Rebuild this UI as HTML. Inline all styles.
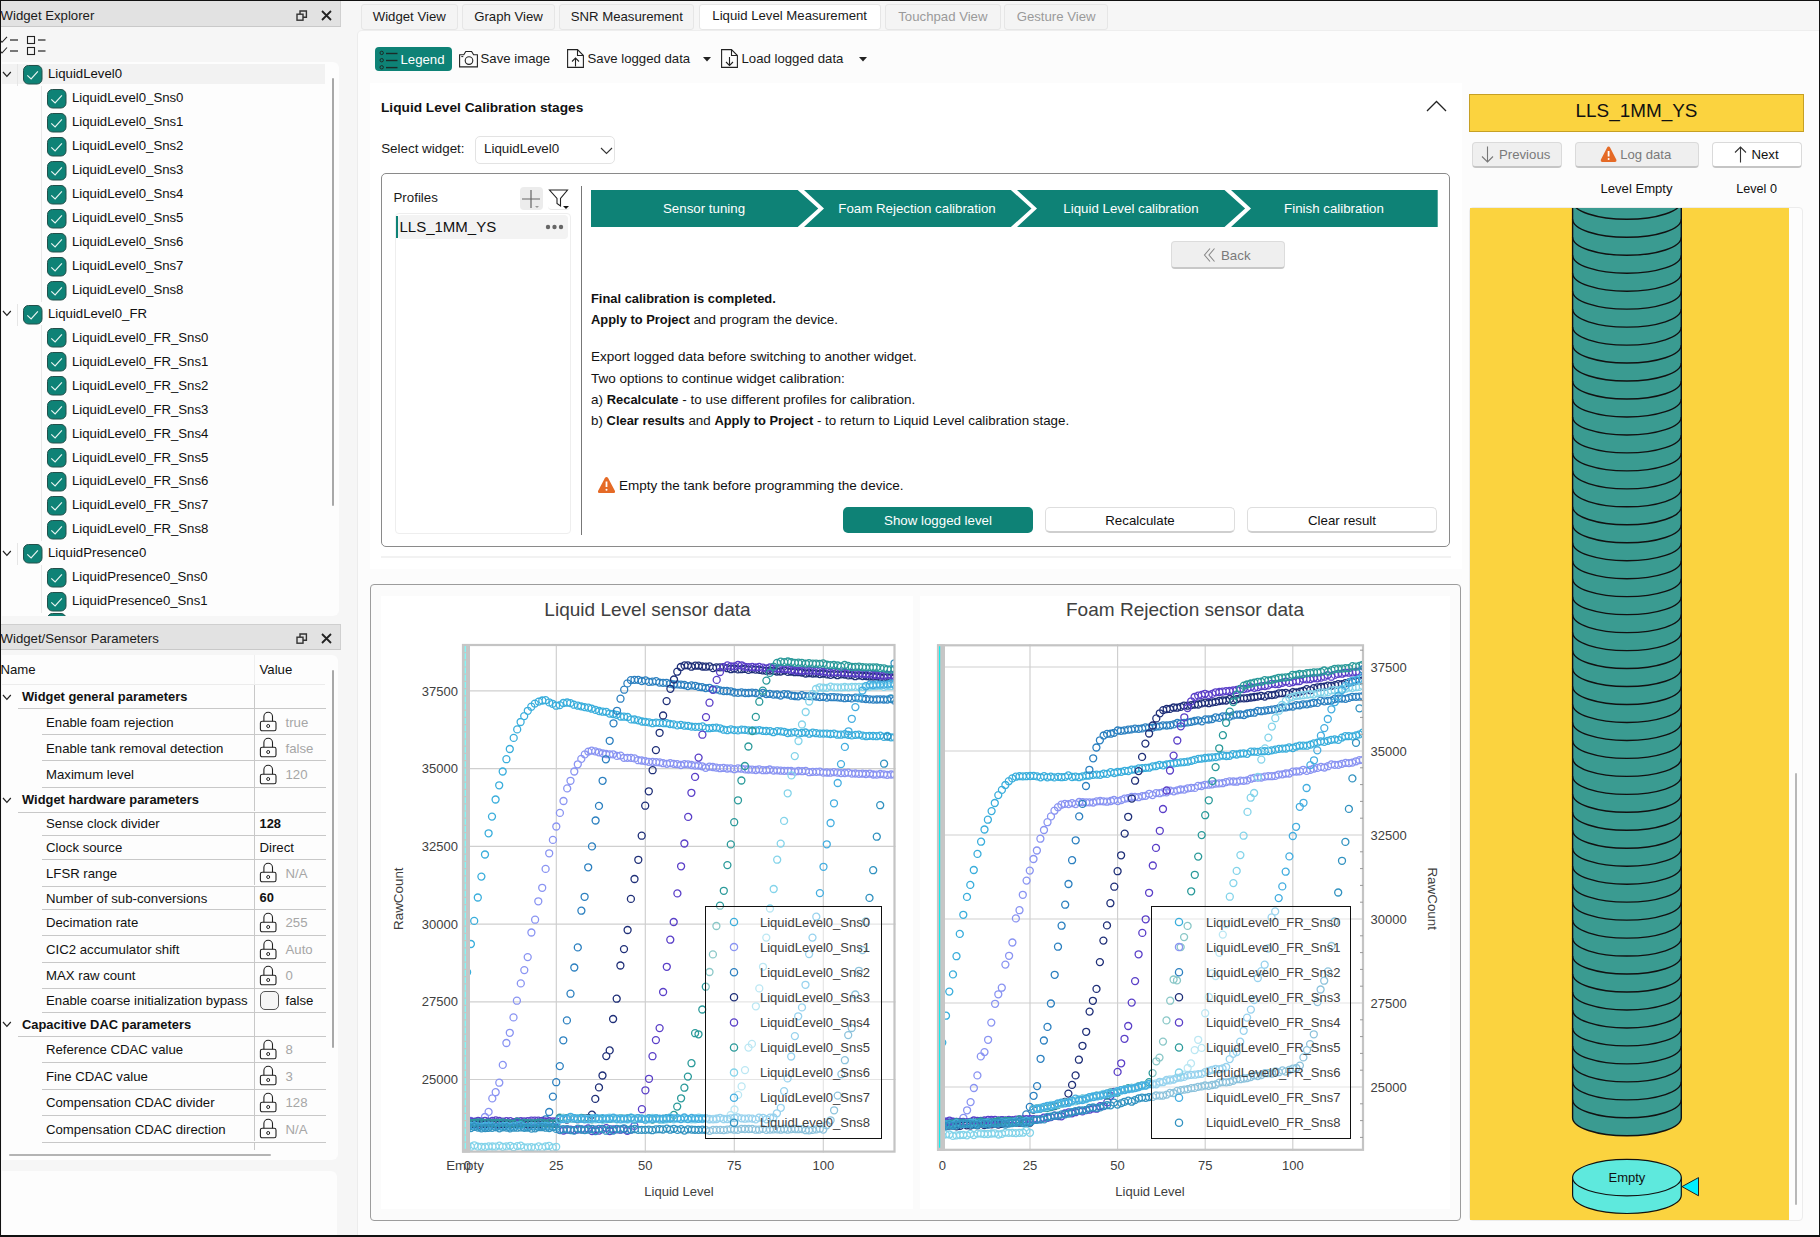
<!DOCTYPE html><html><head><meta charset="utf-8"><style>
html,body{margin:0;padding:0;}
body{width:1820px;height:1237px;position:relative;overflow:hidden;background:#f6f6f6;font-family:"Liberation Sans", sans-serif;}
.t{position:absolute;white-space:nowrap;line-height:1;}
.b{position:absolute;box-sizing:border-box;}
svg.b{overflow:visible;}

</style></head><body>
<div class="b" style="left:0px;top:0px;width:341px;height:27px;background:#e2e2e2;border-bottom:1px solid #c9c9c9;border-right:1px solid #d0d0d0;"></div>
<div class="t" style="left:0.50px;top:8.83px;font-size:13.2px;color:#1a1a1a;font-weight:normal;">Widget Explorer</div>
<svg class="b" style="left:296px;top:10px" width="12" height="12"><rect x="1" y="4.2" width="6" height="6" fill="none" stroke="#333" stroke-width="1.4"/><path d="M4 4 V1 H10.4 V7.2 H7" fill="none" stroke="#333" stroke-width="1.4"/></svg>
<svg class="b" style="left:321px;top:10px" width="11" height="11"><path d="M1 1 L10 10 M10 1 L1 10" stroke="#222" stroke-width="1.8"/></svg>
<svg class="b" style="left:0px;top:35px" width="50" height="22"><path d="M0.5 5.6 L2 7.3 L7 1.8" fill="none" stroke="#222" stroke-width="1.1"/><path d="M10 5 H18" stroke="#222" stroke-width="1.2"/><path d="M0.5 16.3 L2 18 L7 12.5" fill="none" stroke="#222" stroke-width="1.1"/><path d="M10 16 H18" stroke="#222" stroke-width="1.2"/><rect x="27.5" y="1.5" width="7" height="7" fill="none" stroke="#222" stroke-width="1.1"/><path d="M38 5 H45.5" stroke="#222" stroke-width="1.2"/><rect x="27.5" y="12.5" width="7" height="7" fill="none" stroke="#222" stroke-width="1.1"/><path d="M38 16 H45.5" stroke="#222" stroke-width="1.2"/></svg>
<div class="b" style="left:2px;top:62px;width:337px;height:554px;background:#fdfdfd;border-radius:0 6px 6px 0;"></div>
<div class="b" style="left:2px;top:64px;width:323px;height:20px;background:#f2f2f2;"></div>
<div class="b" style="left:332px;top:78px;width:2px;height:428px;background:#a8a8a8;border-radius:1px;"></div>
<svg class="b" style="left:1.8px;top:70.8px" width="9.8" height="6.4"><path d="M1 1 L4.9 5.4 L8.8 1" fill="none" stroke="#222" stroke-width="1.2"/></svg>
<svg class="b" style="left:23px;top:65.0px" width="20" height="20"><rect x="0.5" y="0.5" width="18.5" height="18.5" rx="5" fill="#0e8276" stroke="#23504b" stroke-width="1"/><path d="M4.3 10.4 L8.1 13.9 L14.9 6.4" fill="none" stroke="#e8f5f2" stroke-width="1.2"/></svg>
<div class="t" style="left:48.00px;top:67.33px;font-size:13.2px;color:#111;font-weight:normal;">LiquidLevel0</div>
<div class="b" style="left:17px;top:64.0px;width:1px;height:22px;background:#e6e6e6;"></div>
<svg class="b" style="left:47px;top:88.95px" width="20" height="20"><rect x="0.5" y="0.5" width="18.5" height="18.5" rx="5" fill="#0e8276" stroke="#23504b" stroke-width="1"/><path d="M4.3 10.4 L8.1 13.9 L14.9 6.4" fill="none" stroke="#e8f5f2" stroke-width="1.2"/></svg>
<div class="t" style="left:72.00px;top:91.28px;font-size:13.2px;color:#111;font-weight:normal;">LiquidLevel0_Sns0</div>
<div class="b" style="left:41px;top:85.95px;width:1px;height:24px;background:#e8e8e8;"></div>
<svg class="b" style="left:47px;top:112.9px" width="20" height="20"><rect x="0.5" y="0.5" width="18.5" height="18.5" rx="5" fill="#0e8276" stroke="#23504b" stroke-width="1"/><path d="M4.3 10.4 L8.1 13.9 L14.9 6.4" fill="none" stroke="#e8f5f2" stroke-width="1.2"/></svg>
<div class="t" style="left:72.00px;top:115.23px;font-size:13.2px;color:#111;font-weight:normal;">LiquidLevel0_Sns1</div>
<div class="b" style="left:41px;top:109.9px;width:1px;height:24px;background:#e8e8e8;"></div>
<svg class="b" style="left:47px;top:136.85px" width="20" height="20"><rect x="0.5" y="0.5" width="18.5" height="18.5" rx="5" fill="#0e8276" stroke="#23504b" stroke-width="1"/><path d="M4.3 10.4 L8.1 13.9 L14.9 6.4" fill="none" stroke="#e8f5f2" stroke-width="1.2"/></svg>
<div class="t" style="left:72.00px;top:139.18px;font-size:13.2px;color:#111;font-weight:normal;">LiquidLevel0_Sns2</div>
<div class="b" style="left:41px;top:133.85px;width:1px;height:24px;background:#e8e8e8;"></div>
<svg class="b" style="left:47px;top:160.8px" width="20" height="20"><rect x="0.5" y="0.5" width="18.5" height="18.5" rx="5" fill="#0e8276" stroke="#23504b" stroke-width="1"/><path d="M4.3 10.4 L8.1 13.9 L14.9 6.4" fill="none" stroke="#e8f5f2" stroke-width="1.2"/></svg>
<div class="t" style="left:72.00px;top:163.13px;font-size:13.2px;color:#111;font-weight:normal;">LiquidLevel0_Sns3</div>
<div class="b" style="left:41px;top:157.8px;width:1px;height:24px;background:#e8e8e8;"></div>
<svg class="b" style="left:47px;top:184.75px" width="20" height="20"><rect x="0.5" y="0.5" width="18.5" height="18.5" rx="5" fill="#0e8276" stroke="#23504b" stroke-width="1"/><path d="M4.3 10.4 L8.1 13.9 L14.9 6.4" fill="none" stroke="#e8f5f2" stroke-width="1.2"/></svg>
<div class="t" style="left:72.00px;top:187.08px;font-size:13.2px;color:#111;font-weight:normal;">LiquidLevel0_Sns4</div>
<div class="b" style="left:41px;top:181.75px;width:1px;height:24px;background:#e8e8e8;"></div>
<svg class="b" style="left:47px;top:208.7px" width="20" height="20"><rect x="0.5" y="0.5" width="18.5" height="18.5" rx="5" fill="#0e8276" stroke="#23504b" stroke-width="1"/><path d="M4.3 10.4 L8.1 13.9 L14.9 6.4" fill="none" stroke="#e8f5f2" stroke-width="1.2"/></svg>
<div class="t" style="left:72.00px;top:211.03px;font-size:13.2px;color:#111;font-weight:normal;">LiquidLevel0_Sns5</div>
<div class="b" style="left:41px;top:205.7px;width:1px;height:24px;background:#e8e8e8;"></div>
<svg class="b" style="left:47px;top:232.65px" width="20" height="20"><rect x="0.5" y="0.5" width="18.5" height="18.5" rx="5" fill="#0e8276" stroke="#23504b" stroke-width="1"/><path d="M4.3 10.4 L8.1 13.9 L14.9 6.4" fill="none" stroke="#e8f5f2" stroke-width="1.2"/></svg>
<div class="t" style="left:72.00px;top:234.98px;font-size:13.2px;color:#111;font-weight:normal;">LiquidLevel0_Sns6</div>
<div class="b" style="left:41px;top:229.65px;width:1px;height:24px;background:#e8e8e8;"></div>
<svg class="b" style="left:47px;top:256.6px" width="20" height="20"><rect x="0.5" y="0.5" width="18.5" height="18.5" rx="5" fill="#0e8276" stroke="#23504b" stroke-width="1"/><path d="M4.3 10.4 L8.1 13.9 L14.9 6.4" fill="none" stroke="#e8f5f2" stroke-width="1.2"/></svg>
<div class="t" style="left:72.00px;top:258.93px;font-size:13.2px;color:#111;font-weight:normal;">LiquidLevel0_Sns7</div>
<div class="b" style="left:41px;top:253.60000000000002px;width:1px;height:24px;background:#e8e8e8;"></div>
<svg class="b" style="left:47px;top:280.55px" width="20" height="20"><rect x="0.5" y="0.5" width="18.5" height="18.5" rx="5" fill="#0e8276" stroke="#23504b" stroke-width="1"/><path d="M4.3 10.4 L8.1 13.9 L14.9 6.4" fill="none" stroke="#e8f5f2" stroke-width="1.2"/></svg>
<div class="t" style="left:72.00px;top:282.88px;font-size:13.2px;color:#111;font-weight:normal;">LiquidLevel0_Sns8</div>
<div class="b" style="left:41px;top:277.55px;width:1px;height:24px;background:#e8e8e8;"></div>
<svg class="b" style="left:1.8px;top:310.3px" width="9.8" height="6.4"><path d="M1 1 L4.9 5.4 L8.8 1" fill="none" stroke="#222" stroke-width="1.2"/></svg>
<svg class="b" style="left:23px;top:304.5px" width="20" height="20"><rect x="0.5" y="0.5" width="18.5" height="18.5" rx="5" fill="#0e8276" stroke="#23504b" stroke-width="1"/><path d="M4.3 10.4 L8.1 13.9 L14.9 6.4" fill="none" stroke="#e8f5f2" stroke-width="1.2"/></svg>
<div class="t" style="left:48.00px;top:306.83px;font-size:13.2px;color:#111;font-weight:normal;">LiquidLevel0_FR</div>
<div class="b" style="left:17px;top:303.5px;width:1px;height:22px;background:#e6e6e6;"></div>
<svg class="b" style="left:47px;top:328.45px" width="20" height="20"><rect x="0.5" y="0.5" width="18.5" height="18.5" rx="5" fill="#0e8276" stroke="#23504b" stroke-width="1"/><path d="M4.3 10.4 L8.1 13.9 L14.9 6.4" fill="none" stroke="#e8f5f2" stroke-width="1.2"/></svg>
<div class="t" style="left:72.00px;top:330.78px;font-size:13.2px;color:#111;font-weight:normal;">LiquidLevel0_FR_Sns0</div>
<div class="b" style="left:41px;top:325.45px;width:1px;height:24px;background:#e8e8e8;"></div>
<svg class="b" style="left:47px;top:352.4px" width="20" height="20"><rect x="0.5" y="0.5" width="18.5" height="18.5" rx="5" fill="#0e8276" stroke="#23504b" stroke-width="1"/><path d="M4.3 10.4 L8.1 13.9 L14.9 6.4" fill="none" stroke="#e8f5f2" stroke-width="1.2"/></svg>
<div class="t" style="left:72.00px;top:354.73px;font-size:13.2px;color:#111;font-weight:normal;">LiquidLevel0_FR_Sns1</div>
<div class="b" style="left:41px;top:349.4px;width:1px;height:24px;background:#e8e8e8;"></div>
<svg class="b" style="left:47px;top:376.35px" width="20" height="20"><rect x="0.5" y="0.5" width="18.5" height="18.5" rx="5" fill="#0e8276" stroke="#23504b" stroke-width="1"/><path d="M4.3 10.4 L8.1 13.9 L14.9 6.4" fill="none" stroke="#e8f5f2" stroke-width="1.2"/></svg>
<div class="t" style="left:72.00px;top:378.68px;font-size:13.2px;color:#111;font-weight:normal;">LiquidLevel0_FR_Sns2</div>
<div class="b" style="left:41px;top:373.35px;width:1px;height:24px;background:#e8e8e8;"></div>
<svg class="b" style="left:47px;top:400.3px" width="20" height="20"><rect x="0.5" y="0.5" width="18.5" height="18.5" rx="5" fill="#0e8276" stroke="#23504b" stroke-width="1"/><path d="M4.3 10.4 L8.1 13.9 L14.9 6.4" fill="none" stroke="#e8f5f2" stroke-width="1.2"/></svg>
<div class="t" style="left:72.00px;top:402.63px;font-size:13.2px;color:#111;font-weight:normal;">LiquidLevel0_FR_Sns3</div>
<div class="b" style="left:41px;top:397.3px;width:1px;height:24px;background:#e8e8e8;"></div>
<svg class="b" style="left:47px;top:424.25px" width="20" height="20"><rect x="0.5" y="0.5" width="18.5" height="18.5" rx="5" fill="#0e8276" stroke="#23504b" stroke-width="1"/><path d="M4.3 10.4 L8.1 13.9 L14.9 6.4" fill="none" stroke="#e8f5f2" stroke-width="1.2"/></svg>
<div class="t" style="left:72.00px;top:426.58px;font-size:13.2px;color:#111;font-weight:normal;">LiquidLevel0_FR_Sns4</div>
<div class="b" style="left:41px;top:421.25px;width:1px;height:24px;background:#e8e8e8;"></div>
<svg class="b" style="left:47px;top:448.2px" width="20" height="20"><rect x="0.5" y="0.5" width="18.5" height="18.5" rx="5" fill="#0e8276" stroke="#23504b" stroke-width="1"/><path d="M4.3 10.4 L8.1 13.9 L14.9 6.4" fill="none" stroke="#e8f5f2" stroke-width="1.2"/></svg>
<div class="t" style="left:72.00px;top:450.53px;font-size:13.2px;color:#111;font-weight:normal;">LiquidLevel0_FR_Sns5</div>
<div class="b" style="left:41px;top:445.2px;width:1px;height:24px;background:#e8e8e8;"></div>
<svg class="b" style="left:47px;top:472.15px" width="20" height="20"><rect x="0.5" y="0.5" width="18.5" height="18.5" rx="5" fill="#0e8276" stroke="#23504b" stroke-width="1"/><path d="M4.3 10.4 L8.1 13.9 L14.9 6.4" fill="none" stroke="#e8f5f2" stroke-width="1.2"/></svg>
<div class="t" style="left:72.00px;top:474.48px;font-size:13.2px;color:#111;font-weight:normal;">LiquidLevel0_FR_Sns6</div>
<div class="b" style="left:41px;top:469.15px;width:1px;height:24px;background:#e8e8e8;"></div>
<svg class="b" style="left:47px;top:496.1px" width="20" height="20"><rect x="0.5" y="0.5" width="18.5" height="18.5" rx="5" fill="#0e8276" stroke="#23504b" stroke-width="1"/><path d="M4.3 10.4 L8.1 13.9 L14.9 6.4" fill="none" stroke="#e8f5f2" stroke-width="1.2"/></svg>
<div class="t" style="left:72.00px;top:498.43px;font-size:13.2px;color:#111;font-weight:normal;">LiquidLevel0_FR_Sns7</div>
<div class="b" style="left:41px;top:493.1px;width:1px;height:24px;background:#e8e8e8;"></div>
<svg class="b" style="left:47px;top:520.05px" width="20" height="20"><rect x="0.5" y="0.5" width="18.5" height="18.5" rx="5" fill="#0e8276" stroke="#23504b" stroke-width="1"/><path d="M4.3 10.4 L8.1 13.9 L14.9 6.4" fill="none" stroke="#e8f5f2" stroke-width="1.2"/></svg>
<div class="t" style="left:72.00px;top:522.38px;font-size:13.2px;color:#111;font-weight:normal;">LiquidLevel0_FR_Sns8</div>
<div class="b" style="left:41px;top:517.05px;width:1px;height:24px;background:#e8e8e8;"></div>
<svg class="b" style="left:1.8px;top:549.8px" width="9.8" height="6.4"><path d="M1 1 L4.9 5.4 L8.8 1" fill="none" stroke="#222" stroke-width="1.2"/></svg>
<svg class="b" style="left:23px;top:544.0px" width="20" height="20"><rect x="0.5" y="0.5" width="18.5" height="18.5" rx="5" fill="#0e8276" stroke="#23504b" stroke-width="1"/><path d="M4.3 10.4 L8.1 13.9 L14.9 6.4" fill="none" stroke="#e8f5f2" stroke-width="1.2"/></svg>
<div class="t" style="left:48.00px;top:546.33px;font-size:13.2px;color:#111;font-weight:normal;">LiquidPresence0</div>
<div class="b" style="left:17px;top:543.0px;width:1px;height:22px;background:#e6e6e6;"></div>
<svg class="b" style="left:47px;top:567.95px" width="20" height="20"><rect x="0.5" y="0.5" width="18.5" height="18.5" rx="5" fill="#0e8276" stroke="#23504b" stroke-width="1"/><path d="M4.3 10.4 L8.1 13.9 L14.9 6.4" fill="none" stroke="#e8f5f2" stroke-width="1.2"/></svg>
<div class="t" style="left:72.00px;top:570.28px;font-size:13.2px;color:#111;font-weight:normal;">LiquidPresence0_Sns0</div>
<div class="b" style="left:41px;top:564.95px;width:1px;height:24px;background:#e8e8e8;"></div>
<svg class="b" style="left:47px;top:591.9px" width="20" height="20"><rect x="0.5" y="0.5" width="18.5" height="18.5" rx="5" fill="#0e8276" stroke="#23504b" stroke-width="1"/><path d="M4.3 10.4 L8.1 13.9 L14.9 6.4" fill="none" stroke="#e8f5f2" stroke-width="1.2"/></svg>
<div class="t" style="left:72.00px;top:594.23px;font-size:13.2px;color:#111;font-weight:normal;">LiquidPresence0_Sns1</div>
<div class="b" style="left:41px;top:588.9px;width:1px;height:24px;background:#e8e8e8;"></div>
<svg class="b" style="left:47px;top:612.5px;overflow:hidden" width="20" height="3.5"><rect x="0.5" y="0.5" width="18.5" height="18.5" rx="5" fill="#0e8276" stroke="#23504b" stroke-width="1"/></svg>
<div class="b" style="left:0px;top:624px;width:341px;height:26px;background:#e2e2e2;border-top:1px solid #cfcfcf;border-bottom:1px solid #c9c9c9;border-right:1px solid #d0d0d0;"></div>
<div class="t" style="left:0.50px;top:632.23px;font-size:13.2px;color:#1a1a1a;font-weight:normal;">Widget/Sensor Parameters</div>
<svg class="b" style="left:296px;top:633px" width="12" height="12"><rect x="1" y="4.2" width="6" height="6" fill="none" stroke="#333" stroke-width="1.4"/><path d="M4 4 V1 H10.4 V7.2 H7" fill="none" stroke="#333" stroke-width="1.4"/></svg>
<svg class="b" style="left:321px;top:633px" width="11" height="11"><path d="M1 1 L10 10 M10 1 L1 10" stroke="#222" stroke-width="1.8"/></svg>
<div class="b" style="left:2px;top:655px;width:336px;height:505px;background:#fdfdfd;border-radius:0 6px 6px 0;"></div>
<div class="t" style="left:0.50px;top:662.83px;font-size:13.2px;color:#111;font-weight:normal;">Name</div>
<div class="t" style="left:259.50px;top:662.83px;font-size:13.2px;color:#111;font-weight:normal;">Value</div>
<div class="b" style="left:2px;top:684px;width:323px;height:1px;background:#ececec;"></div>
<div class="b" style="left:254px;top:655px;width:1px;height:30px;background:#efefef;"></div>
<div class="b" style="left:332px;top:670px;width:2px;height:378px;background:#a8a8a8;border-radius:1px;"></div>
<svg class="b" style="left:2px;top:693.75px" width="9.8" height="6.4"><path d="M1 1 L4.9 5.4 L8.8 1" fill="none" stroke="#222" stroke-width="1.2"/></svg>
<div class="t" style="left:22.00px;top:690.93px;font-size:12.9px;color:#111;font-weight:bold;">Widget general parameters</div>
<div class="b" style="left:18px;top:708px;width:308px;height:1px;background:#c8c8c8;"></div>
<div class="b" style="left:254px;top:685px;width:1px;height:24px;background:#c8c8c8;"></div>
<div class="t" style="left:46.00px;top:715.58px;font-size:13.2px;color:#111;font-weight:normal;">Enable foam rejection</div>
<div class="b" style="left:42px;top:734px;width:284px;height:1px;background:#c8c8c8;"></div>
<svg class="b" style="left:259px;top:711.1500000000001px" width="19" height="21"><path d="M4.9 10.2 V5.6 A4.3 4.3 0 0 1 13.5 5.6 V10.2" fill="none" stroke="#222" stroke-width="1.1"/><rect x="1.4" y="10.2" width="15.6" height="9.6" rx="1.8" fill="none" stroke="#222" stroke-width="1.1"/><circle cx="9.2" cy="15" r="1.5" fill="none" stroke="#222" stroke-width="1"/></svg>
<div class="t" style="left:285.50px;top:715.58px;font-size:13.2px;color:#a6a6a6;font-weight:normal;">true</div>
<div class="b" style="left:254px;top:708px;width:1px;height:26px;background:#c8c8c8;"></div>
<div class="t" style="left:46.00px;top:741.53px;font-size:13.2px;color:#111;font-weight:normal;">Enable tank removal detection</div>
<div class="b" style="left:42px;top:760px;width:284px;height:1px;background:#c8c8c8;"></div>
<svg class="b" style="left:259px;top:737.1px" width="19" height="21"><path d="M4.9 10.2 V5.6 A4.3 4.3 0 0 1 13.5 5.6 V10.2" fill="none" stroke="#222" stroke-width="1.1"/><rect x="1.4" y="10.2" width="15.6" height="9.6" rx="1.8" fill="none" stroke="#222" stroke-width="1.1"/><circle cx="9.2" cy="15" r="1.5" fill="none" stroke="#222" stroke-width="1"/></svg>
<div class="t" style="left:285.50px;top:741.53px;font-size:13.2px;color:#a6a6a6;font-weight:normal;">false</div>
<div class="b" style="left:254px;top:734px;width:1px;height:26px;background:#c8c8c8;"></div>
<div class="t" style="left:46.00px;top:767.98px;font-size:13.2px;color:#111;font-weight:normal;">Maximum level</div>
<div class="b" style="left:42px;top:787px;width:284px;height:1px;background:#c8c8c8;"></div>
<svg class="b" style="left:259px;top:763.55px" width="19" height="21"><path d="M4.9 10.2 V5.6 A4.3 4.3 0 0 1 13.5 5.6 V10.2" fill="none" stroke="#222" stroke-width="1.1"/><rect x="1.4" y="10.2" width="15.6" height="9.6" rx="1.8" fill="none" stroke="#222" stroke-width="1.1"/><circle cx="9.2" cy="15" r="1.5" fill="none" stroke="#222" stroke-width="1"/></svg>
<div class="t" style="left:285.50px;top:767.98px;font-size:13.2px;color:#a6a6a6;font-weight:normal;">120</div>
<div class="b" style="left:254px;top:760px;width:1px;height:27px;background:#c8c8c8;"></div>
<svg class="b" style="left:2px;top:796.6500000000001px" width="9.8" height="6.4"><path d="M1 1 L4.9 5.4 L8.8 1" fill="none" stroke="#222" stroke-width="1.2"/></svg>
<div class="t" style="left:22.00px;top:793.83px;font-size:12.9px;color:#111;font-weight:bold;">Widget hardware parameters</div>
<div class="b" style="left:18px;top:812px;width:308px;height:1px;background:#c8c8c8;"></div>
<div class="b" style="left:254px;top:787px;width:1px;height:24px;background:#c8c8c8;"></div>
<div class="t" style="left:46.00px;top:817.48px;font-size:13.2px;color:#111;font-weight:normal;">Sense clock divider</div>
<div class="b" style="left:42px;top:835px;width:284px;height:1px;background:#c8c8c8;"></div>
<div class="t" style="left:259.50px;top:817.73px;font-size:12.9px;color:#111;font-weight:bold;">128</div>
<div class="b" style="left:254px;top:812px;width:1px;height:24px;background:#c8c8c8;"></div>
<div class="t" style="left:46.00px;top:841.38px;font-size:13.2px;color:#111;font-weight:normal;">Clock source</div>
<div class="b" style="left:42px;top:859px;width:284px;height:1px;background:#c8c8c8;"></div>
<div class="t" style="left:259.50px;top:841.38px;font-size:13.2px;color:#111;font-weight:normal;">Direct</div>
<div class="b" style="left:254px;top:835px;width:1px;height:24px;background:#c8c8c8;"></div>
<div class="t" style="left:46.00px;top:866.63px;font-size:13.2px;color:#111;font-weight:normal;">LFSR range</div>
<div class="b" style="left:42px;top:886px;width:284px;height:1px;background:#c8c8c8;"></div>
<svg class="b" style="left:259px;top:862.2px" width="19" height="21"><path d="M4.9 10.2 V5.6 A4.3 4.3 0 0 1 13.5 5.6 V10.2" fill="none" stroke="#222" stroke-width="1.1"/><rect x="1.4" y="10.2" width="15.6" height="9.6" rx="1.8" fill="none" stroke="#222" stroke-width="1.1"/><circle cx="9.2" cy="15" r="1.5" fill="none" stroke="#222" stroke-width="1"/></svg>
<div class="t" style="left:285.50px;top:866.63px;font-size:13.2px;color:#a6a6a6;font-weight:normal;">N/A</div>
<div class="b" style="left:254px;top:859px;width:1px;height:26px;background:#c8c8c8;"></div>
<div class="t" style="left:46.00px;top:891.58px;font-size:13.2px;color:#111;font-weight:normal;">Number of sub-conversions</div>
<div class="b" style="left:42px;top:909px;width:284px;height:1px;background:#c8c8c8;"></div>
<div class="t" style="left:259.50px;top:891.83px;font-size:12.9px;color:#111;font-weight:bold;">60</div>
<div class="b" style="left:254px;top:886px;width:1px;height:24px;background:#c8c8c8;"></div>
<div class="t" style="left:46.00px;top:916.48px;font-size:13.2px;color:#111;font-weight:normal;">Decimation rate</div>
<div class="b" style="left:42px;top:935px;width:284px;height:1px;background:#c8c8c8;"></div>
<svg class="b" style="left:259px;top:912.05px" width="19" height="21"><path d="M4.9 10.2 V5.6 A4.3 4.3 0 0 1 13.5 5.6 V10.2" fill="none" stroke="#222" stroke-width="1.1"/><rect x="1.4" y="10.2" width="15.6" height="9.6" rx="1.8" fill="none" stroke="#222" stroke-width="1.1"/><circle cx="9.2" cy="15" r="1.5" fill="none" stroke="#222" stroke-width="1"/></svg>
<div class="t" style="left:285.50px;top:916.48px;font-size:13.2px;color:#a6a6a6;font-weight:normal;">255</div>
<div class="b" style="left:254px;top:909px;width:1px;height:26px;background:#c8c8c8;"></div>
<div class="t" style="left:46.00px;top:942.93px;font-size:13.2px;color:#111;font-weight:normal;">CIC2 accumulator shift</div>
<div class="b" style="left:42px;top:962px;width:284px;height:1px;background:#c8c8c8;"></div>
<svg class="b" style="left:259px;top:938.5px" width="19" height="21"><path d="M4.9 10.2 V5.6 A4.3 4.3 0 0 1 13.5 5.6 V10.2" fill="none" stroke="#222" stroke-width="1.1"/><rect x="1.4" y="10.2" width="15.6" height="9.6" rx="1.8" fill="none" stroke="#222" stroke-width="1.1"/><circle cx="9.2" cy="15" r="1.5" fill="none" stroke="#222" stroke-width="1"/></svg>
<div class="t" style="left:285.50px;top:942.93px;font-size:13.2px;color:#a6a6a6;font-weight:normal;">Auto</div>
<div class="b" style="left:254px;top:935px;width:1px;height:27px;background:#c8c8c8;"></div>
<div class="t" style="left:46.00px;top:969.43px;font-size:13.2px;color:#111;font-weight:normal;">MAX raw count</div>
<div class="b" style="left:42px;top:988px;width:284px;height:1px;background:#c8c8c8;"></div>
<svg class="b" style="left:259px;top:965.0px" width="19" height="21"><path d="M4.9 10.2 V5.6 A4.3 4.3 0 0 1 13.5 5.6 V10.2" fill="none" stroke="#222" stroke-width="1.1"/><rect x="1.4" y="10.2" width="15.6" height="9.6" rx="1.8" fill="none" stroke="#222" stroke-width="1.1"/><circle cx="9.2" cy="15" r="1.5" fill="none" stroke="#222" stroke-width="1"/></svg>
<div class="t" style="left:285.50px;top:969.43px;font-size:13.2px;color:#a6a6a6;font-weight:normal;">0</div>
<div class="b" style="left:254px;top:962px;width:1px;height:26px;background:#c8c8c8;"></div>
<div class="t" style="left:46.00px;top:994.48px;font-size:13.2px;color:#111;font-weight:normal;">Enable coarse initialization bypass</div>
<div class="b" style="left:42px;top:1012px;width:284px;height:1px;background:#c8c8c8;"></div>
<div class="b" style="left:260px;top:990.8499999999999px;width:19px;height:19px;border:1px solid #555;border-radius:5px;background:#f6f6f6;"></div>
<div class="t" style="left:285.50px;top:994.48px;font-size:13.2px;color:#111;font-weight:normal;">false</div>
<div class="b" style="left:254px;top:988px;width:1px;height:24px;background:#c8c8c8;"></div>
<svg class="b" style="left:2px;top:1021.3500000000001px" width="9.8" height="6.4"><path d="M1 1 L4.9 5.4 L8.8 1" fill="none" stroke="#222" stroke-width="1.2"/></svg>
<div class="t" style="left:22.00px;top:1018.53px;font-size:12.9px;color:#111;font-weight:bold;">Capacitive DAC parameters</div>
<div class="b" style="left:18px;top:1036px;width:308px;height:1px;background:#c8c8c8;"></div>
<div class="b" style="left:254px;top:1012px;width:1px;height:24px;background:#c8c8c8;"></div>
<div class="t" style="left:46.00px;top:1043.23px;font-size:13.2px;color:#111;font-weight:normal;">Reference CDAC value</div>
<div class="b" style="left:42px;top:1062px;width:284px;height:1px;background:#c8c8c8;"></div>
<svg class="b" style="left:259px;top:1038.8px" width="19" height="21"><path d="M4.9 10.2 V5.6 A4.3 4.3 0 0 1 13.5 5.6 V10.2" fill="none" stroke="#222" stroke-width="1.1"/><rect x="1.4" y="10.2" width="15.6" height="9.6" rx="1.8" fill="none" stroke="#222" stroke-width="1.1"/><circle cx="9.2" cy="15" r="1.5" fill="none" stroke="#222" stroke-width="1"/></svg>
<div class="t" style="left:285.50px;top:1043.23px;font-size:13.2px;color:#a6a6a6;font-weight:normal;">8</div>
<div class="b" style="left:254px;top:1036px;width:1px;height:26px;background:#c8c8c8;"></div>
<div class="t" style="left:46.00px;top:1069.88px;font-size:13.2px;color:#111;font-weight:normal;">Fine CDAC value</div>
<div class="b" style="left:42px;top:1089px;width:284px;height:1px;background:#c8c8c8;"></div>
<svg class="b" style="left:259px;top:1065.45px" width="19" height="21"><path d="M4.9 10.2 V5.6 A4.3 4.3 0 0 1 13.5 5.6 V10.2" fill="none" stroke="#222" stroke-width="1.1"/><rect x="1.4" y="10.2" width="15.6" height="9.6" rx="1.8" fill="none" stroke="#222" stroke-width="1.1"/><circle cx="9.2" cy="15" r="1.5" fill="none" stroke="#222" stroke-width="1"/></svg>
<div class="t" style="left:285.50px;top:1069.88px;font-size:13.2px;color:#a6a6a6;font-weight:normal;">3</div>
<div class="b" style="left:254px;top:1062px;width:1px;height:27px;background:#c8c8c8;"></div>
<div class="t" style="left:46.00px;top:1096.48px;font-size:13.2px;color:#111;font-weight:normal;">Compensation CDAC divider</div>
<div class="b" style="left:42px;top:1115px;width:284px;height:1px;background:#c8c8c8;"></div>
<svg class="b" style="left:259px;top:1092.05px" width="19" height="21"><path d="M4.9 10.2 V5.6 A4.3 4.3 0 0 1 13.5 5.6 V10.2" fill="none" stroke="#222" stroke-width="1.1"/><rect x="1.4" y="10.2" width="15.6" height="9.6" rx="1.8" fill="none" stroke="#222" stroke-width="1.1"/><circle cx="9.2" cy="15" r="1.5" fill="none" stroke="#222" stroke-width="1"/></svg>
<div class="t" style="left:285.50px;top:1096.48px;font-size:13.2px;color:#a6a6a6;font-weight:normal;">128</div>
<div class="b" style="left:254px;top:1089px;width:1px;height:26px;background:#c8c8c8;"></div>
<div class="t" style="left:46.00px;top:1122.63px;font-size:13.2px;color:#111;font-weight:normal;">Compensation CDAC direction</div>
<div class="b" style="left:42px;top:1142px;width:284px;height:1px;background:#c8c8c8;"></div>
<svg class="b" style="left:259px;top:1118.2px" width="19" height="21"><path d="M4.9 10.2 V5.6 A4.3 4.3 0 0 1 13.5 5.6 V10.2" fill="none" stroke="#222" stroke-width="1.1"/><rect x="1.4" y="10.2" width="15.6" height="9.6" rx="1.8" fill="none" stroke="#222" stroke-width="1.1"/><circle cx="9.2" cy="15" r="1.5" fill="none" stroke="#222" stroke-width="1"/></svg>
<div class="t" style="left:285.50px;top:1122.63px;font-size:13.2px;color:#a6a6a6;font-weight:normal;">N/A</div>
<div class="b" style="left:254px;top:1115px;width:1px;height:26px;background:#c8c8c8;"></div>
<div class="b" style="left:254px;top:1142px;width:1px;height:8px;background:#c8c8c8;"></div>
<div class="b" style="left:9px;top:1154px;width:262px;height:2px;background:#b4b4b4;border-radius:1px;"></div>
<div class="b" style="left:2px;top:1171px;width:335px;height:66px;background:#fdfdfd;border-radius:0 6px 0 0;"></div>
<div class="b" style="left:360.5px;top:3.5px;width:97.5px;height:26px;background:#f4f4f4;border:1px solid #e6e6e6;border-radius:3px;"></div>
<div class="t" style="left:360.50px;top:9.63px;width:97.5px;text-align:center;font-size:13.2px;color:#1a1a1a;font-weight:normal;">Widget View</div>
<div class="b" style="left:462px;top:3.5px;width:93px;height:26px;background:#f4f4f4;border:1px solid #e6e6e6;border-radius:3px;"></div>
<div class="t" style="left:462.00px;top:9.63px;width:93px;text-align:center;font-size:13.2px;color:#1a1a1a;font-weight:normal;">Graph View</div>
<div class="b" style="left:559.3px;top:3.5px;width:134.9000000000001px;height:26px;background:#f4f4f4;border:1px solid #e6e6e6;border-radius:3px;"></div>
<div class="t" style="left:559.30px;top:9.63px;width:134.9000000000001px;text-align:center;font-size:13.2px;color:#1a1a1a;font-weight:normal;">SNR Measurement</div>
<div class="b" style="left:698.5px;top:3.5px;width:182.29999999999995px;height:26px;background:#ffffff;border:1px solid #e6e6e6;border-radius:3px;"></div>
<div class="t" style="left:698.50px;top:9.03px;width:182.29999999999995px;text-align:center;font-size:13.2px;color:#1a1a1a;font-weight:normal;">Liquid Level Measurement</div>
<div class="b" style="left:884.8px;top:3.5px;width:116.20000000000005px;height:26px;background:#f4f4f4;border:1px solid #e6e6e6;border-radius:3px;"></div>
<div class="t" style="left:884.80px;top:9.63px;width:116.20000000000005px;text-align:center;font-size:13.2px;color:#9a9a9a;font-weight:normal;">Touchpad View</div>
<div class="b" style="left:1004.3px;top:3.5px;width:103.60000000000014px;height:26px;background:#f4f4f4;border:1px solid #e6e6e6;border-radius:3px;"></div>
<div class="t" style="left:1004.30px;top:9.63px;width:103.60000000000014px;text-align:center;font-size:13.2px;color:#9a9a9a;font-weight:normal;">Gesture View</div>
<div class="b" style="left:357px;top:29.5px;width:1463px;height:1207px;background:#fcfcfc;border-radius:5px 0 0 0;border-left:1px solid #ececec;border-top:1px solid #eeeeee;"></div>
<div class="b" style="left:375px;top:47px;width:77px;height:24px;background:#0e8276;border-radius:4px;"></div>
<svg class="b" style="left:378px;top:50px" width="22" height="20"><circle cx="3.7" cy="2.9" r="1.7" fill="none" stroke="#1b2b28" stroke-width="1"/><path d="M8 3.5 H19.5" stroke="#1b2b28" stroke-width="1.4"/><circle cx="3.7" cy="10.2" r="1.7" fill="none" stroke="#1b2b28" stroke-width="1"/><path d="M8 10.5 H19.5" stroke="#1b2b28" stroke-width="1.4"/><circle cx="3.7" cy="17.3" r="1.7" fill="none" stroke="#1b2b28" stroke-width="1"/><path d="M8 17.6 H19.5" stroke="#1b2b28" stroke-width="1.4"/></svg>
<div class="t" style="left:400.50px;top:53.43px;font-size:13.2px;color:#ffffff;font-weight:normal;">Legend</div>
<svg class="b" style="left:459px;top:49.5px" width="20" height="19"><path d="M0.6 4.8 H4.8 L6.8 1.5 H12.6 L14.6 4.8 H18.4 V16.9 H0.6 Z" fill="none" stroke="#222" stroke-width="1.1"/><circle cx="10" cy="10.6" r="3.8" fill="none" stroke="#222" stroke-width="1.1"/><path d="M2.3 6.6 H4.3" stroke="#222" stroke-width="1"/></svg>
<div class="t" style="left:480.50px;top:51.63px;font-size:13.2px;color:#1a1a1a;font-weight:normal;">Save image</div>
<svg class="b" style="left:567px;top:49px" width="18" height="20"><path d="M0.6 0.6 H10.5 L16.4 6.5 V18.4 H0.6 Z M10.5 0.6 V6.5 H16.4" fill="none" stroke="#222" stroke-width="1.1"/><path d="M8.5 17.5 V9 M5 12.5 L8.5 9 L12 12.5" fill="none" stroke="#222" stroke-width="1.1"/></svg>
<div class="t" style="left:587.50px;top:51.63px;font-size:13.2px;color:#1a1a1a;font-weight:normal;">Save logged data</div>
<svg class="b" style="left:703px;top:57px" width="9" height="5"><path d="M0 0 H8 L4 4.5 Z" fill="#222"/></svg>
<svg class="b" style="left:720.5px;top:49px" width="18" height="20"><path d="M0.6 0.6 H10.5 L16.4 6.5 V18.4 H0.6 Z M10.5 0.6 V6.5 H16.4" fill="none" stroke="#222" stroke-width="1.1"/><path d="M8.5 8 V16.5 M5 13 L8.5 16.5 L12 13" fill="none" stroke="#222" stroke-width="1.1"/></svg>
<div class="t" style="left:741.50px;top:51.63px;font-size:13.2px;color:#1a1a1a;font-weight:normal;">Load logged data</div>
<svg class="b" style="left:858.5px;top:57px" width="9" height="5"><path d="M0 0 H8 L4 4.5 Z" fill="#222"/></svg>
<div class="b" style="left:369.5px;top:83px;width:1092.5px;height:486px;background:#ffffff;"></div>
<div class="t" style="left:381.00px;top:100.60px;font-size:13.7px;color:#111;font-weight:bold;">Liquid Level Calibration stages</div>
<svg class="b" style="left:1426px;top:100px" width="21" height="12"><path d="M1 11 L10.5 1.5 L20 11" fill="none" stroke="#222" stroke-width="1.3"/></svg>
<div class="t" style="left:381.20px;top:142.16px;font-size:13.4px;color:#1a1a1a;font-weight:normal;">Select widget:</div>
<div class="b" style="left:475px;top:136px;width:140px;height:28px;background:#fff;border:1px solid #e3e3e3;border-radius:5px;"></div>
<div class="t" style="left:484.00px;top:142.16px;font-size:13.4px;color:#1a1a1a;font-weight:normal;">LiquidLevel0</div>
<svg class="b" style="left:599.5px;top:147px" width="13" height="7.5"><path d="M1 1 L6.5 6.5 L12 1" fill="none" stroke="#333" stroke-width="1.1"/></svg>
<div class="b" style="left:381px;top:173px;width:1069px;height:374px;border:1px solid #8a8a8a;border-radius:5px;background:#fff;"></div>
<div class="t" style="left:393.50px;top:190.74px;font-size:13.3px;color:#1a1a1a;font-weight:normal;">Profiles</div>
<div class="b" style="left:519.5px;top:187px;width:23px;height:23px;background:#ececec;border-radius:4px;"></div>
<svg class="b" style="left:520px;top:188px" width="22" height="22"><path d="M11 2 V20 M2 11 H20" stroke="#666" stroke-width="1.2"/><path d="M15 18 H19 L17 20 Z" fill="#999"/></svg>
<div class="b" style="left:547.5px;top:187px;width:22px;height:23px;background:#fff;border-radius:4px;border-bottom:1px solid #e8e8e8;"></div>
<svg class="b" style="left:548px;top:188px" width="22" height="22"><path d="M1.5 2 H19.5 L12.5 10.5 V18 L9 15.5 V10.5 Z" fill="none" stroke="#222" stroke-width="1.1"/><path d="M15 18 H21 L18 21 Z" fill="#111"/></svg>
<div class="b" style="left:394.5px;top:212.5px;width:176px;height:321px;border:1px solid #eeeeee;border-radius:4px;background:#fff;"></div>
<div class="b" style="left:398px;top:215px;width:170px;height:24px;background:#f3f3f3;border-radius:4px;"></div>
<div class="b" style="left:396.3px;top:216px;width:1.4px;height:22px;background:#0e8276;"></div>
<div class="t" style="left:399.50px;top:219.30px;font-size:15.0px;color:#111;font-weight:normal;">LLS_1MM_YS</div>
<svg class="b" style="left:545px;top:224px" width="20" height="6"><circle cx="3" cy="3" r="2.2" fill="#666"/><circle cx="9.5" cy="3" r="2.2" fill="#666"/><circle cx="16" cy="3" r="2.2" fill="#666"/></svg>
<div class="b" style="left:581px;top:186px;width:1px;height:349px;background:#777;"></div>
<svg class="b" style="left:0px;top:0px" width="1820" height="300"><path d="M591 190 H797.7 L818.3000000000001 208.5 L797.7 227 H591 Z M804 190 H1010.9 L1031.5 208.5 L1010.9 227 H804 L824.0 208.5 Z M1017 190 H1224.5 L1245.1 208.5 L1224.5 227 H1017 L1037.0 208.5 Z M1231 190 H1437.7 V227 H1231 L1251.0 208.5 Z" fill="#0e8276"/></svg>
<div class="t" style="left:554.00px;top:201.74px;width:300px;text-align:center;font-size:13.3px;color:#fff;font-weight:normal;">Sensor tuning</div>
<div class="t" style="left:767.00px;top:201.74px;width:300px;text-align:center;font-size:13.3px;color:#fff;font-weight:normal;">Foam Rejection calibration</div>
<div class="t" style="left:981.00px;top:201.74px;width:300px;text-align:center;font-size:13.3px;color:#fff;font-weight:normal;">Liquid Level calibration</div>
<div class="t" style="left:1184.00px;top:201.74px;width:300px;text-align:center;font-size:13.3px;color:#fff;font-weight:normal;">Finish calibration</div>
<div class="b" style="left:1171px;top:241px;width:114px;height:28px;background:#efefef;border:1px solid #dcdcdc;border-bottom:2px solid #c8c8c8;border-radius:4px;"></div>
<svg class="b" style="left:1203px;top:247px" width="14" height="16"><path d="M7 1.5 L1.5 8 L7 14.5 M11.5 1.5 L6 8 L11.5 14.5" fill="none" stroke="#888" stroke-width="1.1"/></svg>
<div class="t" style="left:1221.00px;top:248.74px;font-size:13.3px;color:#7a7a7a;font-weight:normal;">Back</div>
<div class="t" style="left:591.00px;top:292.88px;font-size:12.9px;color:#111;font-weight:bold;">Final calibration is completed.</div>
<div class="t" style="left:591.00px;top:313.26px;font-size:13.4px;color:#111;font-weight:normal;"><b style="font-size:12.9px">Apply to Project</b> and program the device.</div>
<div class="t" style="left:591.00px;top:349.97px;font-size:13.5px;color:#111;font-weight:normal;">Export logged data before switching to another widget.</div>
<div class="t" style="left:591.00px;top:371.77px;font-size:13.5px;color:#111;font-weight:normal;">Two options to continue widget calibration:</div>
<div class="t" style="left:591.00px;top:392.57px;font-size:13.5px;color:#111;font-weight:normal;">a) <b style="font-size:12.9px">Recalculate</b> - to use different profiles for calibration.</div>
<div class="t" style="left:591.00px;top:414.30px;font-size:13.35px;color:#111;font-weight:normal;">b) <b style="font-size:12.9px">Clear results</b> and <b style="font-size:12.9px">Apply to Project</b> - to return to Liquid Level calibration stage.</div>
<svg class="b" style="left:597px;top:476px" width="19" height="18"><path d="M9.5 1 Q10.5 1 11.2 2.2 L18 15 Q18.6 16.8 16.8 17 H2.2 Q0.4 16.8 1 15 L7.8 2.2 Q8.5 1 9.5 1 Z" fill="#e56a26"/><path d="M9.5 5.5 V11" stroke="#fff" stroke-width="1.8"/><circle cx="9.5" cy="13.8" r="1" fill="#fff"/></svg>
<div class="t" style="left:619.00px;top:479.17px;font-size:13.5px;color:#111;font-weight:normal;">Empty the tank before programming the device.</div>
<div class="b" style="left:843px;top:507px;width:190px;height:26px;background:#0e8276;border-radius:5px;"></div>
<div class="t" style="left:843.00px;top:513.74px;width:190px;text-align:center;font-size:13.3px;color:#fff;font-weight:normal;">Show logged level</div>
<div class="b" style="left:1045px;top:507px;width:190px;height:26px;background:#fff;border:1px solid #dedede;border-bottom:2px solid #cfcfcf;border-radius:5px;"></div>
<div class="t" style="left:1045.00px;top:513.74px;width:190px;text-align:center;font-size:13.3px;color:#111;font-weight:normal;">Recalculate</div>
<div class="b" style="left:1247px;top:507px;width:190px;height:26px;background:#fff;border:1px solid #dedede;border-bottom:2px solid #cfcfcf;border-radius:5px;"></div>
<div class="t" style="left:1247.00px;top:513.74px;width:190px;text-align:center;font-size:13.3px;color:#111;font-weight:normal;">Clear result</div>
<div class="b" style="left:381px;top:556px;width:1070px;height:2px;background:#f2f2f2;"></div>
<div class="b" style="left:370px;top:584px;width:1091px;height:637px;background:#fbfbfb;border:1px solid #9c9c9c;border-radius:4px;"></div>
<div class="b" style="left:381px;top:596px;width:532px;height:613px;background:#ffffff;"></div>
<div class="b" style="left:920px;top:596px;width:530px;height:613px;background:#ffffff;"></div>
<div class="b" style="left:1469px;top:94px;width:335px;height:37.5px;background:#fbd33f;border:1.6px solid #c6a024;"></div>
<div class="t" style="left:1469.00px;top:102.30px;width:335px;text-align:center;font-size:18.9px;color:#111;font-weight:normal;">LLS_1MM_YS</div>
<div class="b" style="left:1471.5px;top:142px;width:90px;height:26px;background:#efefef;border:1px solid #dadada;border-bottom:2px solid #c5c5c5;border-radius:4px;"></div>
<svg class="b" style="left:1480.5px;top:145.5px" width="14" height="17"><path d="M6.5 0.5 V16 M1 10.5 L6.5 16 L12 10.5" fill="none" stroke="#777" stroke-width="1.1"/></svg>
<div class="t" style="left:1499.00px;top:147.63px;font-size:13.2px;color:#7a7a7a;font-weight:normal;">Previous</div>
<div class="b" style="left:1574.5px;top:142px;width:124px;height:26px;background:#efefef;border:1px solid #dadada;border-bottom:2px solid #c5c5c5;border-radius:4px;"></div>
<svg class="b" style="left:1599.5px;top:145.5px" width="18" height="17"><path d="M8.6 0.5 Q9.6 0.5 10.2 1.7 L16.4 13.7 Q17 15.6 15.2 16 H2 Q0.2 15.6 0.8 13.7 L7 1.7 Q7.6 0.5 8.6 0.5 Z" fill="#e56a26"/><path d="M8.6 5 V10.5" stroke="#fff" stroke-width="1.8"/><circle cx="8.6" cy="13" r="1" fill="#fff"/></svg>
<div class="t" style="left:1620.30px;top:147.71px;font-size:13.1px;color:#7a7a7a;font-weight:normal;">Log data</div>
<div class="b" style="left:1711.5px;top:142px;width:90px;height:26px;background:#fff;border:1px solid #dadada;border-bottom:2px solid #c5c5c5;border-radius:4px;"></div>
<svg class="b" style="left:1733.5px;top:145.5px" width="14" height="17"><path d="M6.5 16.5 V1 M1 6.5 L6.5 1 L12 6.5" fill="none" stroke="#333" stroke-width="1.1"/></svg>
<div class="t" style="left:1751.50px;top:147.63px;font-size:13.2px;color:#111;font-weight:normal;">Next</div>
<div class="t" style="left:1600.50px;top:182.21px;font-size:13.1px;color:#111;font-weight:normal;">Level Empty</div>
<div class="t" style="left:1736.30px;top:182.83px;font-size:12.6px;color:#111;font-weight:normal;">Level 0</div>
<div class="b" style="left:1469px;top:207px;width:334px;height:1014px;border:1px solid #ececec;border-radius:4px;background:#fdfdfd;"></div>
<div class="b" style="left:1470px;top:208px;width:319px;height:1012px;background:#fbd33f;"></div>
<div class="b" style="left:1795px;top:773px;width:2px;height:432px;background:#b8b8b8;border-radius:1px;"></div>
<svg class="b" style="left:0;top:0" width="1820" height="1237"><clipPath id="clipll"><rect x="463" y="645" width="431.5" height="506.5999999999999"/></clipPath><path d="M556.3 644 V1152.6 M645.3 644 V1152.6 M734.3 644 V1152.6 M823.3 644 V1152.6 M462 690.9 H895.5 M462 768.6 H895.5 M462 846.3 H895.5 M462 924.1 H895.5 M462 1001.8 H895.5 M462 1079.5 H895.5" stroke="#cfcfcf" stroke-width="1.15" fill="none"/><path d="M463.6 972.2a3.5 3.5 0 1 0 7 0a3.5 3.5 0 1 0 -7 0M467.4 944.0a3.5 3.5 0 1 0 7 0a3.5 3.5 0 1 0 -7 0M470.7 920.9a3.5 3.5 0 1 0 7 0a3.5 3.5 0 1 0 -7 0M474.3 897.5a3.5 3.5 0 1 0 7 0a3.5 3.5 0 1 0 -7 0M477.9 876.6a3.5 3.5 0 1 0 7 0a3.5 3.5 0 1 0 -7 0M481.5 854.5a3.5 3.5 0 1 0 7 0a3.5 3.5 0 1 0 -7 0M485.1 833.3a3.5 3.5 0 1 0 7 0a3.5 3.5 0 1 0 -7 0M488.5 816.6a3.5 3.5 0 1 0 7 0a3.5 3.5 0 1 0 -7 0M492.1 799.5a3.5 3.5 0 1 0 7 0a3.5 3.5 0 1 0 -7 0M495.7 785.3a3.5 3.5 0 1 0 7 0a3.5 3.5 0 1 0 -7 0M499.2 771.5a3.5 3.5 0 1 0 7 0a3.5 3.5 0 1 0 -7 0M502.9 759.2a3.5 3.5 0 1 0 7 0a3.5 3.5 0 1 0 -7 0M506.3 749.0a3.5 3.5 0 1 0 7 0a3.5 3.5 0 1 0 -7 0M510.2 737.9a3.5 3.5 0 1 0 7 0a3.5 3.5 0 1 0 -7 0M513.7 729.4a3.5 3.5 0 1 0 7 0a3.5 3.5 0 1 0 -7 0M517.1 722.0a3.5 3.5 0 1 0 7 0a3.5 3.5 0 1 0 -7 0M520.7 716.1a3.5 3.5 0 1 0 7 0a3.5 3.5 0 1 0 -7 0M524.3 710.8a3.5 3.5 0 1 0 7 0a3.5 3.5 0 1 0 -7 0M527.8 706.7a3.5 3.5 0 1 0 7 0a3.5 3.5 0 1 0 -7 0M531.3 703.6a3.5 3.5 0 1 0 7 0a3.5 3.5 0 1 0 -7 0M535.2 701.6a3.5 3.5 0 1 0 7 0a3.5 3.5 0 1 0 -7 0M538.8 700.5a3.5 3.5 0 1 0 7 0a3.5 3.5 0 1 0 -7 0M542.1 700.2a3.5 3.5 0 1 0 7 0a3.5 3.5 0 1 0 -7 0M545.7 702.4a3.5 3.5 0 1 0 7 0a3.5 3.5 0 1 0 -7 0M549.1 703.8a3.5 3.5 0 1 0 7 0a3.5 3.5 0 1 0 -7 0M552.6 705.7a3.5 3.5 0 1 0 7 0a3.5 3.5 0 1 0 -7 0M556.3 705.1a3.5 3.5 0 1 0 7 0a3.5 3.5 0 1 0 -7 0M559.8 703.0a3.5 3.5 0 1 0 7 0a3.5 3.5 0 1 0 -7 0M563.6 702.5a3.5 3.5 0 1 0 7 0a3.5 3.5 0 1 0 -7 0M566.9 703.1a3.5 3.5 0 1 0 7 0a3.5 3.5 0 1 0 -7 0M570.4 704.7a3.5 3.5 0 1 0 7 0a3.5 3.5 0 1 0 -7 0M574.4 705.7a3.5 3.5 0 1 0 7 0a3.5 3.5 0 1 0 -7 0M577.7 706.4a3.5 3.5 0 1 0 7 0a3.5 3.5 0 1 0 -7 0M581.1 707.1a3.5 3.5 0 1 0 7 0a3.5 3.5 0 1 0 -7 0M584.9 707.7a3.5 3.5 0 1 0 7 0a3.5 3.5 0 1 0 -7 0M588.2 708.7a3.5 3.5 0 1 0 7 0a3.5 3.5 0 1 0 -7 0M592.0 709.9a3.5 3.5 0 1 0 7 0a3.5 3.5 0 1 0 -7 0M595.7 711.0a3.5 3.5 0 1 0 7 0a3.5 3.5 0 1 0 -7 0M599.3 711.7a3.5 3.5 0 1 0 7 0a3.5 3.5 0 1 0 -7 0M602.7 711.8a3.5 3.5 0 1 0 7 0a3.5 3.5 0 1 0 -7 0M606.1 713.6a3.5 3.5 0 1 0 7 0a3.5 3.5 0 1 0 -7 0M609.7 714.0a3.5 3.5 0 1 0 7 0a3.5 3.5 0 1 0 -7 0M613.2 714.8a3.5 3.5 0 1 0 7 0a3.5 3.5 0 1 0 -7 0M617.0 716.5a3.5 3.5 0 1 0 7 0a3.5 3.5 0 1 0 -7 0M620.5 716.7a3.5 3.5 0 1 0 7 0a3.5 3.5 0 1 0 -7 0M624.1 717.0a3.5 3.5 0 1 0 7 0a3.5 3.5 0 1 0 -7 0M627.5 719.4a3.5 3.5 0 1 0 7 0a3.5 3.5 0 1 0 -7 0M631.0 719.5a3.5 3.5 0 1 0 7 0a3.5 3.5 0 1 0 -7 0M634.8 720.3a3.5 3.5 0 1 0 7 0a3.5 3.5 0 1 0 -7 0M638.5 721.5a3.5 3.5 0 1 0 7 0a3.5 3.5 0 1 0 -7 0M642.0 721.8a3.5 3.5 0 1 0 7 0a3.5 3.5 0 1 0 -7 0M645.5 722.3a3.5 3.5 0 1 0 7 0a3.5 3.5 0 1 0 -7 0M649.1 723.2a3.5 3.5 0 1 0 7 0a3.5 3.5 0 1 0 -7 0M652.6 722.6a3.5 3.5 0 1 0 7 0a3.5 3.5 0 1 0 -7 0M655.9 722.9a3.5 3.5 0 1 0 7 0a3.5 3.5 0 1 0 -7 0M659.6 723.1a3.5 3.5 0 1 0 7 0a3.5 3.5 0 1 0 -7 0M663.1 723.2a3.5 3.5 0 1 0 7 0a3.5 3.5 0 1 0 -7 0M666.5 724.0a3.5 3.5 0 1 0 7 0a3.5 3.5 0 1 0 -7 0M670.1 724.4a3.5 3.5 0 1 0 7 0a3.5 3.5 0 1 0 -7 0M673.8 725.4a3.5 3.5 0 1 0 7 0a3.5 3.5 0 1 0 -7 0M677.3 724.8a3.5 3.5 0 1 0 7 0a3.5 3.5 0 1 0 -7 0M681.1 725.7a3.5 3.5 0 1 0 7 0a3.5 3.5 0 1 0 -7 0M684.7 725.9a3.5 3.5 0 1 0 7 0a3.5 3.5 0 1 0 -7 0M688.1 726.6a3.5 3.5 0 1 0 7 0a3.5 3.5 0 1 0 -7 0M691.9 726.8a3.5 3.5 0 1 0 7 0a3.5 3.5 0 1 0 -7 0M695.4 726.9a3.5 3.5 0 1 0 7 0a3.5 3.5 0 1 0 -7 0M699.0 726.4a3.5 3.5 0 1 0 7 0a3.5 3.5 0 1 0 -7 0M702.3 728.2a3.5 3.5 0 1 0 7 0a3.5 3.5 0 1 0 -7 0M705.8 728.2a3.5 3.5 0 1 0 7 0a3.5 3.5 0 1 0 -7 0M709.4 727.8a3.5 3.5 0 1 0 7 0a3.5 3.5 0 1 0 -7 0M712.9 727.6a3.5 3.5 0 1 0 7 0a3.5 3.5 0 1 0 -7 0M716.5 728.3a3.5 3.5 0 1 0 7 0a3.5 3.5 0 1 0 -7 0M720.2 729.7a3.5 3.5 0 1 0 7 0a3.5 3.5 0 1 0 -7 0M723.9 730.2a3.5 3.5 0 1 0 7 0a3.5 3.5 0 1 0 -7 0M727.4 729.3a3.5 3.5 0 1 0 7 0a3.5 3.5 0 1 0 -7 0M730.8 730.1a3.5 3.5 0 1 0 7 0a3.5 3.5 0 1 0 -7 0M734.5 730.4a3.5 3.5 0 1 0 7 0a3.5 3.5 0 1 0 -7 0M738.1 729.7a3.5 3.5 0 1 0 7 0a3.5 3.5 0 1 0 -7 0M741.3 729.8a3.5 3.5 0 1 0 7 0a3.5 3.5 0 1 0 -7 0M745.1 730.3a3.5 3.5 0 1 0 7 0a3.5 3.5 0 1 0 -7 0M748.8 730.4a3.5 3.5 0 1 0 7 0a3.5 3.5 0 1 0 -7 0M752.3 730.5a3.5 3.5 0 1 0 7 0a3.5 3.5 0 1 0 -7 0M755.9 730.2a3.5 3.5 0 1 0 7 0a3.5 3.5 0 1 0 -7 0M759.3 730.8a3.5 3.5 0 1 0 7 0a3.5 3.5 0 1 0 -7 0M762.7 731.0a3.5 3.5 0 1 0 7 0a3.5 3.5 0 1 0 -7 0M766.6 731.1a3.5 3.5 0 1 0 7 0a3.5 3.5 0 1 0 -7 0M769.9 732.2a3.5 3.5 0 1 0 7 0a3.5 3.5 0 1 0 -7 0M773.7 731.1a3.5 3.5 0 1 0 7 0a3.5 3.5 0 1 0 -7 0M777.3 731.4a3.5 3.5 0 1 0 7 0a3.5 3.5 0 1 0 -7 0M780.6 731.8a3.5 3.5 0 1 0 7 0a3.5 3.5 0 1 0 -7 0M784.2 733.0a3.5 3.5 0 1 0 7 0a3.5 3.5 0 1 0 -7 0M788.0 732.6a3.5 3.5 0 1 0 7 0a3.5 3.5 0 1 0 -7 0M791.5 732.1a3.5 3.5 0 1 0 7 0a3.5 3.5 0 1 0 -7 0M794.8 733.4a3.5 3.5 0 1 0 7 0a3.5 3.5 0 1 0 -7 0M798.3 732.9a3.5 3.5 0 1 0 7 0a3.5 3.5 0 1 0 -7 0M801.9 732.5a3.5 3.5 0 1 0 7 0a3.5 3.5 0 1 0 -7 0M805.8 733.7a3.5 3.5 0 1 0 7 0a3.5 3.5 0 1 0 -7 0M809.3 732.6a3.5 3.5 0 1 0 7 0a3.5 3.5 0 1 0 -7 0M812.6 733.2a3.5 3.5 0 1 0 7 0a3.5 3.5 0 1 0 -7 0M816.4 733.6a3.5 3.5 0 1 0 7 0a3.5 3.5 0 1 0 -7 0M820.0 733.6a3.5 3.5 0 1 0 7 0a3.5 3.5 0 1 0 -7 0M823.5 733.6a3.5 3.5 0 1 0 7 0a3.5 3.5 0 1 0 -7 0M826.9 734.0a3.5 3.5 0 1 0 7 0a3.5 3.5 0 1 0 -7 0M830.5 733.7a3.5 3.5 0 1 0 7 0a3.5 3.5 0 1 0 -7 0M833.9 734.7a3.5 3.5 0 1 0 7 0a3.5 3.5 0 1 0 -7 0M837.4 734.7a3.5 3.5 0 1 0 7 0a3.5 3.5 0 1 0 -7 0M841.4 734.2a3.5 3.5 0 1 0 7 0a3.5 3.5 0 1 0 -7 0M844.8 734.8a3.5 3.5 0 1 0 7 0a3.5 3.5 0 1 0 -7 0M848.3 735.4a3.5 3.5 0 1 0 7 0a3.5 3.5 0 1 0 -7 0M852.1 734.8a3.5 3.5 0 1 0 7 0a3.5 3.5 0 1 0 -7 0M855.4 734.7a3.5 3.5 0 1 0 7 0a3.5 3.5 0 1 0 -7 0M859.2 735.7a3.5 3.5 0 1 0 7 0a3.5 3.5 0 1 0 -7 0M862.7 736.2a3.5 3.5 0 1 0 7 0a3.5 3.5 0 1 0 -7 0M866.0 735.9a3.5 3.5 0 1 0 7 0a3.5 3.5 0 1 0 -7 0M869.6 736.0a3.5 3.5 0 1 0 7 0a3.5 3.5 0 1 0 -7 0M873.2 736.2a3.5 3.5 0 1 0 7 0a3.5 3.5 0 1 0 -7 0M876.7 735.7a3.5 3.5 0 1 0 7 0a3.5 3.5 0 1 0 -7 0M880.4 736.9a3.5 3.5 0 1 0 7 0a3.5 3.5 0 1 0 -7 0M883.8 736.0a3.5 3.5 0 1 0 7 0a3.5 3.5 0 1 0 -7 0M887.5 737.3a3.5 3.5 0 1 0 7 0a3.5 3.5 0 1 0 -7 0M890.9 737.3a3.5 3.5 0 1 0 7 0a3.5 3.5 0 1 0 -7 0" stroke="#3aaedc" stroke-width="1.3" fill="none" clip-path="url(#clipll)"/><path d="M463.7 1121.1a3.5 3.5 0 1 0 7 0a3.5 3.5 0 1 0 -7 0M467.2 1121.0a3.5 3.5 0 1 0 7 0a3.5 3.5 0 1 0 -7 0M470.8 1121.7a3.5 3.5 0 1 0 7 0a3.5 3.5 0 1 0 -7 0M474.3 1122.2a3.5 3.5 0 1 0 7 0a3.5 3.5 0 1 0 -7 0M477.9 1121.5a3.5 3.5 0 1 0 7 0a3.5 3.5 0 1 0 -7 0M481.5 1117.0a3.5 3.5 0 1 0 7 0a3.5 3.5 0 1 0 -7 0M485.1 1111.9a3.5 3.5 0 1 0 7 0a3.5 3.5 0 1 0 -7 0M488.8 1098.4a3.5 3.5 0 1 0 7 0a3.5 3.5 0 1 0 -7 0M492.2 1092.2a3.5 3.5 0 1 0 7 0a3.5 3.5 0 1 0 -7 0M495.8 1082.7a3.5 3.5 0 1 0 7 0a3.5 3.5 0 1 0 -7 0M499.3 1064.9a3.5 3.5 0 1 0 7 0a3.5 3.5 0 1 0 -7 0M502.9 1043.0a3.5 3.5 0 1 0 7 0a3.5 3.5 0 1 0 -7 0M506.3 1032.8a3.5 3.5 0 1 0 7 0a3.5 3.5 0 1 0 -7 0M510.0 1017.4a3.5 3.5 0 1 0 7 0a3.5 3.5 0 1 0 -7 0M513.4 1000.7a3.5 3.5 0 1 0 7 0a3.5 3.5 0 1 0 -7 0M517.3 983.4a3.5 3.5 0 1 0 7 0a3.5 3.5 0 1 0 -7 0M520.8 970.1a3.5 3.5 0 1 0 7 0a3.5 3.5 0 1 0 -7 0M524.2 957.1a3.5 3.5 0 1 0 7 0a3.5 3.5 0 1 0 -7 0M527.9 932.5a3.5 3.5 0 1 0 7 0a3.5 3.5 0 1 0 -7 0M531.6 919.7a3.5 3.5 0 1 0 7 0a3.5 3.5 0 1 0 -7 0M534.8 901.3a3.5 3.5 0 1 0 7 0a3.5 3.5 0 1 0 -7 0M538.7 887.8a3.5 3.5 0 1 0 7 0a3.5 3.5 0 1 0 -7 0M542.1 868.9a3.5 3.5 0 1 0 7 0a3.5 3.5 0 1 0 -7 0M545.7 853.3a3.5 3.5 0 1 0 7 0a3.5 3.5 0 1 0 -7 0M549.4 839.9a3.5 3.5 0 1 0 7 0a3.5 3.5 0 1 0 -7 0M552.8 826.5a3.5 3.5 0 1 0 7 0a3.5 3.5 0 1 0 -7 0M556.4 812.9a3.5 3.5 0 1 0 7 0a3.5 3.5 0 1 0 -7 0M560.0 801.0a3.5 3.5 0 1 0 7 0a3.5 3.5 0 1 0 -7 0M563.7 788.4a3.5 3.5 0 1 0 7 0a3.5 3.5 0 1 0 -7 0M567.0 780.8a3.5 3.5 0 1 0 7 0a3.5 3.5 0 1 0 -7 0M570.8 771.5a3.5 3.5 0 1 0 7 0a3.5 3.5 0 1 0 -7 0M574.3 764.3a3.5 3.5 0 1 0 7 0a3.5 3.5 0 1 0 -7 0M577.8 758.9a3.5 3.5 0 1 0 7 0a3.5 3.5 0 1 0 -7 0M581.3 754.4a3.5 3.5 0 1 0 7 0a3.5 3.5 0 1 0 -7 0M584.8 751.6a3.5 3.5 0 1 0 7 0a3.5 3.5 0 1 0 -7 0M588.2 750.7a3.5 3.5 0 1 0 7 0a3.5 3.5 0 1 0 -7 0M591.8 751.4a3.5 3.5 0 1 0 7 0a3.5 3.5 0 1 0 -7 0M595.4 752.3a3.5 3.5 0 1 0 7 0a3.5 3.5 0 1 0 -7 0M599.2 753.3a3.5 3.5 0 1 0 7 0a3.5 3.5 0 1 0 -7 0M602.6 754.0a3.5 3.5 0 1 0 7 0a3.5 3.5 0 1 0 -7 0M606.1 754.4a3.5 3.5 0 1 0 7 0a3.5 3.5 0 1 0 -7 0M609.6 754.3a3.5 3.5 0 1 0 7 0a3.5 3.5 0 1 0 -7 0M613.5 755.9a3.5 3.5 0 1 0 7 0a3.5 3.5 0 1 0 -7 0M617.1 755.6a3.5 3.5 0 1 0 7 0a3.5 3.5 0 1 0 -7 0M620.5 757.8a3.5 3.5 0 1 0 7 0a3.5 3.5 0 1 0 -7 0M623.9 757.8a3.5 3.5 0 1 0 7 0a3.5 3.5 0 1 0 -7 0M627.5 757.9a3.5 3.5 0 1 0 7 0a3.5 3.5 0 1 0 -7 0M631.1 758.4a3.5 3.5 0 1 0 7 0a3.5 3.5 0 1 0 -7 0M634.7 760.2a3.5 3.5 0 1 0 7 0a3.5 3.5 0 1 0 -7 0M638.1 760.5a3.5 3.5 0 1 0 7 0a3.5 3.5 0 1 0 -7 0M641.8 761.1a3.5 3.5 0 1 0 7 0a3.5 3.5 0 1 0 -7 0M645.3 761.8a3.5 3.5 0 1 0 7 0a3.5 3.5 0 1 0 -7 0M649.1 761.9a3.5 3.5 0 1 0 7 0a3.5 3.5 0 1 0 -7 0M652.7 762.2a3.5 3.5 0 1 0 7 0a3.5 3.5 0 1 0 -7 0M656.1 762.4a3.5 3.5 0 1 0 7 0a3.5 3.5 0 1 0 -7 0M659.5 763.2a3.5 3.5 0 1 0 7 0a3.5 3.5 0 1 0 -7 0M663.4 763.8a3.5 3.5 0 1 0 7 0a3.5 3.5 0 1 0 -7 0M666.7 763.2a3.5 3.5 0 1 0 7 0a3.5 3.5 0 1 0 -7 0M670.2 763.9a3.5 3.5 0 1 0 7 0a3.5 3.5 0 1 0 -7 0M673.7 764.2a3.5 3.5 0 1 0 7 0a3.5 3.5 0 1 0 -7 0M677.4 765.0a3.5 3.5 0 1 0 7 0a3.5 3.5 0 1 0 -7 0M681.0 764.1a3.5 3.5 0 1 0 7 0a3.5 3.5 0 1 0 -7 0M684.5 764.3a3.5 3.5 0 1 0 7 0a3.5 3.5 0 1 0 -7 0M688.0 765.0a3.5 3.5 0 1 0 7 0a3.5 3.5 0 1 0 -7 0M691.7 765.6a3.5 3.5 0 1 0 7 0a3.5 3.5 0 1 0 -7 0M695.0 765.5a3.5 3.5 0 1 0 7 0a3.5 3.5 0 1 0 -7 0M698.7 766.3a3.5 3.5 0 1 0 7 0a3.5 3.5 0 1 0 -7 0M702.2 767.8a3.5 3.5 0 1 0 7 0a3.5 3.5 0 1 0 -7 0M705.9 766.7a3.5 3.5 0 1 0 7 0a3.5 3.5 0 1 0 -7 0M709.3 767.0a3.5 3.5 0 1 0 7 0a3.5 3.5 0 1 0 -7 0M712.8 767.6a3.5 3.5 0 1 0 7 0a3.5 3.5 0 1 0 -7 0M716.5 768.2a3.5 3.5 0 1 0 7 0a3.5 3.5 0 1 0 -7 0M720.0 767.8a3.5 3.5 0 1 0 7 0a3.5 3.5 0 1 0 -7 0M723.7 768.5a3.5 3.5 0 1 0 7 0a3.5 3.5 0 1 0 -7 0M727.3 768.4a3.5 3.5 0 1 0 7 0a3.5 3.5 0 1 0 -7 0M730.9 769.2a3.5 3.5 0 1 0 7 0a3.5 3.5 0 1 0 -7 0M734.5 768.4a3.5 3.5 0 1 0 7 0a3.5 3.5 0 1 0 -7 0M738.0 768.7a3.5 3.5 0 1 0 7 0a3.5 3.5 0 1 0 -7 0M741.7 769.3a3.5 3.5 0 1 0 7 0a3.5 3.5 0 1 0 -7 0M745.0 769.5a3.5 3.5 0 1 0 7 0a3.5 3.5 0 1 0 -7 0M748.6 769.6a3.5 3.5 0 1 0 7 0a3.5 3.5 0 1 0 -7 0M752.4 770.0a3.5 3.5 0 1 0 7 0a3.5 3.5 0 1 0 -7 0M755.6 769.3a3.5 3.5 0 1 0 7 0a3.5 3.5 0 1 0 -7 0M759.4 770.2a3.5 3.5 0 1 0 7 0a3.5 3.5 0 1 0 -7 0M762.9 770.2a3.5 3.5 0 1 0 7 0a3.5 3.5 0 1 0 -7 0M766.2 769.5a3.5 3.5 0 1 0 7 0a3.5 3.5 0 1 0 -7 0M770.1 770.5a3.5 3.5 0 1 0 7 0a3.5 3.5 0 1 0 -7 0M773.7 770.3a3.5 3.5 0 1 0 7 0a3.5 3.5 0 1 0 -7 0M777.2 770.7a3.5 3.5 0 1 0 7 0a3.5 3.5 0 1 0 -7 0M780.8 770.8a3.5 3.5 0 1 0 7 0a3.5 3.5 0 1 0 -7 0M784.4 770.8a3.5 3.5 0 1 0 7 0a3.5 3.5 0 1 0 -7 0M787.6 771.0a3.5 3.5 0 1 0 7 0a3.5 3.5 0 1 0 -7 0M791.4 771.6a3.5 3.5 0 1 0 7 0a3.5 3.5 0 1 0 -7 0M794.9 771.0a3.5 3.5 0 1 0 7 0a3.5 3.5 0 1 0 -7 0M798.6 771.2a3.5 3.5 0 1 0 7 0a3.5 3.5 0 1 0 -7 0M802.2 770.9a3.5 3.5 0 1 0 7 0a3.5 3.5 0 1 0 -7 0M805.7 772.2a3.5 3.5 0 1 0 7 0a3.5 3.5 0 1 0 -7 0M809.2 771.9a3.5 3.5 0 1 0 7 0a3.5 3.5 0 1 0 -7 0M812.9 771.8a3.5 3.5 0 1 0 7 0a3.5 3.5 0 1 0 -7 0M816.4 771.7a3.5 3.5 0 1 0 7 0a3.5 3.5 0 1 0 -7 0M819.9 772.6a3.5 3.5 0 1 0 7 0a3.5 3.5 0 1 0 -7 0M823.3 772.5a3.5 3.5 0 1 0 7 0a3.5 3.5 0 1 0 -7 0M826.8 772.7a3.5 3.5 0 1 0 7 0a3.5 3.5 0 1 0 -7 0M830.4 772.1a3.5 3.5 0 1 0 7 0a3.5 3.5 0 1 0 -7 0M834.0 772.6a3.5 3.5 0 1 0 7 0a3.5 3.5 0 1 0 -7 0M837.5 773.1a3.5 3.5 0 1 0 7 0a3.5 3.5 0 1 0 -7 0M841.3 773.0a3.5 3.5 0 1 0 7 0a3.5 3.5 0 1 0 -7 0M844.8 772.7a3.5 3.5 0 1 0 7 0a3.5 3.5 0 1 0 -7 0M848.4 773.6a3.5 3.5 0 1 0 7 0a3.5 3.5 0 1 0 -7 0M851.9 773.5a3.5 3.5 0 1 0 7 0a3.5 3.5 0 1 0 -7 0M855.5 773.8a3.5 3.5 0 1 0 7 0a3.5 3.5 0 1 0 -7 0M859.0 773.7a3.5 3.5 0 1 0 7 0a3.5 3.5 0 1 0 -7 0M862.4 774.0a3.5 3.5 0 1 0 7 0a3.5 3.5 0 1 0 -7 0M866.3 773.7a3.5 3.5 0 1 0 7 0a3.5 3.5 0 1 0 -7 0M869.8 774.5a3.5 3.5 0 1 0 7 0a3.5 3.5 0 1 0 -7 0M873.2 774.6a3.5 3.5 0 1 0 7 0a3.5 3.5 0 1 0 -7 0M876.8 774.0a3.5 3.5 0 1 0 7 0a3.5 3.5 0 1 0 -7 0M880.4 774.3a3.5 3.5 0 1 0 7 0a3.5 3.5 0 1 0 -7 0M883.7 774.9a3.5 3.5 0 1 0 7 0a3.5 3.5 0 1 0 -7 0M887.6 774.5a3.5 3.5 0 1 0 7 0a3.5 3.5 0 1 0 -7 0M890.9 774.6a3.5 3.5 0 1 0 7 0a3.5 3.5 0 1 0 -7 0" stroke="#8a94f2" stroke-width="1.3" fill="none" clip-path="url(#clipll)"/><path d="M464.0 1122.6a3.5 3.5 0 1 0 7 0a3.5 3.5 0 1 0 -7 0M467.6 1122.8a3.5 3.5 0 1 0 7 0a3.5 3.5 0 1 0 -7 0M470.9 1123.1a3.5 3.5 0 1 0 7 0a3.5 3.5 0 1 0 -7 0M474.3 1123.4a3.5 3.5 0 1 0 7 0a3.5 3.5 0 1 0 -7 0M477.9 1123.1a3.5 3.5 0 1 0 7 0a3.5 3.5 0 1 0 -7 0M481.4 1124.5a3.5 3.5 0 1 0 7 0a3.5 3.5 0 1 0 -7 0M485.1 1123.6a3.5 3.5 0 1 0 7 0a3.5 3.5 0 1 0 -7 0M488.5 1123.0a3.5 3.5 0 1 0 7 0a3.5 3.5 0 1 0 -7 0M492.2 1123.9a3.5 3.5 0 1 0 7 0a3.5 3.5 0 1 0 -7 0M495.7 1122.9a3.5 3.5 0 1 0 7 0a3.5 3.5 0 1 0 -7 0M499.4 1122.9a3.5 3.5 0 1 0 7 0a3.5 3.5 0 1 0 -7 0M503.1 1123.8a3.5 3.5 0 1 0 7 0a3.5 3.5 0 1 0 -7 0M506.6 1123.2a3.5 3.5 0 1 0 7 0a3.5 3.5 0 1 0 -7 0M510.0 1123.2a3.5 3.5 0 1 0 7 0a3.5 3.5 0 1 0 -7 0M513.6 1122.8a3.5 3.5 0 1 0 7 0a3.5 3.5 0 1 0 -7 0M517.2 1122.7a3.5 3.5 0 1 0 7 0a3.5 3.5 0 1 0 -7 0M520.7 1123.0a3.5 3.5 0 1 0 7 0a3.5 3.5 0 1 0 -7 0M524.3 1123.5a3.5 3.5 0 1 0 7 0a3.5 3.5 0 1 0 -7 0M527.7 1123.1a3.5 3.5 0 1 0 7 0a3.5 3.5 0 1 0 -7 0M531.4 1123.1a3.5 3.5 0 1 0 7 0a3.5 3.5 0 1 0 -7 0M535.2 1122.6a3.5 3.5 0 1 0 7 0a3.5 3.5 0 1 0 -7 0M538.4 1123.0a3.5 3.5 0 1 0 7 0a3.5 3.5 0 1 0 -7 0M542.1 1119.4a3.5 3.5 0 1 0 7 0a3.5 3.5 0 1 0 -7 0M545.7 1112.0a3.5 3.5 0 1 0 7 0a3.5 3.5 0 1 0 -7 0M549.4 1096.6a3.5 3.5 0 1 0 7 0a3.5 3.5 0 1 0 -7 0M552.7 1082.2a3.5 3.5 0 1 0 7 0a3.5 3.5 0 1 0 -7 0M556.3 1066.1a3.5 3.5 0 1 0 7 0a3.5 3.5 0 1 0 -7 0M559.8 1040.3a3.5 3.5 0 1 0 7 0a3.5 3.5 0 1 0 -7 0M563.4 1020.4a3.5 3.5 0 1 0 7 0a3.5 3.5 0 1 0 -7 0M567.0 993.7a3.5 3.5 0 1 0 7 0a3.5 3.5 0 1 0 -7 0M570.8 967.5a3.5 3.5 0 1 0 7 0a3.5 3.5 0 1 0 -7 0M574.3 947.4a3.5 3.5 0 1 0 7 0a3.5 3.5 0 1 0 -7 0M577.9 910.7a3.5 3.5 0 1 0 7 0a3.5 3.5 0 1 0 -7 0M581.1 896.8a3.5 3.5 0 1 0 7 0a3.5 3.5 0 1 0 -7 0M584.7 867.3a3.5 3.5 0 1 0 7 0a3.5 3.5 0 1 0 -7 0M588.5 846.4a3.5 3.5 0 1 0 7 0a3.5 3.5 0 1 0 -7 0M592.1 820.5a3.5 3.5 0 1 0 7 0a3.5 3.5 0 1 0 -7 0M595.5 805.9a3.5 3.5 0 1 0 7 0a3.5 3.5 0 1 0 -7 0M599.1 780.8a3.5 3.5 0 1 0 7 0a3.5 3.5 0 1 0 -7 0M602.4 759.3a3.5 3.5 0 1 0 7 0a3.5 3.5 0 1 0 -7 0M606.2 740.8a3.5 3.5 0 1 0 7 0a3.5 3.5 0 1 0 -7 0M610.0 723.3a3.5 3.5 0 1 0 7 0a3.5 3.5 0 1 0 -7 0M613.5 710.8a3.5 3.5 0 1 0 7 0a3.5 3.5 0 1 0 -7 0M617.0 698.7a3.5 3.5 0 1 0 7 0a3.5 3.5 0 1 0 -7 0M620.7 689.7a3.5 3.5 0 1 0 7 0a3.5 3.5 0 1 0 -7 0M623.9 683.4a3.5 3.5 0 1 0 7 0a3.5 3.5 0 1 0 -7 0M627.4 680.1a3.5 3.5 0 1 0 7 0a3.5 3.5 0 1 0 -7 0M631.0 679.8a3.5 3.5 0 1 0 7 0a3.5 3.5 0 1 0 -7 0M634.7 679.9a3.5 3.5 0 1 0 7 0a3.5 3.5 0 1 0 -7 0M638.3 681.0a3.5 3.5 0 1 0 7 0a3.5 3.5 0 1 0 -7 0M642.0 680.4a3.5 3.5 0 1 0 7 0a3.5 3.5 0 1 0 -7 0M645.5 681.8a3.5 3.5 0 1 0 7 0a3.5 3.5 0 1 0 -7 0M649.0 681.6a3.5 3.5 0 1 0 7 0a3.5 3.5 0 1 0 -7 0M652.6 681.2a3.5 3.5 0 1 0 7 0a3.5 3.5 0 1 0 -7 0M656.0 682.6a3.5 3.5 0 1 0 7 0a3.5 3.5 0 1 0 -7 0M659.6 682.9a3.5 3.5 0 1 0 7 0a3.5 3.5 0 1 0 -7 0M663.0 682.8a3.5 3.5 0 1 0 7 0a3.5 3.5 0 1 0 -7 0M666.9 683.7a3.5 3.5 0 1 0 7 0a3.5 3.5 0 1 0 -7 0M670.2 684.5a3.5 3.5 0 1 0 7 0a3.5 3.5 0 1 0 -7 0M674.0 684.4a3.5 3.5 0 1 0 7 0a3.5 3.5 0 1 0 -7 0M677.5 684.7a3.5 3.5 0 1 0 7 0a3.5 3.5 0 1 0 -7 0M680.9 685.0a3.5 3.5 0 1 0 7 0a3.5 3.5 0 1 0 -7 0M684.4 686.1a3.5 3.5 0 1 0 7 0a3.5 3.5 0 1 0 -7 0M688.0 685.4a3.5 3.5 0 1 0 7 0a3.5 3.5 0 1 0 -7 0M691.7 685.8a3.5 3.5 0 1 0 7 0a3.5 3.5 0 1 0 -7 0M695.3 686.9a3.5 3.5 0 1 0 7 0a3.5 3.5 0 1 0 -7 0M698.6 687.2a3.5 3.5 0 1 0 7 0a3.5 3.5 0 1 0 -7 0M702.2 688.1a3.5 3.5 0 1 0 7 0a3.5 3.5 0 1 0 -7 0M705.9 687.8a3.5 3.5 0 1 0 7 0a3.5 3.5 0 1 0 -7 0M709.5 689.3a3.5 3.5 0 1 0 7 0a3.5 3.5 0 1 0 -7 0M713.0 689.3a3.5 3.5 0 1 0 7 0a3.5 3.5 0 1 0 -7 0M716.5 690.4a3.5 3.5 0 1 0 7 0a3.5 3.5 0 1 0 -7 0M720.2 691.0a3.5 3.5 0 1 0 7 0a3.5 3.5 0 1 0 -7 0M723.5 691.0a3.5 3.5 0 1 0 7 0a3.5 3.5 0 1 0 -7 0M727.2 691.3a3.5 3.5 0 1 0 7 0a3.5 3.5 0 1 0 -7 0M730.8 692.5a3.5 3.5 0 1 0 7 0a3.5 3.5 0 1 0 -7 0M734.6 692.9a3.5 3.5 0 1 0 7 0a3.5 3.5 0 1 0 -7 0M738.0 692.4a3.5 3.5 0 1 0 7 0a3.5 3.5 0 1 0 -7 0M741.7 693.0a3.5 3.5 0 1 0 7 0a3.5 3.5 0 1 0 -7 0M745.1 693.0a3.5 3.5 0 1 0 7 0a3.5 3.5 0 1 0 -7 0M748.5 692.7a3.5 3.5 0 1 0 7 0a3.5 3.5 0 1 0 -7 0M752.1 693.0a3.5 3.5 0 1 0 7 0a3.5 3.5 0 1 0 -7 0M755.9 693.9a3.5 3.5 0 1 0 7 0a3.5 3.5 0 1 0 -7 0M759.4 692.8a3.5 3.5 0 1 0 7 0a3.5 3.5 0 1 0 -7 0M762.8 694.0a3.5 3.5 0 1 0 7 0a3.5 3.5 0 1 0 -7 0M766.2 693.8a3.5 3.5 0 1 0 7 0a3.5 3.5 0 1 0 -7 0M770.0 694.6a3.5 3.5 0 1 0 7 0a3.5 3.5 0 1 0 -7 0M773.6 694.5a3.5 3.5 0 1 0 7 0a3.5 3.5 0 1 0 -7 0M777.1 695.5a3.5 3.5 0 1 0 7 0a3.5 3.5 0 1 0 -7 0M780.6 694.1a3.5 3.5 0 1 0 7 0a3.5 3.5 0 1 0 -7 0M784.3 694.5a3.5 3.5 0 1 0 7 0a3.5 3.5 0 1 0 -7 0M788.0 695.7a3.5 3.5 0 1 0 7 0a3.5 3.5 0 1 0 -7 0M791.2 696.0a3.5 3.5 0 1 0 7 0a3.5 3.5 0 1 0 -7 0M794.7 696.3a3.5 3.5 0 1 0 7 0a3.5 3.5 0 1 0 -7 0M798.4 695.2a3.5 3.5 0 1 0 7 0a3.5 3.5 0 1 0 -7 0M802.0 696.1a3.5 3.5 0 1 0 7 0a3.5 3.5 0 1 0 -7 0M805.7 696.1a3.5 3.5 0 1 0 7 0a3.5 3.5 0 1 0 -7 0M809.0 696.4a3.5 3.5 0 1 0 7 0a3.5 3.5 0 1 0 -7 0M812.8 696.5a3.5 3.5 0 1 0 7 0a3.5 3.5 0 1 0 -7 0M816.4 697.1a3.5 3.5 0 1 0 7 0a3.5 3.5 0 1 0 -7 0M819.8 696.8a3.5 3.5 0 1 0 7 0a3.5 3.5 0 1 0 -7 0M823.3 697.6a3.5 3.5 0 1 0 7 0a3.5 3.5 0 1 0 -7 0M827.2 697.1a3.5 3.5 0 1 0 7 0a3.5 3.5 0 1 0 -7 0M830.4 697.2a3.5 3.5 0 1 0 7 0a3.5 3.5 0 1 0 -7 0M834.2 697.3a3.5 3.5 0 1 0 7 0a3.5 3.5 0 1 0 -7 0M837.5 697.7a3.5 3.5 0 1 0 7 0a3.5 3.5 0 1 0 -7 0M841.1 698.2a3.5 3.5 0 1 0 7 0a3.5 3.5 0 1 0 -7 0M844.9 697.9a3.5 3.5 0 1 0 7 0a3.5 3.5 0 1 0 -7 0M848.2 698.4a3.5 3.5 0 1 0 7 0a3.5 3.5 0 1 0 -7 0M852.1 697.6a3.5 3.5 0 1 0 7 0a3.5 3.5 0 1 0 -7 0M855.4 698.2a3.5 3.5 0 1 0 7 0a3.5 3.5 0 1 0 -7 0M858.9 698.7a3.5 3.5 0 1 0 7 0a3.5 3.5 0 1 0 -7 0M862.4 699.0a3.5 3.5 0 1 0 7 0a3.5 3.5 0 1 0 -7 0M866.1 699.3a3.5 3.5 0 1 0 7 0a3.5 3.5 0 1 0 -7 0M869.8 699.6a3.5 3.5 0 1 0 7 0a3.5 3.5 0 1 0 -7 0M873.4 699.5a3.5 3.5 0 1 0 7 0a3.5 3.5 0 1 0 -7 0M876.7 699.4a3.5 3.5 0 1 0 7 0a3.5 3.5 0 1 0 -7 0M880.3 699.5a3.5 3.5 0 1 0 7 0a3.5 3.5 0 1 0 -7 0M883.8 699.6a3.5 3.5 0 1 0 7 0a3.5 3.5 0 1 0 -7 0M887.7 699.1a3.5 3.5 0 1 0 7 0a3.5 3.5 0 1 0 -7 0M890.9 700.5a3.5 3.5 0 1 0 7 0a3.5 3.5 0 1 0 -7 0" stroke="#2c80c0" stroke-width="1.3" fill="none" clip-path="url(#clipll)"/><path d="M463.7 1124.6a3.5 3.5 0 1 0 7 0a3.5 3.5 0 1 0 -7 0M467.5 1124.4a3.5 3.5 0 1 0 7 0a3.5 3.5 0 1 0 -7 0M471.0 1124.5a3.5 3.5 0 1 0 7 0a3.5 3.5 0 1 0 -7 0M474.7 1125.5a3.5 3.5 0 1 0 7 0a3.5 3.5 0 1 0 -7 0M477.9 1123.8a3.5 3.5 0 1 0 7 0a3.5 3.5 0 1 0 -7 0M481.6 1123.9a3.5 3.5 0 1 0 7 0a3.5 3.5 0 1 0 -7 0M485.3 1125.2a3.5 3.5 0 1 0 7 0a3.5 3.5 0 1 0 -7 0M488.9 1123.3a3.5 3.5 0 1 0 7 0a3.5 3.5 0 1 0 -7 0M492.5 1124.6a3.5 3.5 0 1 0 7 0a3.5 3.5 0 1 0 -7 0M495.6 1124.7a3.5 3.5 0 1 0 7 0a3.5 3.5 0 1 0 -7 0M499.3 1124.3a3.5 3.5 0 1 0 7 0a3.5 3.5 0 1 0 -7 0M502.8 1123.7a3.5 3.5 0 1 0 7 0a3.5 3.5 0 1 0 -7 0M506.4 1124.9a3.5 3.5 0 1 0 7 0a3.5 3.5 0 1 0 -7 0M510.3 1123.8a3.5 3.5 0 1 0 7 0a3.5 3.5 0 1 0 -7 0M513.7 1124.4a3.5 3.5 0 1 0 7 0a3.5 3.5 0 1 0 -7 0M517.4 1125.0a3.5 3.5 0 1 0 7 0a3.5 3.5 0 1 0 -7 0M520.7 1124.2a3.5 3.5 0 1 0 7 0a3.5 3.5 0 1 0 -7 0M524.5 1124.7a3.5 3.5 0 1 0 7 0a3.5 3.5 0 1 0 -7 0M527.9 1124.3a3.5 3.5 0 1 0 7 0a3.5 3.5 0 1 0 -7 0M531.3 1124.1a3.5 3.5 0 1 0 7 0a3.5 3.5 0 1 0 -7 0M535.1 1124.6a3.5 3.5 0 1 0 7 0a3.5 3.5 0 1 0 -7 0M538.8 1125.4a3.5 3.5 0 1 0 7 0a3.5 3.5 0 1 0 -7 0M542.0 1123.5a3.5 3.5 0 1 0 7 0a3.5 3.5 0 1 0 -7 0M545.7 1123.5a3.5 3.5 0 1 0 7 0a3.5 3.5 0 1 0 -7 0M549.3 1123.6a3.5 3.5 0 1 0 7 0a3.5 3.5 0 1 0 -7 0M552.7 1124.4a3.5 3.5 0 1 0 7 0a3.5 3.5 0 1 0 -7 0M556.3 1118.2a3.5 3.5 0 1 0 7 0a3.5 3.5 0 1 0 -7 0M559.8 1118.2a3.5 3.5 0 1 0 7 0a3.5 3.5 0 1 0 -7 0M563.4 1119.6a3.5 3.5 0 1 0 7 0a3.5 3.5 0 1 0 -7 0M566.9 1118.8a3.5 3.5 0 1 0 7 0a3.5 3.5 0 1 0 -7 0M570.7 1118.6a3.5 3.5 0 1 0 7 0a3.5 3.5 0 1 0 -7 0M574.2 1119.2a3.5 3.5 0 1 0 7 0a3.5 3.5 0 1 0 -7 0M577.6 1118.6a3.5 3.5 0 1 0 7 0a3.5 3.5 0 1 0 -7 0M581.1 1118.4a3.5 3.5 0 1 0 7 0a3.5 3.5 0 1 0 -7 0M584.8 1118.0a3.5 3.5 0 1 0 7 0a3.5 3.5 0 1 0 -7 0M588.5 1114.7a3.5 3.5 0 1 0 7 0a3.5 3.5 0 1 0 -7 0M591.8 1098.9a3.5 3.5 0 1 0 7 0a3.5 3.5 0 1 0 -7 0M595.5 1087.4a3.5 3.5 0 1 0 7 0a3.5 3.5 0 1 0 -7 0M599.0 1075.5a3.5 3.5 0 1 0 7 0a3.5 3.5 0 1 0 -7 0M602.8 1056.1a3.5 3.5 0 1 0 7 0a3.5 3.5 0 1 0 -7 0M606.2 1050.4a3.5 3.5 0 1 0 7 0a3.5 3.5 0 1 0 -7 0M609.6 1019.0a3.5 3.5 0 1 0 7 0a3.5 3.5 0 1 0 -7 0M613.2 998.7a3.5 3.5 0 1 0 7 0a3.5 3.5 0 1 0 -7 0M616.9 965.5a3.5 3.5 0 1 0 7 0a3.5 3.5 0 1 0 -7 0M620.5 949.1a3.5 3.5 0 1 0 7 0a3.5 3.5 0 1 0 -7 0M624.1 930.0a3.5 3.5 0 1 0 7 0a3.5 3.5 0 1 0 -7 0M627.4 898.9a3.5 3.5 0 1 0 7 0a3.5 3.5 0 1 0 -7 0M631.0 879.0a3.5 3.5 0 1 0 7 0a3.5 3.5 0 1 0 -7 0M634.8 859.8a3.5 3.5 0 1 0 7 0a3.5 3.5 0 1 0 -7 0M638.2 835.7a3.5 3.5 0 1 0 7 0a3.5 3.5 0 1 0 -7 0M641.7 805.7a3.5 3.5 0 1 0 7 0a3.5 3.5 0 1 0 -7 0M645.3 791.3a3.5 3.5 0 1 0 7 0a3.5 3.5 0 1 0 -7 0M649.1 770.2a3.5 3.5 0 1 0 7 0a3.5 3.5 0 1 0 -7 0M652.4 750.1a3.5 3.5 0 1 0 7 0a3.5 3.5 0 1 0 -7 0M656.1 732.8a3.5 3.5 0 1 0 7 0a3.5 3.5 0 1 0 -7 0M659.6 715.5a3.5 3.5 0 1 0 7 0a3.5 3.5 0 1 0 -7 0M663.1 701.1a3.5 3.5 0 1 0 7 0a3.5 3.5 0 1 0 -7 0M666.9 688.8a3.5 3.5 0 1 0 7 0a3.5 3.5 0 1 0 -7 0M670.5 679.5a3.5 3.5 0 1 0 7 0a3.5 3.5 0 1 0 -7 0M673.8 671.7a3.5 3.5 0 1 0 7 0a3.5 3.5 0 1 0 -7 0M677.3 667.0a3.5 3.5 0 1 0 7 0a3.5 3.5 0 1 0 -7 0M681.1 665.4a3.5 3.5 0 1 0 7 0a3.5 3.5 0 1 0 -7 0M684.4 665.4a3.5 3.5 0 1 0 7 0a3.5 3.5 0 1 0 -7 0M687.9 666.7a3.5 3.5 0 1 0 7 0a3.5 3.5 0 1 0 -7 0M691.8 665.7a3.5 3.5 0 1 0 7 0a3.5 3.5 0 1 0 -7 0M695.2 665.7a3.5 3.5 0 1 0 7 0a3.5 3.5 0 1 0 -7 0M698.9 666.5a3.5 3.5 0 1 0 7 0a3.5 3.5 0 1 0 -7 0M702.3 666.7a3.5 3.5 0 1 0 7 0a3.5 3.5 0 1 0 -7 0M706.1 666.4a3.5 3.5 0 1 0 7 0a3.5 3.5 0 1 0 -7 0M709.5 668.1a3.5 3.5 0 1 0 7 0a3.5 3.5 0 1 0 -7 0M712.9 667.4a3.5 3.5 0 1 0 7 0a3.5 3.5 0 1 0 -7 0M716.4 667.3a3.5 3.5 0 1 0 7 0a3.5 3.5 0 1 0 -7 0M720.2 667.2a3.5 3.5 0 1 0 7 0a3.5 3.5 0 1 0 -7 0M723.8 668.2a3.5 3.5 0 1 0 7 0a3.5 3.5 0 1 0 -7 0M727.4 669.2a3.5 3.5 0 1 0 7 0a3.5 3.5 0 1 0 -7 0M730.7 668.5a3.5 3.5 0 1 0 7 0a3.5 3.5 0 1 0 -7 0M734.4 669.4a3.5 3.5 0 1 0 7 0a3.5 3.5 0 1 0 -7 0M737.9 669.2a3.5 3.5 0 1 0 7 0a3.5 3.5 0 1 0 -7 0M741.5 668.9a3.5 3.5 0 1 0 7 0a3.5 3.5 0 1 0 -7 0M744.9 669.9a3.5 3.5 0 1 0 7 0a3.5 3.5 0 1 0 -7 0M748.5 669.1a3.5 3.5 0 1 0 7 0a3.5 3.5 0 1 0 -7 0M752.2 669.6a3.5 3.5 0 1 0 7 0a3.5 3.5 0 1 0 -7 0M755.9 669.9a3.5 3.5 0 1 0 7 0a3.5 3.5 0 1 0 -7 0M759.1 670.3a3.5 3.5 0 1 0 7 0a3.5 3.5 0 1 0 -7 0M762.9 670.8a3.5 3.5 0 1 0 7 0a3.5 3.5 0 1 0 -7 0M766.6 670.6a3.5 3.5 0 1 0 7 0a3.5 3.5 0 1 0 -7 0M770.2 670.9a3.5 3.5 0 1 0 7 0a3.5 3.5 0 1 0 -7 0M773.4 671.5a3.5 3.5 0 1 0 7 0a3.5 3.5 0 1 0 -7 0M777.0 671.5a3.5 3.5 0 1 0 7 0a3.5 3.5 0 1 0 -7 0M780.9 670.6a3.5 3.5 0 1 0 7 0a3.5 3.5 0 1 0 -7 0M784.4 671.9a3.5 3.5 0 1 0 7 0a3.5 3.5 0 1 0 -7 0M787.8 671.6a3.5 3.5 0 1 0 7 0a3.5 3.5 0 1 0 -7 0M791.2 672.2a3.5 3.5 0 1 0 7 0a3.5 3.5 0 1 0 -7 0M795.1 672.2a3.5 3.5 0 1 0 7 0a3.5 3.5 0 1 0 -7 0M798.4 672.5a3.5 3.5 0 1 0 7 0a3.5 3.5 0 1 0 -7 0M802.2 673.5a3.5 3.5 0 1 0 7 0a3.5 3.5 0 1 0 -7 0M805.6 673.0a3.5 3.5 0 1 0 7 0a3.5 3.5 0 1 0 -7 0M809.3 673.5a3.5 3.5 0 1 0 7 0a3.5 3.5 0 1 0 -7 0M812.6 673.3a3.5 3.5 0 1 0 7 0a3.5 3.5 0 1 0 -7 0M816.4 674.1a3.5 3.5 0 1 0 7 0a3.5 3.5 0 1 0 -7 0M819.7 673.5a3.5 3.5 0 1 0 7 0a3.5 3.5 0 1 0 -7 0M823.4 674.4a3.5 3.5 0 1 0 7 0a3.5 3.5 0 1 0 -7 0M827.1 674.9a3.5 3.5 0 1 0 7 0a3.5 3.5 0 1 0 -7 0M830.7 674.1a3.5 3.5 0 1 0 7 0a3.5 3.5 0 1 0 -7 0M833.9 675.2a3.5 3.5 0 1 0 7 0a3.5 3.5 0 1 0 -7 0M837.5 674.3a3.5 3.5 0 1 0 7 0a3.5 3.5 0 1 0 -7 0M841.2 674.5a3.5 3.5 0 1 0 7 0a3.5 3.5 0 1 0 -7 0M844.8 675.4a3.5 3.5 0 1 0 7 0a3.5 3.5 0 1 0 -7 0M848.3 675.0a3.5 3.5 0 1 0 7 0a3.5 3.5 0 1 0 -7 0M851.7 676.2a3.5 3.5 0 1 0 7 0a3.5 3.5 0 1 0 -7 0M855.3 675.4a3.5 3.5 0 1 0 7 0a3.5 3.5 0 1 0 -7 0M859.1 676.0a3.5 3.5 0 1 0 7 0a3.5 3.5 0 1 0 -7 0M862.7 676.0a3.5 3.5 0 1 0 7 0a3.5 3.5 0 1 0 -7 0M865.9 676.5a3.5 3.5 0 1 0 7 0a3.5 3.5 0 1 0 -7 0M869.7 676.5a3.5 3.5 0 1 0 7 0a3.5 3.5 0 1 0 -7 0M873.4 676.5a3.5 3.5 0 1 0 7 0a3.5 3.5 0 1 0 -7 0M876.6 677.5a3.5 3.5 0 1 0 7 0a3.5 3.5 0 1 0 -7 0M880.5 677.6a3.5 3.5 0 1 0 7 0a3.5 3.5 0 1 0 -7 0M883.8 677.2a3.5 3.5 0 1 0 7 0a3.5 3.5 0 1 0 -7 0M887.5 677.3a3.5 3.5 0 1 0 7 0a3.5 3.5 0 1 0 -7 0M891.1 678.0a3.5 3.5 0 1 0 7 0a3.5 3.5 0 1 0 -7 0" stroke="#1f2f78" stroke-width="1.3" fill="none" clip-path="url(#clipll)"/><path d="M463.6 1121.5a3.5 3.5 0 1 0 7 0a3.5 3.5 0 1 0 -7 0M467.4 1121.5a3.5 3.5 0 1 0 7 0a3.5 3.5 0 1 0 -7 0M471.1 1121.8a3.5 3.5 0 1 0 7 0a3.5 3.5 0 1 0 -7 0M474.6 1120.8a3.5 3.5 0 1 0 7 0a3.5 3.5 0 1 0 -7 0M478.0 1121.9a3.5 3.5 0 1 0 7 0a3.5 3.5 0 1 0 -7 0M481.5 1120.8a3.5 3.5 0 1 0 7 0a3.5 3.5 0 1 0 -7 0M485.0 1121.7a3.5 3.5 0 1 0 7 0a3.5 3.5 0 1 0 -7 0M488.8 1121.0a3.5 3.5 0 1 0 7 0a3.5 3.5 0 1 0 -7 0M492.3 1120.4a3.5 3.5 0 1 0 7 0a3.5 3.5 0 1 0 -7 0M495.8 1121.0a3.5 3.5 0 1 0 7 0a3.5 3.5 0 1 0 -7 0M499.5 1121.6a3.5 3.5 0 1 0 7 0a3.5 3.5 0 1 0 -7 0M502.9 1121.1a3.5 3.5 0 1 0 7 0a3.5 3.5 0 1 0 -7 0M506.7 1121.1a3.5 3.5 0 1 0 7 0a3.5 3.5 0 1 0 -7 0M510.2 1122.1a3.5 3.5 0 1 0 7 0a3.5 3.5 0 1 0 -7 0M513.5 1121.5a3.5 3.5 0 1 0 7 0a3.5 3.5 0 1 0 -7 0M517.4 1121.1a3.5 3.5 0 1 0 7 0a3.5 3.5 0 1 0 -7 0M520.6 1121.4a3.5 3.5 0 1 0 7 0a3.5 3.5 0 1 0 -7 0M524.3 1121.1a3.5 3.5 0 1 0 7 0a3.5 3.5 0 1 0 -7 0M527.8 1120.7a3.5 3.5 0 1 0 7 0a3.5 3.5 0 1 0 -7 0M531.3 1120.7a3.5 3.5 0 1 0 7 0a3.5 3.5 0 1 0 -7 0M534.8 1120.7a3.5 3.5 0 1 0 7 0a3.5 3.5 0 1 0 -7 0M538.7 1120.8a3.5 3.5 0 1 0 7 0a3.5 3.5 0 1 0 -7 0M541.9 1121.3a3.5 3.5 0 1 0 7 0a3.5 3.5 0 1 0 -7 0M545.7 1121.2a3.5 3.5 0 1 0 7 0a3.5 3.5 0 1 0 -7 0M549.4 1121.3a3.5 3.5 0 1 0 7 0a3.5 3.5 0 1 0 -7 0M552.7 1121.3a3.5 3.5 0 1 0 7 0a3.5 3.5 0 1 0 -7 0M556.2 1129.7a3.5 3.5 0 1 0 7 0a3.5 3.5 0 1 0 -7 0M560.0 1130.5a3.5 3.5 0 1 0 7 0a3.5 3.5 0 1 0 -7 0M563.5 1129.7a3.5 3.5 0 1 0 7 0a3.5 3.5 0 1 0 -7 0M567.1 1129.6a3.5 3.5 0 1 0 7 0a3.5 3.5 0 1 0 -7 0M570.7 1130.1a3.5 3.5 0 1 0 7 0a3.5 3.5 0 1 0 -7 0M574.0 1129.6a3.5 3.5 0 1 0 7 0a3.5 3.5 0 1 0 -7 0M577.7 1129.3a3.5 3.5 0 1 0 7 0a3.5 3.5 0 1 0 -7 0M581.2 1129.6a3.5 3.5 0 1 0 7 0a3.5 3.5 0 1 0 -7 0M584.7 1128.4a3.5 3.5 0 1 0 7 0a3.5 3.5 0 1 0 -7 0M588.6 1131.0a3.5 3.5 0 1 0 7 0a3.5 3.5 0 1 0 -7 0M592.1 1129.7a3.5 3.5 0 1 0 7 0a3.5 3.5 0 1 0 -7 0M595.6 1130.6a3.5 3.5 0 1 0 7 0a3.5 3.5 0 1 0 -7 0M598.9 1129.0a3.5 3.5 0 1 0 7 0a3.5 3.5 0 1 0 -7 0M602.8 1128.1a3.5 3.5 0 1 0 7 0a3.5 3.5 0 1 0 -7 0M606.3 1131.0a3.5 3.5 0 1 0 7 0a3.5 3.5 0 1 0 -7 0M609.8 1129.5a3.5 3.5 0 1 0 7 0a3.5 3.5 0 1 0 -7 0M613.4 1129.3a3.5 3.5 0 1 0 7 0a3.5 3.5 0 1 0 -7 0M616.9 1129.7a3.5 3.5 0 1 0 7 0a3.5 3.5 0 1 0 -7 0M620.3 1129.2a3.5 3.5 0 1 0 7 0a3.5 3.5 0 1 0 -7 0M623.8 1130.8a3.5 3.5 0 1 0 7 0a3.5 3.5 0 1 0 -7 0M627.5 1129.6a3.5 3.5 0 1 0 7 0a3.5 3.5 0 1 0 -7 0M630.9 1125.9a3.5 3.5 0 1 0 7 0a3.5 3.5 0 1 0 -7 0M634.6 1118.5a3.5 3.5 0 1 0 7 0a3.5 3.5 0 1 0 -7 0M638.4 1109.2a3.5 3.5 0 1 0 7 0a3.5 3.5 0 1 0 -7 0M641.9 1090.3a3.5 3.5 0 1 0 7 0a3.5 3.5 0 1 0 -7 0M645.5 1078.8a3.5 3.5 0 1 0 7 0a3.5 3.5 0 1 0 -7 0M649.0 1056.2a3.5 3.5 0 1 0 7 0a3.5 3.5 0 1 0 -7 0M652.4 1040.1a3.5 3.5 0 1 0 7 0a3.5 3.5 0 1 0 -7 0M656.1 1028.1a3.5 3.5 0 1 0 7 0a3.5 3.5 0 1 0 -7 0M659.6 992.0a3.5 3.5 0 1 0 7 0a3.5 3.5 0 1 0 -7 0M663.3 966.8a3.5 3.5 0 1 0 7 0a3.5 3.5 0 1 0 -7 0M666.8 939.7a3.5 3.5 0 1 0 7 0a3.5 3.5 0 1 0 -7 0M670.2 922.0a3.5 3.5 0 1 0 7 0a3.5 3.5 0 1 0 -7 0M673.9 893.4a3.5 3.5 0 1 0 7 0a3.5 3.5 0 1 0 -7 0M677.6 866.3a3.5 3.5 0 1 0 7 0a3.5 3.5 0 1 0 -7 0M680.9 843.5a3.5 3.5 0 1 0 7 0a3.5 3.5 0 1 0 -7 0M684.7 816.9a3.5 3.5 0 1 0 7 0a3.5 3.5 0 1 0 -7 0M687.9 792.8a3.5 3.5 0 1 0 7 0a3.5 3.5 0 1 0 -7 0M691.6 776.9a3.5 3.5 0 1 0 7 0a3.5 3.5 0 1 0 -7 0M695.1 757.6a3.5 3.5 0 1 0 7 0a3.5 3.5 0 1 0 -7 0M698.9 734.7a3.5 3.5 0 1 0 7 0a3.5 3.5 0 1 0 -7 0M702.5 717.1a3.5 3.5 0 1 0 7 0a3.5 3.5 0 1 0 -7 0M706.0 702.7a3.5 3.5 0 1 0 7 0a3.5 3.5 0 1 0 -7 0M709.4 689.9a3.5 3.5 0 1 0 7 0a3.5 3.5 0 1 0 -7 0M713.2 679.9a3.5 3.5 0 1 0 7 0a3.5 3.5 0 1 0 -7 0M716.5 672.0a3.5 3.5 0 1 0 7 0a3.5 3.5 0 1 0 -7 0M720.0 667.1a3.5 3.5 0 1 0 7 0a3.5 3.5 0 1 0 -7 0M723.9 665.4a3.5 3.5 0 1 0 7 0a3.5 3.5 0 1 0 -7 0M727.3 666.4a3.5 3.5 0 1 0 7 0a3.5 3.5 0 1 0 -7 0M730.9 666.3a3.5 3.5 0 1 0 7 0a3.5 3.5 0 1 0 -7 0M734.5 665.0a3.5 3.5 0 1 0 7 0a3.5 3.5 0 1 0 -7 0M738.2 665.5a3.5 3.5 0 1 0 7 0a3.5 3.5 0 1 0 -7 0M741.5 666.8a3.5 3.5 0 1 0 7 0a3.5 3.5 0 1 0 -7 0M745.2 667.1a3.5 3.5 0 1 0 7 0a3.5 3.5 0 1 0 -7 0M748.7 666.9a3.5 3.5 0 1 0 7 0a3.5 3.5 0 1 0 -7 0M752.3 667.5a3.5 3.5 0 1 0 7 0a3.5 3.5 0 1 0 -7 0M755.7 666.9a3.5 3.5 0 1 0 7 0a3.5 3.5 0 1 0 -7 0M759.4 667.7a3.5 3.5 0 1 0 7 0a3.5 3.5 0 1 0 -7 0M762.9 668.4a3.5 3.5 0 1 0 7 0a3.5 3.5 0 1 0 -7 0M766.4 667.5a3.5 3.5 0 1 0 7 0a3.5 3.5 0 1 0 -7 0M769.9 668.6a3.5 3.5 0 1 0 7 0a3.5 3.5 0 1 0 -7 0M773.6 668.5a3.5 3.5 0 1 0 7 0a3.5 3.5 0 1 0 -7 0M776.9 668.8a3.5 3.5 0 1 0 7 0a3.5 3.5 0 1 0 -7 0M780.9 669.1a3.5 3.5 0 1 0 7 0a3.5 3.5 0 1 0 -7 0M784.1 669.1a3.5 3.5 0 1 0 7 0a3.5 3.5 0 1 0 -7 0M787.6 669.8a3.5 3.5 0 1 0 7 0a3.5 3.5 0 1 0 -7 0M791.2 670.5a3.5 3.5 0 1 0 7 0a3.5 3.5 0 1 0 -7 0M795.1 670.9a3.5 3.5 0 1 0 7 0a3.5 3.5 0 1 0 -7 0M798.4 670.7a3.5 3.5 0 1 0 7 0a3.5 3.5 0 1 0 -7 0M801.9 670.7a3.5 3.5 0 1 0 7 0a3.5 3.5 0 1 0 -7 0M805.4 670.6a3.5 3.5 0 1 0 7 0a3.5 3.5 0 1 0 -7 0M809.0 670.8a3.5 3.5 0 1 0 7 0a3.5 3.5 0 1 0 -7 0M812.8 670.8a3.5 3.5 0 1 0 7 0a3.5 3.5 0 1 0 -7 0M816.3 671.2a3.5 3.5 0 1 0 7 0a3.5 3.5 0 1 0 -7 0M819.9 671.8a3.5 3.5 0 1 0 7 0a3.5 3.5 0 1 0 -7 0M823.5 672.0a3.5 3.5 0 1 0 7 0a3.5 3.5 0 1 0 -7 0M826.8 672.9a3.5 3.5 0 1 0 7 0a3.5 3.5 0 1 0 -7 0M830.6 672.2a3.5 3.5 0 1 0 7 0a3.5 3.5 0 1 0 -7 0M834.0 672.2a3.5 3.5 0 1 0 7 0a3.5 3.5 0 1 0 -7 0M837.8 672.4a3.5 3.5 0 1 0 7 0a3.5 3.5 0 1 0 -7 0M841.3 672.9a3.5 3.5 0 1 0 7 0a3.5 3.5 0 1 0 -7 0M844.9 673.1a3.5 3.5 0 1 0 7 0a3.5 3.5 0 1 0 -7 0M848.1 672.9a3.5 3.5 0 1 0 7 0a3.5 3.5 0 1 0 -7 0M852.0 673.5a3.5 3.5 0 1 0 7 0a3.5 3.5 0 1 0 -7 0M855.6 673.4a3.5 3.5 0 1 0 7 0a3.5 3.5 0 1 0 -7 0M859.2 673.7a3.5 3.5 0 1 0 7 0a3.5 3.5 0 1 0 -7 0M862.4 674.1a3.5 3.5 0 1 0 7 0a3.5 3.5 0 1 0 -7 0M866.0 673.8a3.5 3.5 0 1 0 7 0a3.5 3.5 0 1 0 -7 0M869.5 674.9a3.5 3.5 0 1 0 7 0a3.5 3.5 0 1 0 -7 0M873.0 675.0a3.5 3.5 0 1 0 7 0a3.5 3.5 0 1 0 -7 0M877.0 675.4a3.5 3.5 0 1 0 7 0a3.5 3.5 0 1 0 -7 0M880.5 675.7a3.5 3.5 0 1 0 7 0a3.5 3.5 0 1 0 -7 0M884.0 674.9a3.5 3.5 0 1 0 7 0a3.5 3.5 0 1 0 -7 0M887.6 675.0a3.5 3.5 0 1 0 7 0a3.5 3.5 0 1 0 -7 0M891.1 676.0a3.5 3.5 0 1 0 7 0a3.5 3.5 0 1 0 -7 0" stroke="#5a3fc8" stroke-width="1.3" fill="none" clip-path="url(#clipll)"/><path d="M463.8 1122.7a3.5 3.5 0 1 0 7 0a3.5 3.5 0 1 0 -7 0M467.2 1123.1a3.5 3.5 0 1 0 7 0a3.5 3.5 0 1 0 -7 0M471.0 1122.8a3.5 3.5 0 1 0 7 0a3.5 3.5 0 1 0 -7 0M474.4 1122.3a3.5 3.5 0 1 0 7 0a3.5 3.5 0 1 0 -7 0M478.1 1122.5a3.5 3.5 0 1 0 7 0a3.5 3.5 0 1 0 -7 0M481.8 1122.9a3.5 3.5 0 1 0 7 0a3.5 3.5 0 1 0 -7 0M485.1 1122.6a3.5 3.5 0 1 0 7 0a3.5 3.5 0 1 0 -7 0M488.8 1123.1a3.5 3.5 0 1 0 7 0a3.5 3.5 0 1 0 -7 0M492.4 1123.0a3.5 3.5 0 1 0 7 0a3.5 3.5 0 1 0 -7 0M495.8 1123.0a3.5 3.5 0 1 0 7 0a3.5 3.5 0 1 0 -7 0M499.3 1122.6a3.5 3.5 0 1 0 7 0a3.5 3.5 0 1 0 -7 0M503.1 1123.1a3.5 3.5 0 1 0 7 0a3.5 3.5 0 1 0 -7 0M506.7 1123.5a3.5 3.5 0 1 0 7 0a3.5 3.5 0 1 0 -7 0M510.2 1123.6a3.5 3.5 0 1 0 7 0a3.5 3.5 0 1 0 -7 0M513.7 1121.7a3.5 3.5 0 1 0 7 0a3.5 3.5 0 1 0 -7 0M517.4 1124.1a3.5 3.5 0 1 0 7 0a3.5 3.5 0 1 0 -7 0M520.8 1123.0a3.5 3.5 0 1 0 7 0a3.5 3.5 0 1 0 -7 0M524.4 1123.1a3.5 3.5 0 1 0 7 0a3.5 3.5 0 1 0 -7 0M527.9 1123.1a3.5 3.5 0 1 0 7 0a3.5 3.5 0 1 0 -7 0M531.4 1123.5a3.5 3.5 0 1 0 7 0a3.5 3.5 0 1 0 -7 0M535.1 1122.7a3.5 3.5 0 1 0 7 0a3.5 3.5 0 1 0 -7 0M538.4 1122.9a3.5 3.5 0 1 0 7 0a3.5 3.5 0 1 0 -7 0M542.1 1123.5a3.5 3.5 0 1 0 7 0a3.5 3.5 0 1 0 -7 0M545.8 1123.2a3.5 3.5 0 1 0 7 0a3.5 3.5 0 1 0 -7 0M549.3 1123.7a3.5 3.5 0 1 0 7 0a3.5 3.5 0 1 0 -7 0M552.9 1122.8a3.5 3.5 0 1 0 7 0a3.5 3.5 0 1 0 -7 0M556.3 1117.6a3.5 3.5 0 1 0 7 0a3.5 3.5 0 1 0 -7 0M559.9 1117.8a3.5 3.5 0 1 0 7 0a3.5 3.5 0 1 0 -7 0M563.5 1118.1a3.5 3.5 0 1 0 7 0a3.5 3.5 0 1 0 -7 0M567.1 1118.7a3.5 3.5 0 1 0 7 0a3.5 3.5 0 1 0 -7 0M570.6 1118.6a3.5 3.5 0 1 0 7 0a3.5 3.5 0 1 0 -7 0M574.2 1118.4a3.5 3.5 0 1 0 7 0a3.5 3.5 0 1 0 -7 0M577.9 1117.8a3.5 3.5 0 1 0 7 0a3.5 3.5 0 1 0 -7 0M581.2 1118.6a3.5 3.5 0 1 0 7 0a3.5 3.5 0 1 0 -7 0M584.9 1118.7a3.5 3.5 0 1 0 7 0a3.5 3.5 0 1 0 -7 0M588.5 1119.3a3.5 3.5 0 1 0 7 0a3.5 3.5 0 1 0 -7 0M591.9 1118.6a3.5 3.5 0 1 0 7 0a3.5 3.5 0 1 0 -7 0M595.5 1118.6a3.5 3.5 0 1 0 7 0a3.5 3.5 0 1 0 -7 0M599.3 1119.0a3.5 3.5 0 1 0 7 0a3.5 3.5 0 1 0 -7 0M602.5 1119.2a3.5 3.5 0 1 0 7 0a3.5 3.5 0 1 0 -7 0M606.2 1118.7a3.5 3.5 0 1 0 7 0a3.5 3.5 0 1 0 -7 0M609.6 1118.5a3.5 3.5 0 1 0 7 0a3.5 3.5 0 1 0 -7 0M613.5 1119.0a3.5 3.5 0 1 0 7 0a3.5 3.5 0 1 0 -7 0M617.1 1118.2a3.5 3.5 0 1 0 7 0a3.5 3.5 0 1 0 -7 0M620.5 1118.8a3.5 3.5 0 1 0 7 0a3.5 3.5 0 1 0 -7 0M623.8 1118.5a3.5 3.5 0 1 0 7 0a3.5 3.5 0 1 0 -7 0M627.6 1117.8a3.5 3.5 0 1 0 7 0a3.5 3.5 0 1 0 -7 0M631.2 1118.9a3.5 3.5 0 1 0 7 0a3.5 3.5 0 1 0 -7 0M634.8 1118.7a3.5 3.5 0 1 0 7 0a3.5 3.5 0 1 0 -7 0M638.3 1118.8a3.5 3.5 0 1 0 7 0a3.5 3.5 0 1 0 -7 0M641.9 1118.8a3.5 3.5 0 1 0 7 0a3.5 3.5 0 1 0 -7 0M645.5 1118.5a3.5 3.5 0 1 0 7 0a3.5 3.5 0 1 0 -7 0M649.0 1119.5a3.5 3.5 0 1 0 7 0a3.5 3.5 0 1 0 -7 0M652.5 1118.5a3.5 3.5 0 1 0 7 0a3.5 3.5 0 1 0 -7 0M656.3 1119.4a3.5 3.5 0 1 0 7 0a3.5 3.5 0 1 0 -7 0M659.5 1119.0a3.5 3.5 0 1 0 7 0a3.5 3.5 0 1 0 -7 0M663.3 1118.2a3.5 3.5 0 1 0 7 0a3.5 3.5 0 1 0 -7 0M666.7 1118.7a3.5 3.5 0 1 0 7 0a3.5 3.5 0 1 0 -7 0M670.4 1114.9a3.5 3.5 0 1 0 7 0a3.5 3.5 0 1 0 -7 0M673.7 1106.6a3.5 3.5 0 1 0 7 0a3.5 3.5 0 1 0 -7 0M677.6 1098.3a3.5 3.5 0 1 0 7 0a3.5 3.5 0 1 0 -7 0M680.9 1087.7a3.5 3.5 0 1 0 7 0a3.5 3.5 0 1 0 -7 0M684.4 1076.6a3.5 3.5 0 1 0 7 0a3.5 3.5 0 1 0 -7 0M688.0 1063.2a3.5 3.5 0 1 0 7 0a3.5 3.5 0 1 0 -7 0M691.6 1033.2a3.5 3.5 0 1 0 7 0a3.5 3.5 0 1 0 -7 0M695.0 1034.3a3.5 3.5 0 1 0 7 0a3.5 3.5 0 1 0 -7 0M698.8 1009.5a3.5 3.5 0 1 0 7 0a3.5 3.5 0 1 0 -7 0M702.3 986.7a3.5 3.5 0 1 0 7 0a3.5 3.5 0 1 0 -7 0M706.0 972.0a3.5 3.5 0 1 0 7 0a3.5 3.5 0 1 0 -7 0M709.4 954.4a3.5 3.5 0 1 0 7 0a3.5 3.5 0 1 0 -7 0M712.9 926.0a3.5 3.5 0 1 0 7 0a3.5 3.5 0 1 0 -7 0M716.5 905.7a3.5 3.5 0 1 0 7 0a3.5 3.5 0 1 0 -7 0M720.3 890.8a3.5 3.5 0 1 0 7 0a3.5 3.5 0 1 0 -7 0M723.9 865.1a3.5 3.5 0 1 0 7 0a3.5 3.5 0 1 0 -7 0M727.3 844.4a3.5 3.5 0 1 0 7 0a3.5 3.5 0 1 0 -7 0M730.7 822.2a3.5 3.5 0 1 0 7 0a3.5 3.5 0 1 0 -7 0M734.5 800.3a3.5 3.5 0 1 0 7 0a3.5 3.5 0 1 0 -7 0M737.9 780.5a3.5 3.5 0 1 0 7 0a3.5 3.5 0 1 0 -7 0M741.4 766.0a3.5 3.5 0 1 0 7 0a3.5 3.5 0 1 0 -7 0M744.9 746.5a3.5 3.5 0 1 0 7 0a3.5 3.5 0 1 0 -7 0M748.8 731.0a3.5 3.5 0 1 0 7 0a3.5 3.5 0 1 0 -7 0M752.3 716.9a3.5 3.5 0 1 0 7 0a3.5 3.5 0 1 0 -7 0M755.8 701.7a3.5 3.5 0 1 0 7 0a3.5 3.5 0 1 0 -7 0M759.3 690.7a3.5 3.5 0 1 0 7 0a3.5 3.5 0 1 0 -7 0M762.9 680.6a3.5 3.5 0 1 0 7 0a3.5 3.5 0 1 0 -7 0M766.3 672.9a3.5 3.5 0 1 0 7 0a3.5 3.5 0 1 0 -7 0M770.2 666.6a3.5 3.5 0 1 0 7 0a3.5 3.5 0 1 0 -7 0M773.5 662.9a3.5 3.5 0 1 0 7 0a3.5 3.5 0 1 0 -7 0M777.2 661.7a3.5 3.5 0 1 0 7 0a3.5 3.5 0 1 0 -7 0M780.8 662.1a3.5 3.5 0 1 0 7 0a3.5 3.5 0 1 0 -7 0M784.4 661.5a3.5 3.5 0 1 0 7 0a3.5 3.5 0 1 0 -7 0M787.8 662.2a3.5 3.5 0 1 0 7 0a3.5 3.5 0 1 0 -7 0M791.3 662.8a3.5 3.5 0 1 0 7 0a3.5 3.5 0 1 0 -7 0M794.9 662.7a3.5 3.5 0 1 0 7 0a3.5 3.5 0 1 0 -7 0M798.3 662.8a3.5 3.5 0 1 0 7 0a3.5 3.5 0 1 0 -7 0M802.2 663.6a3.5 3.5 0 1 0 7 0a3.5 3.5 0 1 0 -7 0M805.5 663.1a3.5 3.5 0 1 0 7 0a3.5 3.5 0 1 0 -7 0M809.3 663.6a3.5 3.5 0 1 0 7 0a3.5 3.5 0 1 0 -7 0M812.6 663.7a3.5 3.5 0 1 0 7 0a3.5 3.5 0 1 0 -7 0M816.2 663.8a3.5 3.5 0 1 0 7 0a3.5 3.5 0 1 0 -7 0M819.7 663.4a3.5 3.5 0 1 0 7 0a3.5 3.5 0 1 0 -7 0M823.4 664.7a3.5 3.5 0 1 0 7 0a3.5 3.5 0 1 0 -7 0M826.8 665.1a3.5 3.5 0 1 0 7 0a3.5 3.5 0 1 0 -7 0M830.3 665.0a3.5 3.5 0 1 0 7 0a3.5 3.5 0 1 0 -7 0M834.2 665.5a3.5 3.5 0 1 0 7 0a3.5 3.5 0 1 0 -7 0M837.5 666.6a3.5 3.5 0 1 0 7 0a3.5 3.5 0 1 0 -7 0M841.1 665.0a3.5 3.5 0 1 0 7 0a3.5 3.5 0 1 0 -7 0M844.7 665.9a3.5 3.5 0 1 0 7 0a3.5 3.5 0 1 0 -7 0M848.3 667.0a3.5 3.5 0 1 0 7 0a3.5 3.5 0 1 0 -7 0M851.9 666.8a3.5 3.5 0 1 0 7 0a3.5 3.5 0 1 0 -7 0M855.5 666.7a3.5 3.5 0 1 0 7 0a3.5 3.5 0 1 0 -7 0M859.1 667.2a3.5 3.5 0 1 0 7 0a3.5 3.5 0 1 0 -7 0M862.5 667.4a3.5 3.5 0 1 0 7 0a3.5 3.5 0 1 0 -7 0M866.3 667.4a3.5 3.5 0 1 0 7 0a3.5 3.5 0 1 0 -7 0M869.8 667.3a3.5 3.5 0 1 0 7 0a3.5 3.5 0 1 0 -7 0M873.1 667.5a3.5 3.5 0 1 0 7 0a3.5 3.5 0 1 0 -7 0M876.9 668.1a3.5 3.5 0 1 0 7 0a3.5 3.5 0 1 0 -7 0M880.5 668.3a3.5 3.5 0 1 0 7 0a3.5 3.5 0 1 0 -7 0M884.0 669.3a3.5 3.5 0 1 0 7 0a3.5 3.5 0 1 0 -7 0M887.3 669.5a3.5 3.5 0 1 0 7 0a3.5 3.5 0 1 0 -7 0M891.2 669.1a3.5 3.5 0 1 0 7 0a3.5 3.5 0 1 0 -7 0" stroke="#2a9a9a" stroke-width="1.3" fill="none" clip-path="url(#clipll)"/><path d="M463.8 1146.7a3.5 3.5 0 1 0 7 0a3.5 3.5 0 1 0 -7 0M467.3 1146.7a3.5 3.5 0 1 0 7 0a3.5 3.5 0 1 0 -7 0M470.8 1145.3a3.5 3.5 0 1 0 7 0a3.5 3.5 0 1 0 -7 0M474.4 1146.6a3.5 3.5 0 1 0 7 0a3.5 3.5 0 1 0 -7 0M478.0 1146.9a3.5 3.5 0 1 0 7 0a3.5 3.5 0 1 0 -7 0M481.6 1147.0a3.5 3.5 0 1 0 7 0a3.5 3.5 0 1 0 -7 0M485.2 1146.4a3.5 3.5 0 1 0 7 0a3.5 3.5 0 1 0 -7 0M488.9 1146.5a3.5 3.5 0 1 0 7 0a3.5 3.5 0 1 0 -7 0M492.1 1146.6a3.5 3.5 0 1 0 7 0a3.5 3.5 0 1 0 -7 0M495.9 1145.7a3.5 3.5 0 1 0 7 0a3.5 3.5 0 1 0 -7 0M499.2 1146.8a3.5 3.5 0 1 0 7 0a3.5 3.5 0 1 0 -7 0M502.8 1146.4a3.5 3.5 0 1 0 7 0a3.5 3.5 0 1 0 -7 0M506.7 1145.8a3.5 3.5 0 1 0 7 0a3.5 3.5 0 1 0 -7 0M510.1 1147.2a3.5 3.5 0 1 0 7 0a3.5 3.5 0 1 0 -7 0M513.8 1146.1a3.5 3.5 0 1 0 7 0a3.5 3.5 0 1 0 -7 0M517.2 1145.6a3.5 3.5 0 1 0 7 0a3.5 3.5 0 1 0 -7 0M520.6 1147.4a3.5 3.5 0 1 0 7 0a3.5 3.5 0 1 0 -7 0M524.3 1147.3a3.5 3.5 0 1 0 7 0a3.5 3.5 0 1 0 -7 0M527.9 1147.2a3.5 3.5 0 1 0 7 0a3.5 3.5 0 1 0 -7 0M531.6 1147.7a3.5 3.5 0 1 0 7 0a3.5 3.5 0 1 0 -7 0M535.2 1146.4a3.5 3.5 0 1 0 7 0a3.5 3.5 0 1 0 -7 0M538.6 1147.7a3.5 3.5 0 1 0 7 0a3.5 3.5 0 1 0 -7 0M542.1 1146.4a3.5 3.5 0 1 0 7 0a3.5 3.5 0 1 0 -7 0M545.5 1145.8a3.5 3.5 0 1 0 7 0a3.5 3.5 0 1 0 -7 0M549.3 1147.6a3.5 3.5 0 1 0 7 0a3.5 3.5 0 1 0 -7 0M552.7 1146.8a3.5 3.5 0 1 0 7 0a3.5 3.5 0 1 0 -7 0M556.2 1119.7a3.5 3.5 0 1 0 7 0a3.5 3.5 0 1 0 -7 0M559.7 1118.2a3.5 3.5 0 1 0 7 0a3.5 3.5 0 1 0 -7 0M563.3 1119.1a3.5 3.5 0 1 0 7 0a3.5 3.5 0 1 0 -7 0M567.1 1118.8a3.5 3.5 0 1 0 7 0a3.5 3.5 0 1 0 -7 0M570.5 1118.6a3.5 3.5 0 1 0 7 0a3.5 3.5 0 1 0 -7 0M574.4 1118.4a3.5 3.5 0 1 0 7 0a3.5 3.5 0 1 0 -7 0M577.6 1118.9a3.5 3.5 0 1 0 7 0a3.5 3.5 0 1 0 -7 0M581.5 1118.7a3.5 3.5 0 1 0 7 0a3.5 3.5 0 1 0 -7 0M584.7 1119.0a3.5 3.5 0 1 0 7 0a3.5 3.5 0 1 0 -7 0M588.2 1118.6a3.5 3.5 0 1 0 7 0a3.5 3.5 0 1 0 -7 0M592.1 1119.3a3.5 3.5 0 1 0 7 0a3.5 3.5 0 1 0 -7 0M595.4 1118.6a3.5 3.5 0 1 0 7 0a3.5 3.5 0 1 0 -7 0M599.2 1119.8a3.5 3.5 0 1 0 7 0a3.5 3.5 0 1 0 -7 0M602.5 1118.9a3.5 3.5 0 1 0 7 0a3.5 3.5 0 1 0 -7 0M606.0 1117.6a3.5 3.5 0 1 0 7 0a3.5 3.5 0 1 0 -7 0M609.9 1118.6a3.5 3.5 0 1 0 7 0a3.5 3.5 0 1 0 -7 0M613.4 1119.4a3.5 3.5 0 1 0 7 0a3.5 3.5 0 1 0 -7 0M617.0 1118.5a3.5 3.5 0 1 0 7 0a3.5 3.5 0 1 0 -7 0M620.6 1119.2a3.5 3.5 0 1 0 7 0a3.5 3.5 0 1 0 -7 0M623.8 1119.6a3.5 3.5 0 1 0 7 0a3.5 3.5 0 1 0 -7 0M627.6 1119.1a3.5 3.5 0 1 0 7 0a3.5 3.5 0 1 0 -7 0M631.2 1118.3a3.5 3.5 0 1 0 7 0a3.5 3.5 0 1 0 -7 0M634.7 1118.5a3.5 3.5 0 1 0 7 0a3.5 3.5 0 1 0 -7 0M638.4 1118.7a3.5 3.5 0 1 0 7 0a3.5 3.5 0 1 0 -7 0M641.7 1119.2a3.5 3.5 0 1 0 7 0a3.5 3.5 0 1 0 -7 0M645.6 1119.3a3.5 3.5 0 1 0 7 0a3.5 3.5 0 1 0 -7 0M649.0 1117.9a3.5 3.5 0 1 0 7 0a3.5 3.5 0 1 0 -7 0M652.3 1118.5a3.5 3.5 0 1 0 7 0a3.5 3.5 0 1 0 -7 0M655.9 1119.2a3.5 3.5 0 1 0 7 0a3.5 3.5 0 1 0 -7 0M659.7 1119.9a3.5 3.5 0 1 0 7 0a3.5 3.5 0 1 0 -7 0M663.3 1119.4a3.5 3.5 0 1 0 7 0a3.5 3.5 0 1 0 -7 0M666.6 1117.3a3.5 3.5 0 1 0 7 0a3.5 3.5 0 1 0 -7 0M670.2 1119.3a3.5 3.5 0 1 0 7 0a3.5 3.5 0 1 0 -7 0M674.0 1118.7a3.5 3.5 0 1 0 7 0a3.5 3.5 0 1 0 -7 0M677.3 1118.6a3.5 3.5 0 1 0 7 0a3.5 3.5 0 1 0 -7 0M681.1 1118.8a3.5 3.5 0 1 0 7 0a3.5 3.5 0 1 0 -7 0M684.5 1118.8a3.5 3.5 0 1 0 7 0a3.5 3.5 0 1 0 -7 0M687.9 1119.4a3.5 3.5 0 1 0 7 0a3.5 3.5 0 1 0 -7 0M691.6 1119.3a3.5 3.5 0 1 0 7 0a3.5 3.5 0 1 0 -7 0M695.3 1117.7a3.5 3.5 0 1 0 7 0a3.5 3.5 0 1 0 -7 0M698.8 1119.1a3.5 3.5 0 1 0 7 0a3.5 3.5 0 1 0 -7 0M702.4 1118.2a3.5 3.5 0 1 0 7 0a3.5 3.5 0 1 0 -7 0M705.8 1119.6a3.5 3.5 0 1 0 7 0a3.5 3.5 0 1 0 -7 0M709.6 1118.8a3.5 3.5 0 1 0 7 0a3.5 3.5 0 1 0 -7 0M713.0 1118.5a3.5 3.5 0 1 0 7 0a3.5 3.5 0 1 0 -7 0M716.7 1118.1a3.5 3.5 0 1 0 7 0a3.5 3.5 0 1 0 -7 0M720.2 1119.3a3.5 3.5 0 1 0 7 0a3.5 3.5 0 1 0 -7 0M723.7 1118.7a3.5 3.5 0 1 0 7 0a3.5 3.5 0 1 0 -7 0M727.2 1115.0a3.5 3.5 0 1 0 7 0a3.5 3.5 0 1 0 -7 0M731.0 1109.5a3.5 3.5 0 1 0 7 0a3.5 3.5 0 1 0 -7 0M734.6 1094.9a3.5 3.5 0 1 0 7 0a3.5 3.5 0 1 0 -7 0M738.1 1086.4a3.5 3.5 0 1 0 7 0a3.5 3.5 0 1 0 -7 0M741.5 1070.1a3.5 3.5 0 1 0 7 0a3.5 3.5 0 1 0 -7 0M745.0 1047.6a3.5 3.5 0 1 0 7 0a3.5 3.5 0 1 0 -7 0M748.4 1043.9a3.5 3.5 0 1 0 7 0a3.5 3.5 0 1 0 -7 0M752.4 1006.3a3.5 3.5 0 1 0 7 0a3.5 3.5 0 1 0 -7 0M755.8 988.4a3.5 3.5 0 1 0 7 0a3.5 3.5 0 1 0 -7 0M759.5 966.8a3.5 3.5 0 1 0 7 0a3.5 3.5 0 1 0 -7 0M762.8 937.6a3.5 3.5 0 1 0 7 0a3.5 3.5 0 1 0 -7 0M766.5 908.5a3.5 3.5 0 1 0 7 0a3.5 3.5 0 1 0 -7 0M770.2 889.0a3.5 3.5 0 1 0 7 0a3.5 3.5 0 1 0 -7 0M773.7 859.7a3.5 3.5 0 1 0 7 0a3.5 3.5 0 1 0 -7 0M777.2 843.6a3.5 3.5 0 1 0 7 0a3.5 3.5 0 1 0 -7 0M780.6 820.9a3.5 3.5 0 1 0 7 0a3.5 3.5 0 1 0 -7 0M784.2 793.3a3.5 3.5 0 1 0 7 0a3.5 3.5 0 1 0 -7 0M788.0 775.4a3.5 3.5 0 1 0 7 0a3.5 3.5 0 1 0 -7 0M791.3 756.1a3.5 3.5 0 1 0 7 0a3.5 3.5 0 1 0 -7 0M795.0 741.0a3.5 3.5 0 1 0 7 0a3.5 3.5 0 1 0 -7 0M798.5 724.5a3.5 3.5 0 1 0 7 0a3.5 3.5 0 1 0 -7 0M802.2 712.0a3.5 3.5 0 1 0 7 0a3.5 3.5 0 1 0 -7 0M805.7 701.5a3.5 3.5 0 1 0 7 0a3.5 3.5 0 1 0 -7 0M809.1 693.9a3.5 3.5 0 1 0 7 0a3.5 3.5 0 1 0 -7 0M812.5 689.0a3.5 3.5 0 1 0 7 0a3.5 3.5 0 1 0 -7 0M816.2 687.3a3.5 3.5 0 1 0 7 0a3.5 3.5 0 1 0 -7 0M819.8 687.7a3.5 3.5 0 1 0 7 0a3.5 3.5 0 1 0 -7 0M823.4 687.8a3.5 3.5 0 1 0 7 0a3.5 3.5 0 1 0 -7 0M827.1 686.6a3.5 3.5 0 1 0 7 0a3.5 3.5 0 1 0 -7 0M830.7 687.4a3.5 3.5 0 1 0 7 0a3.5 3.5 0 1 0 -7 0M833.9 687.4a3.5 3.5 0 1 0 7 0a3.5 3.5 0 1 0 -7 0M837.8 687.3a3.5 3.5 0 1 0 7 0a3.5 3.5 0 1 0 -7 0M841.3 687.0a3.5 3.5 0 1 0 7 0a3.5 3.5 0 1 0 -7 0M844.9 687.3a3.5 3.5 0 1 0 7 0a3.5 3.5 0 1 0 -7 0M848.4 686.8a3.5 3.5 0 1 0 7 0a3.5 3.5 0 1 0 -7 0M851.8 686.9a3.5 3.5 0 1 0 7 0a3.5 3.5 0 1 0 -7 0M855.6 686.8a3.5 3.5 0 1 0 7 0a3.5 3.5 0 1 0 -7 0M859.1 686.9a3.5 3.5 0 1 0 7 0a3.5 3.5 0 1 0 -7 0M862.6 686.3a3.5 3.5 0 1 0 7 0a3.5 3.5 0 1 0 -7 0M866.3 686.5a3.5 3.5 0 1 0 7 0a3.5 3.5 0 1 0 -7 0M869.6 686.2a3.5 3.5 0 1 0 7 0a3.5 3.5 0 1 0 -7 0M873.1 686.0a3.5 3.5 0 1 0 7 0a3.5 3.5 0 1 0 -7 0M876.8 685.9a3.5 3.5 0 1 0 7 0a3.5 3.5 0 1 0 -7 0M880.5 686.9a3.5 3.5 0 1 0 7 0a3.5 3.5 0 1 0 -7 0M883.8 686.2a3.5 3.5 0 1 0 7 0a3.5 3.5 0 1 0 -7 0M887.6 686.2a3.5 3.5 0 1 0 7 0a3.5 3.5 0 1 0 -7 0M891.2 685.4a3.5 3.5 0 1 0 7 0a3.5 3.5 0 1 0 -7 0" stroke="#84d4ea" stroke-width="1.3" fill="none" clip-path="url(#clipll)"/><path d="M463.9 1127.0a3.5 3.5 0 1 0 7 0a3.5 3.5 0 1 0 -7 0M467.3 1126.1a3.5 3.5 0 1 0 7 0a3.5 3.5 0 1 0 -7 0M470.9 1125.4a3.5 3.5 0 1 0 7 0a3.5 3.5 0 1 0 -7 0M474.6 1126.4a3.5 3.5 0 1 0 7 0a3.5 3.5 0 1 0 -7 0M478.0 1126.7a3.5 3.5 0 1 0 7 0a3.5 3.5 0 1 0 -7 0M481.7 1126.0a3.5 3.5 0 1 0 7 0a3.5 3.5 0 1 0 -7 0M485.0 1125.7a3.5 3.5 0 1 0 7 0a3.5 3.5 0 1 0 -7 0M488.6 1126.1a3.5 3.5 0 1 0 7 0a3.5 3.5 0 1 0 -7 0M492.1 1127.1a3.5 3.5 0 1 0 7 0a3.5 3.5 0 1 0 -7 0M495.9 1126.4a3.5 3.5 0 1 0 7 0a3.5 3.5 0 1 0 -7 0M499.4 1126.1a3.5 3.5 0 1 0 7 0a3.5 3.5 0 1 0 -7 0M502.8 1125.8a3.5 3.5 0 1 0 7 0a3.5 3.5 0 1 0 -7 0M506.7 1127.0a3.5 3.5 0 1 0 7 0a3.5 3.5 0 1 0 -7 0M510.0 1126.1a3.5 3.5 0 1 0 7 0a3.5 3.5 0 1 0 -7 0M513.6 1125.4a3.5 3.5 0 1 0 7 0a3.5 3.5 0 1 0 -7 0M517.1 1125.2a3.5 3.5 0 1 0 7 0a3.5 3.5 0 1 0 -7 0M520.7 1126.8a3.5 3.5 0 1 0 7 0a3.5 3.5 0 1 0 -7 0M524.5 1126.8a3.5 3.5 0 1 0 7 0a3.5 3.5 0 1 0 -7 0M527.8 1126.2a3.5 3.5 0 1 0 7 0a3.5 3.5 0 1 0 -7 0M531.3 1126.4a3.5 3.5 0 1 0 7 0a3.5 3.5 0 1 0 -7 0M535.0 1126.3a3.5 3.5 0 1 0 7 0a3.5 3.5 0 1 0 -7 0M538.5 1126.0a3.5 3.5 0 1 0 7 0a3.5 3.5 0 1 0 -7 0M542.3 1125.8a3.5 3.5 0 1 0 7 0a3.5 3.5 0 1 0 -7 0M545.5 1126.3a3.5 3.5 0 1 0 7 0a3.5 3.5 0 1 0 -7 0M549.5 1126.6a3.5 3.5 0 1 0 7 0a3.5 3.5 0 1 0 -7 0M552.6 1126.7a3.5 3.5 0 1 0 7 0a3.5 3.5 0 1 0 -7 0M556.5 1118.9a3.5 3.5 0 1 0 7 0a3.5 3.5 0 1 0 -7 0M560.0 1119.0a3.5 3.5 0 1 0 7 0a3.5 3.5 0 1 0 -7 0M563.4 1118.7a3.5 3.5 0 1 0 7 0a3.5 3.5 0 1 0 -7 0M567.0 1116.8a3.5 3.5 0 1 0 7 0a3.5 3.5 0 1 0 -7 0M570.5 1118.1a3.5 3.5 0 1 0 7 0a3.5 3.5 0 1 0 -7 0M574.1 1118.9a3.5 3.5 0 1 0 7 0a3.5 3.5 0 1 0 -7 0M577.6 1118.5a3.5 3.5 0 1 0 7 0a3.5 3.5 0 1 0 -7 0M581.2 1119.3a3.5 3.5 0 1 0 7 0a3.5 3.5 0 1 0 -7 0M585.1 1119.4a3.5 3.5 0 1 0 7 0a3.5 3.5 0 1 0 -7 0M588.6 1118.3a3.5 3.5 0 1 0 7 0a3.5 3.5 0 1 0 -7 0M592.2 1118.0a3.5 3.5 0 1 0 7 0a3.5 3.5 0 1 0 -7 0M595.4 1119.1a3.5 3.5 0 1 0 7 0a3.5 3.5 0 1 0 -7 0M599.0 1118.1a3.5 3.5 0 1 0 7 0a3.5 3.5 0 1 0 -7 0M602.8 1118.5a3.5 3.5 0 1 0 7 0a3.5 3.5 0 1 0 -7 0M606.0 1118.7a3.5 3.5 0 1 0 7 0a3.5 3.5 0 1 0 -7 0M609.9 1117.6a3.5 3.5 0 1 0 7 0a3.5 3.5 0 1 0 -7 0M613.2 1118.7a3.5 3.5 0 1 0 7 0a3.5 3.5 0 1 0 -7 0M617.1 1119.4a3.5 3.5 0 1 0 7 0a3.5 3.5 0 1 0 -7 0M620.3 1118.6a3.5 3.5 0 1 0 7 0a3.5 3.5 0 1 0 -7 0M624.1 1118.7a3.5 3.5 0 1 0 7 0a3.5 3.5 0 1 0 -7 0M627.5 1117.7a3.5 3.5 0 1 0 7 0a3.5 3.5 0 1 0 -7 0M631.0 1119.9a3.5 3.5 0 1 0 7 0a3.5 3.5 0 1 0 -7 0M634.5 1118.1a3.5 3.5 0 1 0 7 0a3.5 3.5 0 1 0 -7 0M638.4 1118.6a3.5 3.5 0 1 0 7 0a3.5 3.5 0 1 0 -7 0M641.8 1119.7a3.5 3.5 0 1 0 7 0a3.5 3.5 0 1 0 -7 0M645.2 1118.3a3.5 3.5 0 1 0 7 0a3.5 3.5 0 1 0 -7 0M648.9 1118.8a3.5 3.5 0 1 0 7 0a3.5 3.5 0 1 0 -7 0M652.7 1118.3a3.5 3.5 0 1 0 7 0a3.5 3.5 0 1 0 -7 0M655.9 1118.6a3.5 3.5 0 1 0 7 0a3.5 3.5 0 1 0 -7 0M659.7 1118.6a3.5 3.5 0 1 0 7 0a3.5 3.5 0 1 0 -7 0M663.0 1118.5a3.5 3.5 0 1 0 7 0a3.5 3.5 0 1 0 -7 0M666.6 1118.0a3.5 3.5 0 1 0 7 0a3.5 3.5 0 1 0 -7 0M670.4 1118.4a3.5 3.5 0 1 0 7 0a3.5 3.5 0 1 0 -7 0M674.0 1118.2a3.5 3.5 0 1 0 7 0a3.5 3.5 0 1 0 -7 0M677.3 1119.1a3.5 3.5 0 1 0 7 0a3.5 3.5 0 1 0 -7 0M680.8 1117.5a3.5 3.5 0 1 0 7 0a3.5 3.5 0 1 0 -7 0M684.4 1119.1a3.5 3.5 0 1 0 7 0a3.5 3.5 0 1 0 -7 0M688.2 1118.0a3.5 3.5 0 1 0 7 0a3.5 3.5 0 1 0 -7 0M691.7 1118.4a3.5 3.5 0 1 0 7 0a3.5 3.5 0 1 0 -7 0M695.1 1118.9a3.5 3.5 0 1 0 7 0a3.5 3.5 0 1 0 -7 0M698.7 1118.5a3.5 3.5 0 1 0 7 0a3.5 3.5 0 1 0 -7 0M702.4 1118.3a3.5 3.5 0 1 0 7 0a3.5 3.5 0 1 0 -7 0M706.0 1118.8a3.5 3.5 0 1 0 7 0a3.5 3.5 0 1 0 -7 0M709.6 1119.4a3.5 3.5 0 1 0 7 0a3.5 3.5 0 1 0 -7 0M713.1 1119.0a3.5 3.5 0 1 0 7 0a3.5 3.5 0 1 0 -7 0M716.5 1117.9a3.5 3.5 0 1 0 7 0a3.5 3.5 0 1 0 -7 0M720.0 1118.9a3.5 3.5 0 1 0 7 0a3.5 3.5 0 1 0 -7 0M723.8 1119.1a3.5 3.5 0 1 0 7 0a3.5 3.5 0 1 0 -7 0M727.2 1118.3a3.5 3.5 0 1 0 7 0a3.5 3.5 0 1 0 -7 0M730.9 1117.9a3.5 3.5 0 1 0 7 0a3.5 3.5 0 1 0 -7 0M734.2 1117.4a3.5 3.5 0 1 0 7 0a3.5 3.5 0 1 0 -7 0M738.1 1118.3a3.5 3.5 0 1 0 7 0a3.5 3.5 0 1 0 -7 0M741.4 1118.7a3.5 3.5 0 1 0 7 0a3.5 3.5 0 1 0 -7 0M745.2 1118.3a3.5 3.5 0 1 0 7 0a3.5 3.5 0 1 0 -7 0M748.8 1118.6a3.5 3.5 0 1 0 7 0a3.5 3.5 0 1 0 -7 0M752.2 1119.4a3.5 3.5 0 1 0 7 0a3.5 3.5 0 1 0 -7 0M755.5 1117.7a3.5 3.5 0 1 0 7 0a3.5 3.5 0 1 0 -7 0M759.5 1117.8a3.5 3.5 0 1 0 7 0a3.5 3.5 0 1 0 -7 0M762.9 1119.3a3.5 3.5 0 1 0 7 0a3.5 3.5 0 1 0 -7 0M766.6 1117.7a3.5 3.5 0 1 0 7 0a3.5 3.5 0 1 0 -7 0M769.9 1117.5a3.5 3.5 0 1 0 7 0a3.5 3.5 0 1 0 -7 0M773.4 1113.3a3.5 3.5 0 1 0 7 0a3.5 3.5 0 1 0 -7 0M777.3 1107.8a3.5 3.5 0 1 0 7 0a3.5 3.5 0 1 0 -7 0M780.6 1091.1a3.5 3.5 0 1 0 7 0a3.5 3.5 0 1 0 -7 0M784.1 1078.4a3.5 3.5 0 1 0 7 0a3.5 3.5 0 1 0 -7 0M787.7 1056.5a3.5 3.5 0 1 0 7 0a3.5 3.5 0 1 0 -7 0M791.4 1036.1a3.5 3.5 0 1 0 7 0a3.5 3.5 0 1 0 -7 0M794.7 1016.3a3.5 3.5 0 1 0 7 0a3.5 3.5 0 1 0 -7 0M798.5 1007.4a3.5 3.5 0 1 0 7 0a3.5 3.5 0 1 0 -7 0M802.0 984.8a3.5 3.5 0 1 0 7 0a3.5 3.5 0 1 0 -7 0M805.6 954.1a3.5 3.5 0 1 0 7 0a3.5 3.5 0 1 0 -7 0M809.0 937.6a3.5 3.5 0 1 0 7 0a3.5 3.5 0 1 0 -7 0M812.8 916.7a3.5 3.5 0 1 0 7 0a3.5 3.5 0 1 0 -7 0M816.4 893.1a3.5 3.5 0 1 0 7 0a3.5 3.5 0 1 0 -7 0M820.0 866.8a3.5 3.5 0 1 0 7 0a3.5 3.5 0 1 0 -7 0M823.3 844.3a3.5 3.5 0 1 0 7 0a3.5 3.5 0 1 0 -7 0M827.1 823.0a3.5 3.5 0 1 0 7 0a3.5 3.5 0 1 0 -7 0M830.5 803.3a3.5 3.5 0 1 0 7 0a3.5 3.5 0 1 0 -7 0M834.2 783.0a3.5 3.5 0 1 0 7 0a3.5 3.5 0 1 0 -7 0M837.5 764.1a3.5 3.5 0 1 0 7 0a3.5 3.5 0 1 0 -7 0M841.4 746.9a3.5 3.5 0 1 0 7 0a3.5 3.5 0 1 0 -7 0M845.0 731.3a3.5 3.5 0 1 0 7 0a3.5 3.5 0 1 0 -7 0M848.3 718.8a3.5 3.5 0 1 0 7 0a3.5 3.5 0 1 0 -7 0M851.9 707.1a3.5 3.5 0 1 0 7 0a3.5 3.5 0 1 0 -7 0M855.5 697.6a3.5 3.5 0 1 0 7 0a3.5 3.5 0 1 0 -7 0M859.0 690.5a3.5 3.5 0 1 0 7 0a3.5 3.5 0 1 0 -7 0M862.4 686.2a3.5 3.5 0 1 0 7 0a3.5 3.5 0 1 0 -7 0M866.3 684.7a3.5 3.5 0 1 0 7 0a3.5 3.5 0 1 0 -7 0M869.6 685.0a3.5 3.5 0 1 0 7 0a3.5 3.5 0 1 0 -7 0M873.1 684.4a3.5 3.5 0 1 0 7 0a3.5 3.5 0 1 0 -7 0M876.6 684.6a3.5 3.5 0 1 0 7 0a3.5 3.5 0 1 0 -7 0M880.3 684.6a3.5 3.5 0 1 0 7 0a3.5 3.5 0 1 0 -7 0M884.1 684.3a3.5 3.5 0 1 0 7 0a3.5 3.5 0 1 0 -7 0M887.3 683.5a3.5 3.5 0 1 0 7 0a3.5 3.5 0 1 0 -7 0M890.9 684.6a3.5 3.5 0 1 0 7 0a3.5 3.5 0 1 0 -7 0" stroke="#44aee0" stroke-width="1.3" fill="none" clip-path="url(#clipll)"/><path d="M464.0 1127.8a3.5 3.5 0 1 0 7 0a3.5 3.5 0 1 0 -7 0M467.3 1128.0a3.5 3.5 0 1 0 7 0a3.5 3.5 0 1 0 -7 0M470.7 1126.9a3.5 3.5 0 1 0 7 0a3.5 3.5 0 1 0 -7 0M474.4 1127.6a3.5 3.5 0 1 0 7 0a3.5 3.5 0 1 0 -7 0M478.0 1128.3a3.5 3.5 0 1 0 7 0a3.5 3.5 0 1 0 -7 0M481.7 1128.0a3.5 3.5 0 1 0 7 0a3.5 3.5 0 1 0 -7 0M485.0 1127.8a3.5 3.5 0 1 0 7 0a3.5 3.5 0 1 0 -7 0M488.6 1127.9a3.5 3.5 0 1 0 7 0a3.5 3.5 0 1 0 -7 0M492.5 1127.1a3.5 3.5 0 1 0 7 0a3.5 3.5 0 1 0 -7 0M495.9 1128.3a3.5 3.5 0 1 0 7 0a3.5 3.5 0 1 0 -7 0M499.3 1127.4a3.5 3.5 0 1 0 7 0a3.5 3.5 0 1 0 -7 0M502.9 1127.6a3.5 3.5 0 1 0 7 0a3.5 3.5 0 1 0 -7 0M506.5 1128.3a3.5 3.5 0 1 0 7 0a3.5 3.5 0 1 0 -7 0M510.2 1127.7a3.5 3.5 0 1 0 7 0a3.5 3.5 0 1 0 -7 0M513.7 1127.7a3.5 3.5 0 1 0 7 0a3.5 3.5 0 1 0 -7 0M517.4 1127.4a3.5 3.5 0 1 0 7 0a3.5 3.5 0 1 0 -7 0M520.9 1127.9a3.5 3.5 0 1 0 7 0a3.5 3.5 0 1 0 -7 0M524.3 1127.5a3.5 3.5 0 1 0 7 0a3.5 3.5 0 1 0 -7 0M528.0 1128.6a3.5 3.5 0 1 0 7 0a3.5 3.5 0 1 0 -7 0M531.6 1128.3a3.5 3.5 0 1 0 7 0a3.5 3.5 0 1 0 -7 0M535.1 1127.2a3.5 3.5 0 1 0 7 0a3.5 3.5 0 1 0 -7 0M538.6 1127.1a3.5 3.5 0 1 0 7 0a3.5 3.5 0 1 0 -7 0M542.3 1127.7a3.5 3.5 0 1 0 7 0a3.5 3.5 0 1 0 -7 0M545.8 1128.0a3.5 3.5 0 1 0 7 0a3.5 3.5 0 1 0 -7 0M549.4 1127.1a3.5 3.5 0 1 0 7 0a3.5 3.5 0 1 0 -7 0M552.7 1128.9a3.5 3.5 0 1 0 7 0a3.5 3.5 0 1 0 -7 0M556.5 1130.0a3.5 3.5 0 1 0 7 0a3.5 3.5 0 1 0 -7 0M559.7 1129.2a3.5 3.5 0 1 0 7 0a3.5 3.5 0 1 0 -7 0M563.6 1129.2a3.5 3.5 0 1 0 7 0a3.5 3.5 0 1 0 -7 0M567.1 1130.1a3.5 3.5 0 1 0 7 0a3.5 3.5 0 1 0 -7 0M570.6 1130.6a3.5 3.5 0 1 0 7 0a3.5 3.5 0 1 0 -7 0M574.4 1128.7a3.5 3.5 0 1 0 7 0a3.5 3.5 0 1 0 -7 0M577.8 1129.5a3.5 3.5 0 1 0 7 0a3.5 3.5 0 1 0 -7 0M581.3 1130.1a3.5 3.5 0 1 0 7 0a3.5 3.5 0 1 0 -7 0M585.0 1129.5a3.5 3.5 0 1 0 7 0a3.5 3.5 0 1 0 -7 0M588.6 1129.0a3.5 3.5 0 1 0 7 0a3.5 3.5 0 1 0 -7 0M592.0 1131.0a3.5 3.5 0 1 0 7 0a3.5 3.5 0 1 0 -7 0M595.5 1128.9a3.5 3.5 0 1 0 7 0a3.5 3.5 0 1 0 -7 0M599.1 1129.1a3.5 3.5 0 1 0 7 0a3.5 3.5 0 1 0 -7 0M602.6 1130.7a3.5 3.5 0 1 0 7 0a3.5 3.5 0 1 0 -7 0M606.3 1129.1a3.5 3.5 0 1 0 7 0a3.5 3.5 0 1 0 -7 0M609.7 1130.5a3.5 3.5 0 1 0 7 0a3.5 3.5 0 1 0 -7 0M613.3 1128.9a3.5 3.5 0 1 0 7 0a3.5 3.5 0 1 0 -7 0M616.9 1129.3a3.5 3.5 0 1 0 7 0a3.5 3.5 0 1 0 -7 0M620.4 1128.3a3.5 3.5 0 1 0 7 0a3.5 3.5 0 1 0 -7 0M623.9 1129.9a3.5 3.5 0 1 0 7 0a3.5 3.5 0 1 0 -7 0M627.7 1129.5a3.5 3.5 0 1 0 7 0a3.5 3.5 0 1 0 -7 0M631.3 1129.0a3.5 3.5 0 1 0 7 0a3.5 3.5 0 1 0 -7 0M634.7 1129.9a3.5 3.5 0 1 0 7 0a3.5 3.5 0 1 0 -7 0M638.2 1129.9a3.5 3.5 0 1 0 7 0a3.5 3.5 0 1 0 -7 0M641.7 1129.8a3.5 3.5 0 1 0 7 0a3.5 3.5 0 1 0 -7 0M645.3 1129.6a3.5 3.5 0 1 0 7 0a3.5 3.5 0 1 0 -7 0M648.8 1130.2a3.5 3.5 0 1 0 7 0a3.5 3.5 0 1 0 -7 0M652.5 1129.3a3.5 3.5 0 1 0 7 0a3.5 3.5 0 1 0 -7 0M656.1 1129.2a3.5 3.5 0 1 0 7 0a3.5 3.5 0 1 0 -7 0M659.4 1129.5a3.5 3.5 0 1 0 7 0a3.5 3.5 0 1 0 -7 0M663.4 1128.6a3.5 3.5 0 1 0 7 0a3.5 3.5 0 1 0 -7 0M666.7 1129.7a3.5 3.5 0 1 0 7 0a3.5 3.5 0 1 0 -7 0M670.4 1128.8a3.5 3.5 0 1 0 7 0a3.5 3.5 0 1 0 -7 0M674.0 1129.9a3.5 3.5 0 1 0 7 0a3.5 3.5 0 1 0 -7 0M677.6 1129.1a3.5 3.5 0 1 0 7 0a3.5 3.5 0 1 0 -7 0M680.9 1130.6a3.5 3.5 0 1 0 7 0a3.5 3.5 0 1 0 -7 0M684.5 1129.4a3.5 3.5 0 1 0 7 0a3.5 3.5 0 1 0 -7 0M688.3 1129.6a3.5 3.5 0 1 0 7 0a3.5 3.5 0 1 0 -7 0M691.5 1129.8a3.5 3.5 0 1 0 7 0a3.5 3.5 0 1 0 -7 0M695.0 1129.9a3.5 3.5 0 1 0 7 0a3.5 3.5 0 1 0 -7 0M698.8 1129.7a3.5 3.5 0 1 0 7 0a3.5 3.5 0 1 0 -7 0M702.3 1130.0a3.5 3.5 0 1 0 7 0a3.5 3.5 0 1 0 -7 0M706.1 1130.8a3.5 3.5 0 1 0 7 0a3.5 3.5 0 1 0 -7 0M709.6 1129.9a3.5 3.5 0 1 0 7 0a3.5 3.5 0 1 0 -7 0M713.0 1129.9a3.5 3.5 0 1 0 7 0a3.5 3.5 0 1 0 -7 0M716.8 1129.8a3.5 3.5 0 1 0 7 0a3.5 3.5 0 1 0 -7 0M720.2 1130.1a3.5 3.5 0 1 0 7 0a3.5 3.5 0 1 0 -7 0M723.7 1129.6a3.5 3.5 0 1 0 7 0a3.5 3.5 0 1 0 -7 0M727.3 1129.1a3.5 3.5 0 1 0 7 0a3.5 3.5 0 1 0 -7 0M730.8 1129.7a3.5 3.5 0 1 0 7 0a3.5 3.5 0 1 0 -7 0M734.3 1129.8a3.5 3.5 0 1 0 7 0a3.5 3.5 0 1 0 -7 0M738.0 1128.8a3.5 3.5 0 1 0 7 0a3.5 3.5 0 1 0 -7 0M741.4 1129.0a3.5 3.5 0 1 0 7 0a3.5 3.5 0 1 0 -7 0M745.3 1129.0a3.5 3.5 0 1 0 7 0a3.5 3.5 0 1 0 -7 0M748.7 1128.9a3.5 3.5 0 1 0 7 0a3.5 3.5 0 1 0 -7 0M752.2 1129.7a3.5 3.5 0 1 0 7 0a3.5 3.5 0 1 0 -7 0M755.6 1129.6a3.5 3.5 0 1 0 7 0a3.5 3.5 0 1 0 -7 0M759.3 1128.9a3.5 3.5 0 1 0 7 0a3.5 3.5 0 1 0 -7 0M762.8 1129.9a3.5 3.5 0 1 0 7 0a3.5 3.5 0 1 0 -7 0M766.5 1129.6a3.5 3.5 0 1 0 7 0a3.5 3.5 0 1 0 -7 0M770.0 1129.3a3.5 3.5 0 1 0 7 0a3.5 3.5 0 1 0 -7 0M773.7 1129.3a3.5 3.5 0 1 0 7 0a3.5 3.5 0 1 0 -7 0M777.3 1129.7a3.5 3.5 0 1 0 7 0a3.5 3.5 0 1 0 -7 0M780.7 1129.0a3.5 3.5 0 1 0 7 0a3.5 3.5 0 1 0 -7 0M784.2 1129.7a3.5 3.5 0 1 0 7 0a3.5 3.5 0 1 0 -7 0M787.8 1129.1a3.5 3.5 0 1 0 7 0a3.5 3.5 0 1 0 -7 0M791.6 1129.0a3.5 3.5 0 1 0 7 0a3.5 3.5 0 1 0 -7 0M794.9 1129.2a3.5 3.5 0 1 0 7 0a3.5 3.5 0 1 0 -7 0M798.5 1129.1a3.5 3.5 0 1 0 7 0a3.5 3.5 0 1 0 -7 0M802.2 1130.2a3.5 3.5 0 1 0 7 0a3.5 3.5 0 1 0 -7 0M805.5 1130.3a3.5 3.5 0 1 0 7 0a3.5 3.5 0 1 0 -7 0M809.1 1129.9a3.5 3.5 0 1 0 7 0a3.5 3.5 0 1 0 -7 0M812.9 1129.3a3.5 3.5 0 1 0 7 0a3.5 3.5 0 1 0 -7 0M816.4 1128.7a3.5 3.5 0 1 0 7 0a3.5 3.5 0 1 0 -7 0M819.8 1129.6a3.5 3.5 0 1 0 7 0a3.5 3.5 0 1 0 -7 0M823.2 1125.2a3.5 3.5 0 1 0 7 0a3.5 3.5 0 1 0 -7 0M827.1 1120.3a3.5 3.5 0 1 0 7 0a3.5 3.5 0 1 0 -7 0M830.6 1110.3a3.5 3.5 0 1 0 7 0a3.5 3.5 0 1 0 -7 0M834.2 1095.6a3.5 3.5 0 1 0 7 0a3.5 3.5 0 1 0 -7 0M837.9 1074.2a3.5 3.5 0 1 0 7 0a3.5 3.5 0 1 0 -7 0M841.4 1060.2a3.5 3.5 0 1 0 7 0a3.5 3.5 0 1 0 -7 0M844.7 1035.1a3.5 3.5 0 1 0 7 0a3.5 3.5 0 1 0 -7 0M848.2 1028.0a3.5 3.5 0 1 0 7 0a3.5 3.5 0 1 0 -7 0M851.8 994.5a3.5 3.5 0 1 0 7 0a3.5 3.5 0 1 0 -7 0M855.4 970.8a3.5 3.5 0 1 0 7 0a3.5 3.5 0 1 0 -7 0M859.0 950.1a3.5 3.5 0 1 0 7 0a3.5 3.5 0 1 0 -7 0M862.4 921.5a3.5 3.5 0 1 0 7 0a3.5 3.5 0 1 0 -7 0M866.0 897.9a3.5 3.5 0 1 0 7 0a3.5 3.5 0 1 0 -7 0M869.7 870.2a3.5 3.5 0 1 0 7 0a3.5 3.5 0 1 0 -7 0M873.3 836.7a3.5 3.5 0 1 0 7 0a3.5 3.5 0 1 0 -7 0M876.7 805.2a3.5 3.5 0 1 0 7 0a3.5 3.5 0 1 0 -7 0M880.6 763.7a3.5 3.5 0 1 0 7 0a3.5 3.5 0 1 0 -7 0M884.0 736.6a3.5 3.5 0 1 0 7 0a3.5 3.5 0 1 0 -7 0M887.3 698.3a3.5 3.5 0 1 0 7 0a3.5 3.5 0 1 0 -7 0M891.0 663.3a3.5 3.5 0 1 0 7 0a3.5 3.5 0 1 0 -7 0" stroke="#3192c0" stroke-width="1.3" fill="none" clip-path="url(#clipll)"/><rect x="463" y="645" width="431.5" height="506.5999999999999" fill="none" stroke="#c4c4c4" stroke-width="2.2"/><rect x="462" y="644" width="8" height="508.5999999999999" fill="#c6c6c6"/><path d="M465.3 646 V1149.6" stroke="#80f8f8" stroke-width="1.3" stroke-dasharray="6 1.2"/><clipPath id="clipfr"><rect x="938" y="645.3" width="425" height="504.5"/></clipPath><path d="M1030.0 644.3 V1150.8 M1117.6 644.3 V1150.8 M1205.2 644.3 V1150.8 M1292.8 644.3 V1150.8 M937 667.0 H1364 M937 751.0 H1364 M937 835.0 H1364 M937 919.0 H1364 M937 1003.0 H1364 M937 1087.0 H1364" stroke="#cfcfcf" stroke-width="1.15" fill="none"/><path d="M938.8 1042.6a3.5 3.5 0 1 0 7 0a3.5 3.5 0 1 0 -7 0M942.5 1015.7a3.5 3.5 0 1 0 7 0a3.5 3.5 0 1 0 -7 0M945.8 991.6a3.5 3.5 0 1 0 7 0a3.5 3.5 0 1 0 -7 0M949.5 974.4a3.5 3.5 0 1 0 7 0a3.5 3.5 0 1 0 -7 0M953.0 956.2a3.5 3.5 0 1 0 7 0a3.5 3.5 0 1 0 -7 0M956.3 933.9a3.5 3.5 0 1 0 7 0a3.5 3.5 0 1 0 -7 0M959.8 914.8a3.5 3.5 0 1 0 7 0a3.5 3.5 0 1 0 -7 0M963.5 896.9a3.5 3.5 0 1 0 7 0a3.5 3.5 0 1 0 -7 0M966.8 884.9a3.5 3.5 0 1 0 7 0a3.5 3.5 0 1 0 -7 0M970.3 870.0a3.5 3.5 0 1 0 7 0a3.5 3.5 0 1 0 -7 0M974.0 853.9a3.5 3.5 0 1 0 7 0a3.5 3.5 0 1 0 -7 0M977.6 841.7a3.5 3.5 0 1 0 7 0a3.5 3.5 0 1 0 -7 0M981.0 829.5a3.5 3.5 0 1 0 7 0a3.5 3.5 0 1 0 -7 0M984.4 819.7a3.5 3.5 0 1 0 7 0a3.5 3.5 0 1 0 -7 0M988.1 811.1a3.5 3.5 0 1 0 7 0a3.5 3.5 0 1 0 -7 0M991.3 803.0a3.5 3.5 0 1 0 7 0a3.5 3.5 0 1 0 -7 0M994.8 795.1a3.5 3.5 0 1 0 7 0a3.5 3.5 0 1 0 -7 0M998.4 789.9a3.5 3.5 0 1 0 7 0a3.5 3.5 0 1 0 -7 0M1001.9 785.0a3.5 3.5 0 1 0 7 0a3.5 3.5 0 1 0 -7 0M1005.3 781.2a3.5 3.5 0 1 0 7 0a3.5 3.5 0 1 0 -7 0M1008.8 778.4a3.5 3.5 0 1 0 7 0a3.5 3.5 0 1 0 -7 0M1012.4 776.7a3.5 3.5 0 1 0 7 0a3.5 3.5 0 1 0 -7 0M1016.0 776.2a3.5 3.5 0 1 0 7 0a3.5 3.5 0 1 0 -7 0M1019.3 776.3a3.5 3.5 0 1 0 7 0a3.5 3.5 0 1 0 -7 0M1022.9 776.2a3.5 3.5 0 1 0 7 0a3.5 3.5 0 1 0 -7 0M1026.7 776.0a3.5 3.5 0 1 0 7 0a3.5 3.5 0 1 0 -7 0M1030.2 775.9a3.5 3.5 0 1 0 7 0a3.5 3.5 0 1 0 -7 0M1033.6 776.4a3.5 3.5 0 1 0 7 0a3.5 3.5 0 1 0 -7 0M1037.1 777.3a3.5 3.5 0 1 0 7 0a3.5 3.5 0 1 0 -7 0M1040.6 776.2a3.5 3.5 0 1 0 7 0a3.5 3.5 0 1 0 -7 0M1043.9 777.3a3.5 3.5 0 1 0 7 0a3.5 3.5 0 1 0 -7 0M1047.3 776.7a3.5 3.5 0 1 0 7 0a3.5 3.5 0 1 0 -7 0M1050.8 777.4a3.5 3.5 0 1 0 7 0a3.5 3.5 0 1 0 -7 0M1054.7 776.8a3.5 3.5 0 1 0 7 0a3.5 3.5 0 1 0 -7 0M1058.1 777.2a3.5 3.5 0 1 0 7 0a3.5 3.5 0 1 0 -7 0M1061.7 776.8a3.5 3.5 0 1 0 7 0a3.5 3.5 0 1 0 -7 0M1064.8 775.4a3.5 3.5 0 1 0 7 0a3.5 3.5 0 1 0 -7 0M1068.6 777.0a3.5 3.5 0 1 0 7 0a3.5 3.5 0 1 0 -7 0M1072.0 776.6a3.5 3.5 0 1 0 7 0a3.5 3.5 0 1 0 -7 0M1075.7 777.2a3.5 3.5 0 1 0 7 0a3.5 3.5 0 1 0 -7 0M1079.0 776.4a3.5 3.5 0 1 0 7 0a3.5 3.5 0 1 0 -7 0M1082.8 775.5a3.5 3.5 0 1 0 7 0a3.5 3.5 0 1 0 -7 0M1085.9 775.5a3.5 3.5 0 1 0 7 0a3.5 3.5 0 1 0 -7 0M1089.6 774.9a3.5 3.5 0 1 0 7 0a3.5 3.5 0 1 0 -7 0M1093.2 774.6a3.5 3.5 0 1 0 7 0a3.5 3.5 0 1 0 -7 0M1096.7 774.8a3.5 3.5 0 1 0 7 0a3.5 3.5 0 1 0 -7 0M1100.2 773.6a3.5 3.5 0 1 0 7 0a3.5 3.5 0 1 0 -7 0M1103.7 773.9a3.5 3.5 0 1 0 7 0a3.5 3.5 0 1 0 -7 0M1107.2 772.2a3.5 3.5 0 1 0 7 0a3.5 3.5 0 1 0 -7 0M1110.8 773.0a3.5 3.5 0 1 0 7 0a3.5 3.5 0 1 0 -7 0M1114.0 772.0a3.5 3.5 0 1 0 7 0a3.5 3.5 0 1 0 -7 0M1117.7 771.8a3.5 3.5 0 1 0 7 0a3.5 3.5 0 1 0 -7 0M1121.3 770.8a3.5 3.5 0 1 0 7 0a3.5 3.5 0 1 0 -7 0M1124.8 771.0a3.5 3.5 0 1 0 7 0a3.5 3.5 0 1 0 -7 0M1128.1 769.7a3.5 3.5 0 1 0 7 0a3.5 3.5 0 1 0 -7 0M1131.7 769.6a3.5 3.5 0 1 0 7 0a3.5 3.5 0 1 0 -7 0M1135.3 768.4a3.5 3.5 0 1 0 7 0a3.5 3.5 0 1 0 -7 0M1138.7 768.2a3.5 3.5 0 1 0 7 0a3.5 3.5 0 1 0 -7 0M1142.2 767.8a3.5 3.5 0 1 0 7 0a3.5 3.5 0 1 0 -7 0M1145.6 767.7a3.5 3.5 0 1 0 7 0a3.5 3.5 0 1 0 -7 0M1149.2 766.4a3.5 3.5 0 1 0 7 0a3.5 3.5 0 1 0 -7 0M1152.7 766.0a3.5 3.5 0 1 0 7 0a3.5 3.5 0 1 0 -7 0M1156.0 764.9a3.5 3.5 0 1 0 7 0a3.5 3.5 0 1 0 -7 0M1159.7 765.3a3.5 3.5 0 1 0 7 0a3.5 3.5 0 1 0 -7 0M1163.4 764.3a3.5 3.5 0 1 0 7 0a3.5 3.5 0 1 0 -7 0M1166.8 763.8a3.5 3.5 0 1 0 7 0a3.5 3.5 0 1 0 -7 0M1170.3 763.3a3.5 3.5 0 1 0 7 0a3.5 3.5 0 1 0 -7 0M1173.6 762.8a3.5 3.5 0 1 0 7 0a3.5 3.5 0 1 0 -7 0M1177.3 762.3a3.5 3.5 0 1 0 7 0a3.5 3.5 0 1 0 -7 0M1180.7 762.1a3.5 3.5 0 1 0 7 0a3.5 3.5 0 1 0 -7 0M1184.2 761.7a3.5 3.5 0 1 0 7 0a3.5 3.5 0 1 0 -7 0M1187.8 760.9a3.5 3.5 0 1 0 7 0a3.5 3.5 0 1 0 -7 0M1191.0 759.9a3.5 3.5 0 1 0 7 0a3.5 3.5 0 1 0 -7 0M1194.8 758.9a3.5 3.5 0 1 0 7 0a3.5 3.5 0 1 0 -7 0M1198.0 758.6a3.5 3.5 0 1 0 7 0a3.5 3.5 0 1 0 -7 0M1201.7 758.0a3.5 3.5 0 1 0 7 0a3.5 3.5 0 1 0 -7 0M1205.2 757.7a3.5 3.5 0 1 0 7 0a3.5 3.5 0 1 0 -7 0M1208.6 757.3a3.5 3.5 0 1 0 7 0a3.5 3.5 0 1 0 -7 0M1212.3 757.1a3.5 3.5 0 1 0 7 0a3.5 3.5 0 1 0 -7 0M1215.7 756.4a3.5 3.5 0 1 0 7 0a3.5 3.5 0 1 0 -7 0M1219.3 755.5a3.5 3.5 0 1 0 7 0a3.5 3.5 0 1 0 -7 0M1222.9 756.0a3.5 3.5 0 1 0 7 0a3.5 3.5 0 1 0 -7 0M1226.1 755.8a3.5 3.5 0 1 0 7 0a3.5 3.5 0 1 0 -7 0M1229.5 754.1a3.5 3.5 0 1 0 7 0a3.5 3.5 0 1 0 -7 0M1233.2 754.5a3.5 3.5 0 1 0 7 0a3.5 3.5 0 1 0 -7 0M1236.8 753.7a3.5 3.5 0 1 0 7 0a3.5 3.5 0 1 0 -7 0M1240.1 753.3a3.5 3.5 0 1 0 7 0a3.5 3.5 0 1 0 -7 0M1243.6 753.8a3.5 3.5 0 1 0 7 0a3.5 3.5 0 1 0 -7 0M1247.4 751.7a3.5 3.5 0 1 0 7 0a3.5 3.5 0 1 0 -7 0M1250.8 751.6a3.5 3.5 0 1 0 7 0a3.5 3.5 0 1 0 -7 0M1254.2 751.9a3.5 3.5 0 1 0 7 0a3.5 3.5 0 1 0 -7 0M1257.9 751.2a3.5 3.5 0 1 0 7 0a3.5 3.5 0 1 0 -7 0M1261.2 751.1a3.5 3.5 0 1 0 7 0a3.5 3.5 0 1 0 -7 0M1264.8 751.1a3.5 3.5 0 1 0 7 0a3.5 3.5 0 1 0 -7 0M1268.1 750.3a3.5 3.5 0 1 0 7 0a3.5 3.5 0 1 0 -7 0M1271.8 749.6a3.5 3.5 0 1 0 7 0a3.5 3.5 0 1 0 -7 0M1275.4 748.9a3.5 3.5 0 1 0 7 0a3.5 3.5 0 1 0 -7 0M1279.0 748.6a3.5 3.5 0 1 0 7 0a3.5 3.5 0 1 0 -7 0M1282.5 748.5a3.5 3.5 0 1 0 7 0a3.5 3.5 0 1 0 -7 0M1285.7 747.4a3.5 3.5 0 1 0 7 0a3.5 3.5 0 1 0 -7 0M1289.3 748.0a3.5 3.5 0 1 0 7 0a3.5 3.5 0 1 0 -7 0M1292.7 746.6a3.5 3.5 0 1 0 7 0a3.5 3.5 0 1 0 -7 0M1296.2 745.7a3.5 3.5 0 1 0 7 0a3.5 3.5 0 1 0 -7 0M1299.8 745.7a3.5 3.5 0 1 0 7 0a3.5 3.5 0 1 0 -7 0M1303.5 745.7a3.5 3.5 0 1 0 7 0a3.5 3.5 0 1 0 -7 0M1307.0 744.6a3.5 3.5 0 1 0 7 0a3.5 3.5 0 1 0 -7 0M1310.4 743.4a3.5 3.5 0 1 0 7 0a3.5 3.5 0 1 0 -7 0M1314.0 742.6a3.5 3.5 0 1 0 7 0a3.5 3.5 0 1 0 -7 0M1317.2 741.4a3.5 3.5 0 1 0 7 0a3.5 3.5 0 1 0 -7 0M1320.7 741.9a3.5 3.5 0 1 0 7 0a3.5 3.5 0 1 0 -7 0M1324.3 740.8a3.5 3.5 0 1 0 7 0a3.5 3.5 0 1 0 -7 0M1327.7 739.8a3.5 3.5 0 1 0 7 0a3.5 3.5 0 1 0 -7 0M1331.2 739.4a3.5 3.5 0 1 0 7 0a3.5 3.5 0 1 0 -7 0M1334.8 739.8a3.5 3.5 0 1 0 7 0a3.5 3.5 0 1 0 -7 0M1338.4 737.6a3.5 3.5 0 1 0 7 0a3.5 3.5 0 1 0 -7 0M1341.9 736.2a3.5 3.5 0 1 0 7 0a3.5 3.5 0 1 0 -7 0M1345.3 736.1a3.5 3.5 0 1 0 7 0a3.5 3.5 0 1 0 -7 0M1349.0 736.4a3.5 3.5 0 1 0 7 0a3.5 3.5 0 1 0 -7 0M1352.6 735.4a3.5 3.5 0 1 0 7 0a3.5 3.5 0 1 0 -7 0M1355.9 734.4a3.5 3.5 0 1 0 7 0a3.5 3.5 0 1 0 -7 0M1359.2 732.7a3.5 3.5 0 1 0 7 0a3.5 3.5 0 1 0 -7 0" stroke="#3aaedc" stroke-width="1.3" fill="none" clip-path="url(#clipfr)"/><path d="M938.9 1121.9a3.5 3.5 0 1 0 7 0a3.5 3.5 0 1 0 -7 0M942.6 1121.1a3.5 3.5 0 1 0 7 0a3.5 3.5 0 1 0 -7 0M946.1 1122.0a3.5 3.5 0 1 0 7 0a3.5 3.5 0 1 0 -7 0M949.3 1121.4a3.5 3.5 0 1 0 7 0a3.5 3.5 0 1 0 -7 0M952.9 1122.0a3.5 3.5 0 1 0 7 0a3.5 3.5 0 1 0 -7 0M956.3 1122.1a3.5 3.5 0 1 0 7 0a3.5 3.5 0 1 0 -7 0M959.9 1117.9a3.5 3.5 0 1 0 7 0a3.5 3.5 0 1 0 -7 0M963.6 1110.3a3.5 3.5 0 1 0 7 0a3.5 3.5 0 1 0 -7 0M967.1 1102.1a3.5 3.5 0 1 0 7 0a3.5 3.5 0 1 0 -7 0M970.4 1088.0a3.5 3.5 0 1 0 7 0a3.5 3.5 0 1 0 -7 0M973.9 1075.4a3.5 3.5 0 1 0 7 0a3.5 3.5 0 1 0 -7 0M977.3 1056.4a3.5 3.5 0 1 0 7 0a3.5 3.5 0 1 0 -7 0M981.0 1052.1a3.5 3.5 0 1 0 7 0a3.5 3.5 0 1 0 -7 0M984.6 1039.8a3.5 3.5 0 1 0 7 0a3.5 3.5 0 1 0 -7 0M987.8 1022.6a3.5 3.5 0 1 0 7 0a3.5 3.5 0 1 0 -7 0M991.6 1003.8a3.5 3.5 0 1 0 7 0a3.5 3.5 0 1 0 -7 0M994.8 994.3a3.5 3.5 0 1 0 7 0a3.5 3.5 0 1 0 -7 0M998.3 987.7a3.5 3.5 0 1 0 7 0a3.5 3.5 0 1 0 -7 0M1001.9 964.6a3.5 3.5 0 1 0 7 0a3.5 3.5 0 1 0 -7 0M1005.6 955.8a3.5 3.5 0 1 0 7 0a3.5 3.5 0 1 0 -7 0M1008.9 942.5a3.5 3.5 0 1 0 7 0a3.5 3.5 0 1 0 -7 0M1012.4 918.4a3.5 3.5 0 1 0 7 0a3.5 3.5 0 1 0 -7 0M1016.0 910.2a3.5 3.5 0 1 0 7 0a3.5 3.5 0 1 0 -7 0M1019.3 894.8a3.5 3.5 0 1 0 7 0a3.5 3.5 0 1 0 -7 0M1023.1 880.6a3.5 3.5 0 1 0 7 0a3.5 3.5 0 1 0 -7 0M1026.3 870.6a3.5 3.5 0 1 0 7 0a3.5 3.5 0 1 0 -7 0M1030.0 859.0a3.5 3.5 0 1 0 7 0a3.5 3.5 0 1 0 -7 0M1033.4 850.5a3.5 3.5 0 1 0 7 0a3.5 3.5 0 1 0 -7 0M1036.9 838.7a3.5 3.5 0 1 0 7 0a3.5 3.5 0 1 0 -7 0M1040.5 830.0a3.5 3.5 0 1 0 7 0a3.5 3.5 0 1 0 -7 0M1044.0 822.2a3.5 3.5 0 1 0 7 0a3.5 3.5 0 1 0 -7 0M1047.5 816.4a3.5 3.5 0 1 0 7 0a3.5 3.5 0 1 0 -7 0M1051.0 810.7a3.5 3.5 0 1 0 7 0a3.5 3.5 0 1 0 -7 0M1054.5 807.2a3.5 3.5 0 1 0 7 0a3.5 3.5 0 1 0 -7 0M1057.9 804.7a3.5 3.5 0 1 0 7 0a3.5 3.5 0 1 0 -7 0M1061.4 803.9a3.5 3.5 0 1 0 7 0a3.5 3.5 0 1 0 -7 0M1065.1 804.1a3.5 3.5 0 1 0 7 0a3.5 3.5 0 1 0 -7 0M1068.6 803.1a3.5 3.5 0 1 0 7 0a3.5 3.5 0 1 0 -7 0M1072.1 804.1a3.5 3.5 0 1 0 7 0a3.5 3.5 0 1 0 -7 0M1075.7 802.0a3.5 3.5 0 1 0 7 0a3.5 3.5 0 1 0 -7 0M1079.1 802.1a3.5 3.5 0 1 0 7 0a3.5 3.5 0 1 0 -7 0M1082.7 802.4a3.5 3.5 0 1 0 7 0a3.5 3.5 0 1 0 -7 0M1086.0 802.4a3.5 3.5 0 1 0 7 0a3.5 3.5 0 1 0 -7 0M1089.7 802.5a3.5 3.5 0 1 0 7 0a3.5 3.5 0 1 0 -7 0M1093.2 801.4a3.5 3.5 0 1 0 7 0a3.5 3.5 0 1 0 -7 0M1096.7 801.0a3.5 3.5 0 1 0 7 0a3.5 3.5 0 1 0 -7 0M1100.0 801.3a3.5 3.5 0 1 0 7 0a3.5 3.5 0 1 0 -7 0M1103.5 801.7a3.5 3.5 0 1 0 7 0a3.5 3.5 0 1 0 -7 0M1107.3 801.0a3.5 3.5 0 1 0 7 0a3.5 3.5 0 1 0 -7 0M1110.5 800.0a3.5 3.5 0 1 0 7 0a3.5 3.5 0 1 0 -7 0M1114.3 801.1a3.5 3.5 0 1 0 7 0a3.5 3.5 0 1 0 -7 0M1117.8 800.1a3.5 3.5 0 1 0 7 0a3.5 3.5 0 1 0 -7 0M1121.0 798.7a3.5 3.5 0 1 0 7 0a3.5 3.5 0 1 0 -7 0M1124.5 798.1a3.5 3.5 0 1 0 7 0a3.5 3.5 0 1 0 -7 0M1128.2 797.0a3.5 3.5 0 1 0 7 0a3.5 3.5 0 1 0 -7 0M1131.5 796.9a3.5 3.5 0 1 0 7 0a3.5 3.5 0 1 0 -7 0M1135.0 797.2a3.5 3.5 0 1 0 7 0a3.5 3.5 0 1 0 -7 0M1138.8 796.1a3.5 3.5 0 1 0 7 0a3.5 3.5 0 1 0 -7 0M1142.1 795.8a3.5 3.5 0 1 0 7 0a3.5 3.5 0 1 0 -7 0M1145.8 793.8a3.5 3.5 0 1 0 7 0a3.5 3.5 0 1 0 -7 0M1149.0 795.1a3.5 3.5 0 1 0 7 0a3.5 3.5 0 1 0 -7 0M1152.6 793.1a3.5 3.5 0 1 0 7 0a3.5 3.5 0 1 0 -7 0M1156.2 793.2a3.5 3.5 0 1 0 7 0a3.5 3.5 0 1 0 -7 0M1159.4 792.4a3.5 3.5 0 1 0 7 0a3.5 3.5 0 1 0 -7 0M1163.0 792.4a3.5 3.5 0 1 0 7 0a3.5 3.5 0 1 0 -7 0M1166.7 790.6a3.5 3.5 0 1 0 7 0a3.5 3.5 0 1 0 -7 0M1170.3 791.3a3.5 3.5 0 1 0 7 0a3.5 3.5 0 1 0 -7 0M1173.9 790.3a3.5 3.5 0 1 0 7 0a3.5 3.5 0 1 0 -7 0M1177.0 789.5a3.5 3.5 0 1 0 7 0a3.5 3.5 0 1 0 -7 0M1180.7 789.6a3.5 3.5 0 1 0 7 0a3.5 3.5 0 1 0 -7 0M1184.3 788.3a3.5 3.5 0 1 0 7 0a3.5 3.5 0 1 0 -7 0M1187.7 787.9a3.5 3.5 0 1 0 7 0a3.5 3.5 0 1 0 -7 0M1191.3 787.9a3.5 3.5 0 1 0 7 0a3.5 3.5 0 1 0 -7 0M1194.6 785.9a3.5 3.5 0 1 0 7 0a3.5 3.5 0 1 0 -7 0M1198.0 786.0a3.5 3.5 0 1 0 7 0a3.5 3.5 0 1 0 -7 0M1201.5 784.8a3.5 3.5 0 1 0 7 0a3.5 3.5 0 1 0 -7 0M1205.0 784.7a3.5 3.5 0 1 0 7 0a3.5 3.5 0 1 0 -7 0M1208.7 784.3a3.5 3.5 0 1 0 7 0a3.5 3.5 0 1 0 -7 0M1212.2 783.6a3.5 3.5 0 1 0 7 0a3.5 3.5 0 1 0 -7 0M1215.7 783.4a3.5 3.5 0 1 0 7 0a3.5 3.5 0 1 0 -7 0M1219.1 783.2a3.5 3.5 0 1 0 7 0a3.5 3.5 0 1 0 -7 0M1222.6 782.1a3.5 3.5 0 1 0 7 0a3.5 3.5 0 1 0 -7 0M1226.1 781.4a3.5 3.5 0 1 0 7 0a3.5 3.5 0 1 0 -7 0M1229.9 781.5a3.5 3.5 0 1 0 7 0a3.5 3.5 0 1 0 -7 0M1233.4 781.7a3.5 3.5 0 1 0 7 0a3.5 3.5 0 1 0 -7 0M1236.9 780.7a3.5 3.5 0 1 0 7 0a3.5 3.5 0 1 0 -7 0M1240.1 780.8a3.5 3.5 0 1 0 7 0a3.5 3.5 0 1 0 -7 0M1243.6 780.4a3.5 3.5 0 1 0 7 0a3.5 3.5 0 1 0 -7 0M1247.4 778.7a3.5 3.5 0 1 0 7 0a3.5 3.5 0 1 0 -7 0M1250.7 777.9a3.5 3.5 0 1 0 7 0a3.5 3.5 0 1 0 -7 0M1254.4 777.5a3.5 3.5 0 1 0 7 0a3.5 3.5 0 1 0 -7 0M1257.7 777.5a3.5 3.5 0 1 0 7 0a3.5 3.5 0 1 0 -7 0M1261.3 776.6a3.5 3.5 0 1 0 7 0a3.5 3.5 0 1 0 -7 0M1264.8 776.1a3.5 3.5 0 1 0 7 0a3.5 3.5 0 1 0 -7 0M1268.2 776.2a3.5 3.5 0 1 0 7 0a3.5 3.5 0 1 0 -7 0M1271.8 775.9a3.5 3.5 0 1 0 7 0a3.5 3.5 0 1 0 -7 0M1275.1 774.6a3.5 3.5 0 1 0 7 0a3.5 3.5 0 1 0 -7 0M1278.9 774.3a3.5 3.5 0 1 0 7 0a3.5 3.5 0 1 0 -7 0M1282.4 773.5a3.5 3.5 0 1 0 7 0a3.5 3.5 0 1 0 -7 0M1285.7 773.5a3.5 3.5 0 1 0 7 0a3.5 3.5 0 1 0 -7 0M1289.3 771.7a3.5 3.5 0 1 0 7 0a3.5 3.5 0 1 0 -7 0M1292.9 771.5a3.5 3.5 0 1 0 7 0a3.5 3.5 0 1 0 -7 0M1296.3 771.3a3.5 3.5 0 1 0 7 0a3.5 3.5 0 1 0 -7 0M1299.7 769.8a3.5 3.5 0 1 0 7 0a3.5 3.5 0 1 0 -7 0M1303.2 770.9a3.5 3.5 0 1 0 7 0a3.5 3.5 0 1 0 -7 0M1306.8 769.9a3.5 3.5 0 1 0 7 0a3.5 3.5 0 1 0 -7 0M1310.1 768.7a3.5 3.5 0 1 0 7 0a3.5 3.5 0 1 0 -7 0M1314.0 767.9a3.5 3.5 0 1 0 7 0a3.5 3.5 0 1 0 -7 0M1317.5 766.9a3.5 3.5 0 1 0 7 0a3.5 3.5 0 1 0 -7 0M1320.9 767.5a3.5 3.5 0 1 0 7 0a3.5 3.5 0 1 0 -7 0M1324.5 766.2a3.5 3.5 0 1 0 7 0a3.5 3.5 0 1 0 -7 0M1327.9 764.4a3.5 3.5 0 1 0 7 0a3.5 3.5 0 1 0 -7 0M1331.3 764.8a3.5 3.5 0 1 0 7 0a3.5 3.5 0 1 0 -7 0M1334.9 764.8a3.5 3.5 0 1 0 7 0a3.5 3.5 0 1 0 -7 0M1338.4 763.8a3.5 3.5 0 1 0 7 0a3.5 3.5 0 1 0 -7 0M1342.1 762.9a3.5 3.5 0 1 0 7 0a3.5 3.5 0 1 0 -7 0M1345.5 763.1a3.5 3.5 0 1 0 7 0a3.5 3.5 0 1 0 -7 0M1348.8 762.6a3.5 3.5 0 1 0 7 0a3.5 3.5 0 1 0 -7 0M1352.5 761.3a3.5 3.5 0 1 0 7 0a3.5 3.5 0 1 0 -7 0M1356.0 760.1a3.5 3.5 0 1 0 7 0a3.5 3.5 0 1 0 -7 0M1359.5 759.8a3.5 3.5 0 1 0 7 0a3.5 3.5 0 1 0 -7 0" stroke="#8a94f2" stroke-width="1.3" fill="none" clip-path="url(#clipfr)"/><path d="M939.0 1123.7a3.5 3.5 0 1 0 7 0a3.5 3.5 0 1 0 -7 0M942.3 1124.4a3.5 3.5 0 1 0 7 0a3.5 3.5 0 1 0 -7 0M945.8 1122.7a3.5 3.5 0 1 0 7 0a3.5 3.5 0 1 0 -7 0M949.6 1124.3a3.5 3.5 0 1 0 7 0a3.5 3.5 0 1 0 -7 0M953.1 1123.8a3.5 3.5 0 1 0 7 0a3.5 3.5 0 1 0 -7 0M956.6 1124.3a3.5 3.5 0 1 0 7 0a3.5 3.5 0 1 0 -7 0M959.7 1123.1a3.5 3.5 0 1 0 7 0a3.5 3.5 0 1 0 -7 0M963.2 1123.6a3.5 3.5 0 1 0 7 0a3.5 3.5 0 1 0 -7 0M966.8 1122.9a3.5 3.5 0 1 0 7 0a3.5 3.5 0 1 0 -7 0M970.4 1123.0a3.5 3.5 0 1 0 7 0a3.5 3.5 0 1 0 -7 0M974.0 1123.0a3.5 3.5 0 1 0 7 0a3.5 3.5 0 1 0 -7 0M977.3 1121.9a3.5 3.5 0 1 0 7 0a3.5 3.5 0 1 0 -7 0M981.0 1121.8a3.5 3.5 0 1 0 7 0a3.5 3.5 0 1 0 -7 0M984.3 1122.2a3.5 3.5 0 1 0 7 0a3.5 3.5 0 1 0 -7 0M987.8 1122.6a3.5 3.5 0 1 0 7 0a3.5 3.5 0 1 0 -7 0M991.5 1122.6a3.5 3.5 0 1 0 7 0a3.5 3.5 0 1 0 -7 0M995.0 1121.6a3.5 3.5 0 1 0 7 0a3.5 3.5 0 1 0 -7 0M998.5 1120.2a3.5 3.5 0 1 0 7 0a3.5 3.5 0 1 0 -7 0M1001.9 1121.8a3.5 3.5 0 1 0 7 0a3.5 3.5 0 1 0 -7 0M1005.5 1121.9a3.5 3.5 0 1 0 7 0a3.5 3.5 0 1 0 -7 0M1008.9 1121.7a3.5 3.5 0 1 0 7 0a3.5 3.5 0 1 0 -7 0M1012.4 1121.8a3.5 3.5 0 1 0 7 0a3.5 3.5 0 1 0 -7 0M1016.1 1121.6a3.5 3.5 0 1 0 7 0a3.5 3.5 0 1 0 -7 0M1019.6 1120.9a3.5 3.5 0 1 0 7 0a3.5 3.5 0 1 0 -7 0M1022.8 1114.4a3.5 3.5 0 1 0 7 0a3.5 3.5 0 1 0 -7 0M1026.3 1106.9a3.5 3.5 0 1 0 7 0a3.5 3.5 0 1 0 -7 0M1030.1 1095.8a3.5 3.5 0 1 0 7 0a3.5 3.5 0 1 0 -7 0M1033.6 1086.1a3.5 3.5 0 1 0 7 0a3.5 3.5 0 1 0 -7 0M1037.1 1058.8a3.5 3.5 0 1 0 7 0a3.5 3.5 0 1 0 -7 0M1040.4 1040.5a3.5 3.5 0 1 0 7 0a3.5 3.5 0 1 0 -7 0M1044.0 1026.9a3.5 3.5 0 1 0 7 0a3.5 3.5 0 1 0 -7 0M1047.4 1003.5a3.5 3.5 0 1 0 7 0a3.5 3.5 0 1 0 -7 0M1051.2 974.8a3.5 3.5 0 1 0 7 0a3.5 3.5 0 1 0 -7 0M1054.5 946.7a3.5 3.5 0 1 0 7 0a3.5 3.5 0 1 0 -7 0M1058.1 925.7a3.5 3.5 0 1 0 7 0a3.5 3.5 0 1 0 -7 0M1061.7 904.7a3.5 3.5 0 1 0 7 0a3.5 3.5 0 1 0 -7 0M1065.0 884.0a3.5 3.5 0 1 0 7 0a3.5 3.5 0 1 0 -7 0M1068.6 860.2a3.5 3.5 0 1 0 7 0a3.5 3.5 0 1 0 -7 0M1072.2 840.3a3.5 3.5 0 1 0 7 0a3.5 3.5 0 1 0 -7 0M1075.7 816.4a3.5 3.5 0 1 0 7 0a3.5 3.5 0 1 0 -7 0M1079.0 803.9a3.5 3.5 0 1 0 7 0a3.5 3.5 0 1 0 -7 0M1082.5 786.0a3.5 3.5 0 1 0 7 0a3.5 3.5 0 1 0 -7 0M1085.9 769.8a3.5 3.5 0 1 0 7 0a3.5 3.5 0 1 0 -7 0M1089.7 758.3a3.5 3.5 0 1 0 7 0a3.5 3.5 0 1 0 -7 0M1092.9 747.5a3.5 3.5 0 1 0 7 0a3.5 3.5 0 1 0 -7 0M1096.4 740.3a3.5 3.5 0 1 0 7 0a3.5 3.5 0 1 0 -7 0M1100.1 735.5a3.5 3.5 0 1 0 7 0a3.5 3.5 0 1 0 -7 0M1103.6 733.9a3.5 3.5 0 1 0 7 0a3.5 3.5 0 1 0 -7 0M1107.2 733.7a3.5 3.5 0 1 0 7 0a3.5 3.5 0 1 0 -7 0M1110.5 732.8a3.5 3.5 0 1 0 7 0a3.5 3.5 0 1 0 -7 0M1114.2 730.5a3.5 3.5 0 1 0 7 0a3.5 3.5 0 1 0 -7 0M1117.4 730.8a3.5 3.5 0 1 0 7 0a3.5 3.5 0 1 0 -7 0M1121.0 730.3a3.5 3.5 0 1 0 7 0a3.5 3.5 0 1 0 -7 0M1124.7 729.7a3.5 3.5 0 1 0 7 0a3.5 3.5 0 1 0 -7 0M1127.9 729.4a3.5 3.5 0 1 0 7 0a3.5 3.5 0 1 0 -7 0M1131.5 728.7a3.5 3.5 0 1 0 7 0a3.5 3.5 0 1 0 -7 0M1135.2 728.9a3.5 3.5 0 1 0 7 0a3.5 3.5 0 1 0 -7 0M1138.7 728.4a3.5 3.5 0 1 0 7 0a3.5 3.5 0 1 0 -7 0M1142.0 727.4a3.5 3.5 0 1 0 7 0a3.5 3.5 0 1 0 -7 0M1145.5 727.6a3.5 3.5 0 1 0 7 0a3.5 3.5 0 1 0 -7 0M1149.1 727.6a3.5 3.5 0 1 0 7 0a3.5 3.5 0 1 0 -7 0M1152.7 726.6a3.5 3.5 0 1 0 7 0a3.5 3.5 0 1 0 -7 0M1156.1 726.3a3.5 3.5 0 1 0 7 0a3.5 3.5 0 1 0 -7 0M1159.5 725.3a3.5 3.5 0 1 0 7 0a3.5 3.5 0 1 0 -7 0M1163.2 725.5a3.5 3.5 0 1 0 7 0a3.5 3.5 0 1 0 -7 0M1166.7 725.2a3.5 3.5 0 1 0 7 0a3.5 3.5 0 1 0 -7 0M1170.3 724.4a3.5 3.5 0 1 0 7 0a3.5 3.5 0 1 0 -7 0M1173.9 723.0a3.5 3.5 0 1 0 7 0a3.5 3.5 0 1 0 -7 0M1177.3 723.3a3.5 3.5 0 1 0 7 0a3.5 3.5 0 1 0 -7 0M1180.6 722.8a3.5 3.5 0 1 0 7 0a3.5 3.5 0 1 0 -7 0M1184.3 722.4a3.5 3.5 0 1 0 7 0a3.5 3.5 0 1 0 -7 0M1187.6 721.8a3.5 3.5 0 1 0 7 0a3.5 3.5 0 1 0 -7 0M1191.1 721.0a3.5 3.5 0 1 0 7 0a3.5 3.5 0 1 0 -7 0M1194.6 720.3a3.5 3.5 0 1 0 7 0a3.5 3.5 0 1 0 -7 0M1198.4 721.3a3.5 3.5 0 1 0 7 0a3.5 3.5 0 1 0 -7 0M1201.9 719.4a3.5 3.5 0 1 0 7 0a3.5 3.5 0 1 0 -7 0M1205.1 719.5a3.5 3.5 0 1 0 7 0a3.5 3.5 0 1 0 -7 0M1208.6 719.1a3.5 3.5 0 1 0 7 0a3.5 3.5 0 1 0 -7 0M1212.2 717.3a3.5 3.5 0 1 0 7 0a3.5 3.5 0 1 0 -7 0M1215.7 717.9a3.5 3.5 0 1 0 7 0a3.5 3.5 0 1 0 -7 0M1219.2 716.4a3.5 3.5 0 1 0 7 0a3.5 3.5 0 1 0 -7 0M1222.7 716.2a3.5 3.5 0 1 0 7 0a3.5 3.5 0 1 0 -7 0M1226.1 716.6a3.5 3.5 0 1 0 7 0a3.5 3.5 0 1 0 -7 0M1229.8 715.3a3.5 3.5 0 1 0 7 0a3.5 3.5 0 1 0 -7 0M1233.4 714.7a3.5 3.5 0 1 0 7 0a3.5 3.5 0 1 0 -7 0M1236.8 714.5a3.5 3.5 0 1 0 7 0a3.5 3.5 0 1 0 -7 0M1240.4 715.0a3.5 3.5 0 1 0 7 0a3.5 3.5 0 1 0 -7 0M1243.8 713.5a3.5 3.5 0 1 0 7 0a3.5 3.5 0 1 0 -7 0M1247.1 712.8a3.5 3.5 0 1 0 7 0a3.5 3.5 0 1 0 -7 0M1250.9 712.7a3.5 3.5 0 1 0 7 0a3.5 3.5 0 1 0 -7 0M1254.4 710.8a3.5 3.5 0 1 0 7 0a3.5 3.5 0 1 0 -7 0M1257.7 711.2a3.5 3.5 0 1 0 7 0a3.5 3.5 0 1 0 -7 0M1261.1 710.7a3.5 3.5 0 1 0 7 0a3.5 3.5 0 1 0 -7 0M1264.8 710.1a3.5 3.5 0 1 0 7 0a3.5 3.5 0 1 0 -7 0M1268.3 709.7a3.5 3.5 0 1 0 7 0a3.5 3.5 0 1 0 -7 0M1271.8 709.2a3.5 3.5 0 1 0 7 0a3.5 3.5 0 1 0 -7 0M1275.5 708.2a3.5 3.5 0 1 0 7 0a3.5 3.5 0 1 0 -7 0M1278.9 707.5a3.5 3.5 0 1 0 7 0a3.5 3.5 0 1 0 -7 0M1282.4 707.3a3.5 3.5 0 1 0 7 0a3.5 3.5 0 1 0 -7 0M1285.6 706.6a3.5 3.5 0 1 0 7 0a3.5 3.5 0 1 0 -7 0M1289.3 706.6a3.5 3.5 0 1 0 7 0a3.5 3.5 0 1 0 -7 0M1292.9 705.2a3.5 3.5 0 1 0 7 0a3.5 3.5 0 1 0 -7 0M1296.1 705.3a3.5 3.5 0 1 0 7 0a3.5 3.5 0 1 0 -7 0M1299.6 704.3a3.5 3.5 0 1 0 7 0a3.5 3.5 0 1 0 -7 0M1303.4 704.3a3.5 3.5 0 1 0 7 0a3.5 3.5 0 1 0 -7 0M1307.0 703.6a3.5 3.5 0 1 0 7 0a3.5 3.5 0 1 0 -7 0M1310.1 702.8a3.5 3.5 0 1 0 7 0a3.5 3.5 0 1 0 -7 0M1313.9 702.9a3.5 3.5 0 1 0 7 0a3.5 3.5 0 1 0 -7 0M1317.2 700.6a3.5 3.5 0 1 0 7 0a3.5 3.5 0 1 0 -7 0M1320.9 701.3a3.5 3.5 0 1 0 7 0a3.5 3.5 0 1 0 -7 0M1324.4 700.8a3.5 3.5 0 1 0 7 0a3.5 3.5 0 1 0 -7 0M1327.7 700.6a3.5 3.5 0 1 0 7 0a3.5 3.5 0 1 0 -7 0M1331.2 699.0a3.5 3.5 0 1 0 7 0a3.5 3.5 0 1 0 -7 0M1335.0 698.6a3.5 3.5 0 1 0 7 0a3.5 3.5 0 1 0 -7 0M1338.4 698.5a3.5 3.5 0 1 0 7 0a3.5 3.5 0 1 0 -7 0M1342.0 698.8a3.5 3.5 0 1 0 7 0a3.5 3.5 0 1 0 -7 0M1345.3 697.9a3.5 3.5 0 1 0 7 0a3.5 3.5 0 1 0 -7 0M1348.8 696.8a3.5 3.5 0 1 0 7 0a3.5 3.5 0 1 0 -7 0M1352.6 696.8a3.5 3.5 0 1 0 7 0a3.5 3.5 0 1 0 -7 0M1355.9 696.6a3.5 3.5 0 1 0 7 0a3.5 3.5 0 1 0 -7 0M1359.4 696.1a3.5 3.5 0 1 0 7 0a3.5 3.5 0 1 0 -7 0" stroke="#2c80c0" stroke-width="1.3" fill="none" clip-path="url(#clipfr)"/><path d="M939.0 1126.1a3.5 3.5 0 1 0 7 0a3.5 3.5 0 1 0 -7 0M942.2 1126.4a3.5 3.5 0 1 0 7 0a3.5 3.5 0 1 0 -7 0M945.9 1125.6a3.5 3.5 0 1 0 7 0a3.5 3.5 0 1 0 -7 0M949.4 1125.6a3.5 3.5 0 1 0 7 0a3.5 3.5 0 1 0 -7 0M953.1 1126.4a3.5 3.5 0 1 0 7 0a3.5 3.5 0 1 0 -7 0M956.6 1125.9a3.5 3.5 0 1 0 7 0a3.5 3.5 0 1 0 -7 0M960.0 1124.2a3.5 3.5 0 1 0 7 0a3.5 3.5 0 1 0 -7 0M963.2 1125.3a3.5 3.5 0 1 0 7 0a3.5 3.5 0 1 0 -7 0M966.9 1125.6a3.5 3.5 0 1 0 7 0a3.5 3.5 0 1 0 -7 0M970.5 1124.0a3.5 3.5 0 1 0 7 0a3.5 3.5 0 1 0 -7 0M973.8 1125.4a3.5 3.5 0 1 0 7 0a3.5 3.5 0 1 0 -7 0M977.5 1123.0a3.5 3.5 0 1 0 7 0a3.5 3.5 0 1 0 -7 0M980.9 1125.0a3.5 3.5 0 1 0 7 0a3.5 3.5 0 1 0 -7 0M984.2 1124.4a3.5 3.5 0 1 0 7 0a3.5 3.5 0 1 0 -7 0M988.2 1124.3a3.5 3.5 0 1 0 7 0a3.5 3.5 0 1 0 -7 0M991.6 1123.9a3.5 3.5 0 1 0 7 0a3.5 3.5 0 1 0 -7 0M994.8 1124.5a3.5 3.5 0 1 0 7 0a3.5 3.5 0 1 0 -7 0M998.5 1123.9a3.5 3.5 0 1 0 7 0a3.5 3.5 0 1 0 -7 0M1001.9 1122.9a3.5 3.5 0 1 0 7 0a3.5 3.5 0 1 0 -7 0M1005.4 1122.5a3.5 3.5 0 1 0 7 0a3.5 3.5 0 1 0 -7 0M1009.0 1122.2a3.5 3.5 0 1 0 7 0a3.5 3.5 0 1 0 -7 0M1012.4 1122.2a3.5 3.5 0 1 0 7 0a3.5 3.5 0 1 0 -7 0M1015.9 1122.7a3.5 3.5 0 1 0 7 0a3.5 3.5 0 1 0 -7 0M1019.4 1122.3a3.5 3.5 0 1 0 7 0a3.5 3.5 0 1 0 -7 0M1023.1 1122.1a3.5 3.5 0 1 0 7 0a3.5 3.5 0 1 0 -7 0M1026.4 1122.7a3.5 3.5 0 1 0 7 0a3.5 3.5 0 1 0 -7 0M1029.9 1109.5a3.5 3.5 0 1 0 7 0a3.5 3.5 0 1 0 -7 0M1033.6 1108.8a3.5 3.5 0 1 0 7 0a3.5 3.5 0 1 0 -7 0M1036.9 1108.3a3.5 3.5 0 1 0 7 0a3.5 3.5 0 1 0 -7 0M1040.7 1107.6a3.5 3.5 0 1 0 7 0a3.5 3.5 0 1 0 -7 0M1044.0 1106.4a3.5 3.5 0 1 0 7 0a3.5 3.5 0 1 0 -7 0M1047.6 1106.5a3.5 3.5 0 1 0 7 0a3.5 3.5 0 1 0 -7 0M1051.0 1106.0a3.5 3.5 0 1 0 7 0a3.5 3.5 0 1 0 -7 0M1054.7 1104.3a3.5 3.5 0 1 0 7 0a3.5 3.5 0 1 0 -7 0M1057.9 1103.6a3.5 3.5 0 1 0 7 0a3.5 3.5 0 1 0 -7 0M1061.4 1102.0a3.5 3.5 0 1 0 7 0a3.5 3.5 0 1 0 -7 0M1064.9 1093.6a3.5 3.5 0 1 0 7 0a3.5 3.5 0 1 0 -7 0M1068.6 1084.9a3.5 3.5 0 1 0 7 0a3.5 3.5 0 1 0 -7 0M1072.1 1075.4a3.5 3.5 0 1 0 7 0a3.5 3.5 0 1 0 -7 0M1075.4 1059.7a3.5 3.5 0 1 0 7 0a3.5 3.5 0 1 0 -7 0M1079.0 1045.8a3.5 3.5 0 1 0 7 0a3.5 3.5 0 1 0 -7 0M1082.7 1031.8a3.5 3.5 0 1 0 7 0a3.5 3.5 0 1 0 -7 0M1086.1 1011.6a3.5 3.5 0 1 0 7 0a3.5 3.5 0 1 0 -7 0M1089.4 1000.8a3.5 3.5 0 1 0 7 0a3.5 3.5 0 1 0 -7 0M1093.0 988.9a3.5 3.5 0 1 0 7 0a3.5 3.5 0 1 0 -7 0M1096.4 962.1a3.5 3.5 0 1 0 7 0a3.5 3.5 0 1 0 -7 0M1099.9 940.6a3.5 3.5 0 1 0 7 0a3.5 3.5 0 1 0 -7 0M1103.5 925.4a3.5 3.5 0 1 0 7 0a3.5 3.5 0 1 0 -7 0M1106.9 903.2a3.5 3.5 0 1 0 7 0a3.5 3.5 0 1 0 -7 0M1110.8 886.7a3.5 3.5 0 1 0 7 0a3.5 3.5 0 1 0 -7 0M1114.1 871.2a3.5 3.5 0 1 0 7 0a3.5 3.5 0 1 0 -7 0M1117.6 855.3a3.5 3.5 0 1 0 7 0a3.5 3.5 0 1 0 -7 0M1121.2 833.6a3.5 3.5 0 1 0 7 0a3.5 3.5 0 1 0 -7 0M1124.7 816.8a3.5 3.5 0 1 0 7 0a3.5 3.5 0 1 0 -7 0M1128.3 798.6a3.5 3.5 0 1 0 7 0a3.5 3.5 0 1 0 -7 0M1131.6 780.7a3.5 3.5 0 1 0 7 0a3.5 3.5 0 1 0 -7 0M1135.1 771.1a3.5 3.5 0 1 0 7 0a3.5 3.5 0 1 0 -7 0M1138.6 756.9a3.5 3.5 0 1 0 7 0a3.5 3.5 0 1 0 -7 0M1141.9 743.6a3.5 3.5 0 1 0 7 0a3.5 3.5 0 1 0 -7 0M1145.6 733.5a3.5 3.5 0 1 0 7 0a3.5 3.5 0 1 0 -7 0M1149.2 725.5a3.5 3.5 0 1 0 7 0a3.5 3.5 0 1 0 -7 0M1152.8 718.4a3.5 3.5 0 1 0 7 0a3.5 3.5 0 1 0 -7 0M1156.3 713.3a3.5 3.5 0 1 0 7 0a3.5 3.5 0 1 0 -7 0M1159.7 710.1a3.5 3.5 0 1 0 7 0a3.5 3.5 0 1 0 -7 0M1163.2 709.0a3.5 3.5 0 1 0 7 0a3.5 3.5 0 1 0 -7 0M1166.5 708.9a3.5 3.5 0 1 0 7 0a3.5 3.5 0 1 0 -7 0M1170.1 707.5a3.5 3.5 0 1 0 7 0a3.5 3.5 0 1 0 -7 0M1173.6 707.7a3.5 3.5 0 1 0 7 0a3.5 3.5 0 1 0 -7 0M1177.2 706.8a3.5 3.5 0 1 0 7 0a3.5 3.5 0 1 0 -7 0M1180.5 705.6a3.5 3.5 0 1 0 7 0a3.5 3.5 0 1 0 -7 0M1184.1 705.7a3.5 3.5 0 1 0 7 0a3.5 3.5 0 1 0 -7 0M1187.7 705.1a3.5 3.5 0 1 0 7 0a3.5 3.5 0 1 0 -7 0M1191.3 704.5a3.5 3.5 0 1 0 7 0a3.5 3.5 0 1 0 -7 0M1194.8 704.5a3.5 3.5 0 1 0 7 0a3.5 3.5 0 1 0 -7 0M1198.2 703.4a3.5 3.5 0 1 0 7 0a3.5 3.5 0 1 0 -7 0M1201.6 702.7a3.5 3.5 0 1 0 7 0a3.5 3.5 0 1 0 -7 0M1205.3 703.2a3.5 3.5 0 1 0 7 0a3.5 3.5 0 1 0 -7 0M1208.9 702.3a3.5 3.5 0 1 0 7 0a3.5 3.5 0 1 0 -7 0M1212.2 701.9a3.5 3.5 0 1 0 7 0a3.5 3.5 0 1 0 -7 0M1215.7 701.0a3.5 3.5 0 1 0 7 0a3.5 3.5 0 1 0 -7 0M1219.2 700.5a3.5 3.5 0 1 0 7 0a3.5 3.5 0 1 0 -7 0M1222.6 700.5a3.5 3.5 0 1 0 7 0a3.5 3.5 0 1 0 -7 0M1226.3 699.0a3.5 3.5 0 1 0 7 0a3.5 3.5 0 1 0 -7 0M1229.9 700.2a3.5 3.5 0 1 0 7 0a3.5 3.5 0 1 0 -7 0M1233.2 699.2a3.5 3.5 0 1 0 7 0a3.5 3.5 0 1 0 -7 0M1236.8 698.3a3.5 3.5 0 1 0 7 0a3.5 3.5 0 1 0 -7 0M1240.4 698.3a3.5 3.5 0 1 0 7 0a3.5 3.5 0 1 0 -7 0M1243.6 698.1a3.5 3.5 0 1 0 7 0a3.5 3.5 0 1 0 -7 0M1247.4 697.5a3.5 3.5 0 1 0 7 0a3.5 3.5 0 1 0 -7 0M1250.8 697.0a3.5 3.5 0 1 0 7 0a3.5 3.5 0 1 0 -7 0M1254.1 696.6a3.5 3.5 0 1 0 7 0a3.5 3.5 0 1 0 -7 0M1257.6 695.8a3.5 3.5 0 1 0 7 0a3.5 3.5 0 1 0 -7 0M1261.2 696.6a3.5 3.5 0 1 0 7 0a3.5 3.5 0 1 0 -7 0M1264.8 695.2a3.5 3.5 0 1 0 7 0a3.5 3.5 0 1 0 -7 0M1268.4 695.1a3.5 3.5 0 1 0 7 0a3.5 3.5 0 1 0 -7 0M1271.7 694.6a3.5 3.5 0 1 0 7 0a3.5 3.5 0 1 0 -7 0M1275.5 693.3a3.5 3.5 0 1 0 7 0a3.5 3.5 0 1 0 -7 0M1278.7 693.2a3.5 3.5 0 1 0 7 0a3.5 3.5 0 1 0 -7 0M1282.3 692.9a3.5 3.5 0 1 0 7 0a3.5 3.5 0 1 0 -7 0M1285.6 693.9a3.5 3.5 0 1 0 7 0a3.5 3.5 0 1 0 -7 0M1289.5 692.1a3.5 3.5 0 1 0 7 0a3.5 3.5 0 1 0 -7 0M1292.7 692.5a3.5 3.5 0 1 0 7 0a3.5 3.5 0 1 0 -7 0M1296.5 691.6a3.5 3.5 0 1 0 7 0a3.5 3.5 0 1 0 -7 0M1299.8 690.8a3.5 3.5 0 1 0 7 0a3.5 3.5 0 1 0 -7 0M1303.3 689.1a3.5 3.5 0 1 0 7 0a3.5 3.5 0 1 0 -7 0M1306.8 690.2a3.5 3.5 0 1 0 7 0a3.5 3.5 0 1 0 -7 0M1310.2 688.2a3.5 3.5 0 1 0 7 0a3.5 3.5 0 1 0 -7 0M1314.0 687.3a3.5 3.5 0 1 0 7 0a3.5 3.5 0 1 0 -7 0M1317.5 687.0a3.5 3.5 0 1 0 7 0a3.5 3.5 0 1 0 -7 0M1321.0 686.7a3.5 3.5 0 1 0 7 0a3.5 3.5 0 1 0 -7 0M1324.4 685.7a3.5 3.5 0 1 0 7 0a3.5 3.5 0 1 0 -7 0M1327.7 685.9a3.5 3.5 0 1 0 7 0a3.5 3.5 0 1 0 -7 0M1331.5 685.1a3.5 3.5 0 1 0 7 0a3.5 3.5 0 1 0 -7 0M1334.8 684.2a3.5 3.5 0 1 0 7 0a3.5 3.5 0 1 0 -7 0M1338.5 684.1a3.5 3.5 0 1 0 7 0a3.5 3.5 0 1 0 -7 0M1341.8 683.2a3.5 3.5 0 1 0 7 0a3.5 3.5 0 1 0 -7 0M1345.4 682.4a3.5 3.5 0 1 0 7 0a3.5 3.5 0 1 0 -7 0M1349.0 682.1a3.5 3.5 0 1 0 7 0a3.5 3.5 0 1 0 -7 0M1352.2 680.8a3.5 3.5 0 1 0 7 0a3.5 3.5 0 1 0 -7 0M1355.9 680.8a3.5 3.5 0 1 0 7 0a3.5 3.5 0 1 0 -7 0M1359.2 680.5a3.5 3.5 0 1 0 7 0a3.5 3.5 0 1 0 -7 0" stroke="#1f2f78" stroke-width="1.3" fill="none" clip-path="url(#clipfr)"/><path d="M939.0 1121.9a3.5 3.5 0 1 0 7 0a3.5 3.5 0 1 0 -7 0M942.3 1122.1a3.5 3.5 0 1 0 7 0a3.5 3.5 0 1 0 -7 0M946.0 1120.6a3.5 3.5 0 1 0 7 0a3.5 3.5 0 1 0 -7 0M949.6 1122.0a3.5 3.5 0 1 0 7 0a3.5 3.5 0 1 0 -7 0M952.9 1122.0a3.5 3.5 0 1 0 7 0a3.5 3.5 0 1 0 -7 0M956.2 1122.0a3.5 3.5 0 1 0 7 0a3.5 3.5 0 1 0 -7 0M959.8 1121.9a3.5 3.5 0 1 0 7 0a3.5 3.5 0 1 0 -7 0M963.3 1122.2a3.5 3.5 0 1 0 7 0a3.5 3.5 0 1 0 -7 0M967.0 1121.8a3.5 3.5 0 1 0 7 0a3.5 3.5 0 1 0 -7 0M970.3 1120.5a3.5 3.5 0 1 0 7 0a3.5 3.5 0 1 0 -7 0M973.8 1120.9a3.5 3.5 0 1 0 7 0a3.5 3.5 0 1 0 -7 0M977.3 1120.9a3.5 3.5 0 1 0 7 0a3.5 3.5 0 1 0 -7 0M981.0 1120.5a3.5 3.5 0 1 0 7 0a3.5 3.5 0 1 0 -7 0M984.6 1119.9a3.5 3.5 0 1 0 7 0a3.5 3.5 0 1 0 -7 0M987.9 1120.0a3.5 3.5 0 1 0 7 0a3.5 3.5 0 1 0 -7 0M991.5 1119.8a3.5 3.5 0 1 0 7 0a3.5 3.5 0 1 0 -7 0M995.1 1120.5a3.5 3.5 0 1 0 7 0a3.5 3.5 0 1 0 -7 0M998.5 1120.2a3.5 3.5 0 1 0 7 0a3.5 3.5 0 1 0 -7 0M1001.9 1120.3a3.5 3.5 0 1 0 7 0a3.5 3.5 0 1 0 -7 0M1005.4 1119.8a3.5 3.5 0 1 0 7 0a3.5 3.5 0 1 0 -7 0M1009.2 1120.1a3.5 3.5 0 1 0 7 0a3.5 3.5 0 1 0 -7 0M1012.6 1119.7a3.5 3.5 0 1 0 7 0a3.5 3.5 0 1 0 -7 0M1015.9 1119.4a3.5 3.5 0 1 0 7 0a3.5 3.5 0 1 0 -7 0M1019.6 1119.3a3.5 3.5 0 1 0 7 0a3.5 3.5 0 1 0 -7 0M1022.8 1119.2a3.5 3.5 0 1 0 7 0a3.5 3.5 0 1 0 -7 0M1026.7 1119.2a3.5 3.5 0 1 0 7 0a3.5 3.5 0 1 0 -7 0M1030.0 1119.1a3.5 3.5 0 1 0 7 0a3.5 3.5 0 1 0 -7 0M1033.5 1119.4a3.5 3.5 0 1 0 7 0a3.5 3.5 0 1 0 -7 0M1037.0 1119.2a3.5 3.5 0 1 0 7 0a3.5 3.5 0 1 0 -7 0M1040.3 1117.7a3.5 3.5 0 1 0 7 0a3.5 3.5 0 1 0 -7 0M1044.1 1117.8a3.5 3.5 0 1 0 7 0a3.5 3.5 0 1 0 -7 0M1047.4 1117.1a3.5 3.5 0 1 0 7 0a3.5 3.5 0 1 0 -7 0M1050.9 1115.7a3.5 3.5 0 1 0 7 0a3.5 3.5 0 1 0 -7 0M1054.7 1116.1a3.5 3.5 0 1 0 7 0a3.5 3.5 0 1 0 -7 0M1057.9 1116.3a3.5 3.5 0 1 0 7 0a3.5 3.5 0 1 0 -7 0M1061.4 1113.5a3.5 3.5 0 1 0 7 0a3.5 3.5 0 1 0 -7 0M1065.2 1112.4a3.5 3.5 0 1 0 7 0a3.5 3.5 0 1 0 -7 0M1068.4 1113.3a3.5 3.5 0 1 0 7 0a3.5 3.5 0 1 0 -7 0M1072.0 1112.2a3.5 3.5 0 1 0 7 0a3.5 3.5 0 1 0 -7 0M1075.6 1110.6a3.5 3.5 0 1 0 7 0a3.5 3.5 0 1 0 -7 0M1078.9 1111.4a3.5 3.5 0 1 0 7 0a3.5 3.5 0 1 0 -7 0M1082.7 1110.1a3.5 3.5 0 1 0 7 0a3.5 3.5 0 1 0 -7 0M1086.3 1109.6a3.5 3.5 0 1 0 7 0a3.5 3.5 0 1 0 -7 0M1089.4 1108.3a3.5 3.5 0 1 0 7 0a3.5 3.5 0 1 0 -7 0M1093.1 1108.7a3.5 3.5 0 1 0 7 0a3.5 3.5 0 1 0 -7 0M1096.7 1106.2a3.5 3.5 0 1 0 7 0a3.5 3.5 0 1 0 -7 0M1100.0 1106.1a3.5 3.5 0 1 0 7 0a3.5 3.5 0 1 0 -7 0M1103.8 1102.2a3.5 3.5 0 1 0 7 0a3.5 3.5 0 1 0 -7 0M1107.1 1095.8a3.5 3.5 0 1 0 7 0a3.5 3.5 0 1 0 -7 0M1110.5 1091.9a3.5 3.5 0 1 0 7 0a3.5 3.5 0 1 0 -7 0M1114.1 1071.9a3.5 3.5 0 1 0 7 0a3.5 3.5 0 1 0 -7 0M1117.7 1063.3a3.5 3.5 0 1 0 7 0a3.5 3.5 0 1 0 -7 0M1121.0 1038.8a3.5 3.5 0 1 0 7 0a3.5 3.5 0 1 0 -7 0M1124.7 1026.0a3.5 3.5 0 1 0 7 0a3.5 3.5 0 1 0 -7 0M1128.2 1002.6a3.5 3.5 0 1 0 7 0a3.5 3.5 0 1 0 -7 0M1131.6 981.1a3.5 3.5 0 1 0 7 0a3.5 3.5 0 1 0 -7 0M1135.1 954.3a3.5 3.5 0 1 0 7 0a3.5 3.5 0 1 0 -7 0M1138.8 932.9a3.5 3.5 0 1 0 7 0a3.5 3.5 0 1 0 -7 0M1142.2 919.3a3.5 3.5 0 1 0 7 0a3.5 3.5 0 1 0 -7 0M1145.6 892.8a3.5 3.5 0 1 0 7 0a3.5 3.5 0 1 0 -7 0M1149.3 865.5a3.5 3.5 0 1 0 7 0a3.5 3.5 0 1 0 -7 0M1152.5 847.9a3.5 3.5 0 1 0 7 0a3.5 3.5 0 1 0 -7 0M1156.3 830.8a3.5 3.5 0 1 0 7 0a3.5 3.5 0 1 0 -7 0M1159.5 809.0a3.5 3.5 0 1 0 7 0a3.5 3.5 0 1 0 -7 0M1163.2 790.5a3.5 3.5 0 1 0 7 0a3.5 3.5 0 1 0 -7 0M1166.5 770.5a3.5 3.5 0 1 0 7 0a3.5 3.5 0 1 0 -7 0M1170.1 755.6a3.5 3.5 0 1 0 7 0a3.5 3.5 0 1 0 -7 0M1173.8 740.5a3.5 3.5 0 1 0 7 0a3.5 3.5 0 1 0 -7 0M1177.3 726.3a3.5 3.5 0 1 0 7 0a3.5 3.5 0 1 0 -7 0M1180.8 717.3a3.5 3.5 0 1 0 7 0a3.5 3.5 0 1 0 -7 0M1184.1 708.0a3.5 3.5 0 1 0 7 0a3.5 3.5 0 1 0 -7 0M1187.7 701.3a3.5 3.5 0 1 0 7 0a3.5 3.5 0 1 0 -7 0M1191.1 697.0a3.5 3.5 0 1 0 7 0a3.5 3.5 0 1 0 -7 0M1194.7 695.6a3.5 3.5 0 1 0 7 0a3.5 3.5 0 1 0 -7 0M1198.2 694.9a3.5 3.5 0 1 0 7 0a3.5 3.5 0 1 0 -7 0M1201.5 693.8a3.5 3.5 0 1 0 7 0a3.5 3.5 0 1 0 -7 0M1205.2 695.0a3.5 3.5 0 1 0 7 0a3.5 3.5 0 1 0 -7 0M1208.8 693.9a3.5 3.5 0 1 0 7 0a3.5 3.5 0 1 0 -7 0M1212.2 692.3a3.5 3.5 0 1 0 7 0a3.5 3.5 0 1 0 -7 0M1215.9 692.0a3.5 3.5 0 1 0 7 0a3.5 3.5 0 1 0 -7 0M1219.1 691.6a3.5 3.5 0 1 0 7 0a3.5 3.5 0 1 0 -7 0M1222.6 691.1a3.5 3.5 0 1 0 7 0a3.5 3.5 0 1 0 -7 0M1226.0 691.0a3.5 3.5 0 1 0 7 0a3.5 3.5 0 1 0 -7 0M1229.7 690.5a3.5 3.5 0 1 0 7 0a3.5 3.5 0 1 0 -7 0M1233.2 689.9a3.5 3.5 0 1 0 7 0a3.5 3.5 0 1 0 -7 0M1236.7 689.0a3.5 3.5 0 1 0 7 0a3.5 3.5 0 1 0 -7 0M1240.1 689.0a3.5 3.5 0 1 0 7 0a3.5 3.5 0 1 0 -7 0M1243.9 688.3a3.5 3.5 0 1 0 7 0a3.5 3.5 0 1 0 -7 0M1247.1 687.2a3.5 3.5 0 1 0 7 0a3.5 3.5 0 1 0 -7 0M1250.9 687.9a3.5 3.5 0 1 0 7 0a3.5 3.5 0 1 0 -7 0M1254.3 687.2a3.5 3.5 0 1 0 7 0a3.5 3.5 0 1 0 -7 0M1257.8 686.1a3.5 3.5 0 1 0 7 0a3.5 3.5 0 1 0 -7 0M1261.4 686.0a3.5 3.5 0 1 0 7 0a3.5 3.5 0 1 0 -7 0M1264.7 685.4a3.5 3.5 0 1 0 7 0a3.5 3.5 0 1 0 -7 0M1268.1 683.9a3.5 3.5 0 1 0 7 0a3.5 3.5 0 1 0 -7 0M1271.7 684.1a3.5 3.5 0 1 0 7 0a3.5 3.5 0 1 0 -7 0M1275.1 684.0a3.5 3.5 0 1 0 7 0a3.5 3.5 0 1 0 -7 0M1278.7 682.8a3.5 3.5 0 1 0 7 0a3.5 3.5 0 1 0 -7 0M1282.3 681.6a3.5 3.5 0 1 0 7 0a3.5 3.5 0 1 0 -7 0M1285.8 682.8a3.5 3.5 0 1 0 7 0a3.5 3.5 0 1 0 -7 0M1289.2 682.1a3.5 3.5 0 1 0 7 0a3.5 3.5 0 1 0 -7 0M1292.8 681.2a3.5 3.5 0 1 0 7 0a3.5 3.5 0 1 0 -7 0M1296.1 681.0a3.5 3.5 0 1 0 7 0a3.5 3.5 0 1 0 -7 0M1299.9 679.1a3.5 3.5 0 1 0 7 0a3.5 3.5 0 1 0 -7 0M1303.2 679.3a3.5 3.5 0 1 0 7 0a3.5 3.5 0 1 0 -7 0M1306.7 679.2a3.5 3.5 0 1 0 7 0a3.5 3.5 0 1 0 -7 0M1310.2 678.2a3.5 3.5 0 1 0 7 0a3.5 3.5 0 1 0 -7 0M1313.9 678.3a3.5 3.5 0 1 0 7 0a3.5 3.5 0 1 0 -7 0M1317.5 677.6a3.5 3.5 0 1 0 7 0a3.5 3.5 0 1 0 -7 0M1321.0 676.7a3.5 3.5 0 1 0 7 0a3.5 3.5 0 1 0 -7 0M1324.2 675.1a3.5 3.5 0 1 0 7 0a3.5 3.5 0 1 0 -7 0M1327.8 676.7a3.5 3.5 0 1 0 7 0a3.5 3.5 0 1 0 -7 0M1331.3 674.9a3.5 3.5 0 1 0 7 0a3.5 3.5 0 1 0 -7 0M1334.7 673.9a3.5 3.5 0 1 0 7 0a3.5 3.5 0 1 0 -7 0M1338.6 673.7a3.5 3.5 0 1 0 7 0a3.5 3.5 0 1 0 -7 0M1341.7 672.6a3.5 3.5 0 1 0 7 0a3.5 3.5 0 1 0 -7 0M1345.4 672.7a3.5 3.5 0 1 0 7 0a3.5 3.5 0 1 0 -7 0M1349.0 672.3a3.5 3.5 0 1 0 7 0a3.5 3.5 0 1 0 -7 0M1352.6 671.9a3.5 3.5 0 1 0 7 0a3.5 3.5 0 1 0 -7 0M1355.7 671.7a3.5 3.5 0 1 0 7 0a3.5 3.5 0 1 0 -7 0M1359.4 669.9a3.5 3.5 0 1 0 7 0a3.5 3.5 0 1 0 -7 0" stroke="#5a3fc8" stroke-width="1.3" fill="none" clip-path="url(#clipfr)"/><path d="M938.7 1124.7a3.5 3.5 0 1 0 7 0a3.5 3.5 0 1 0 -7 0M942.4 1123.8a3.5 3.5 0 1 0 7 0a3.5 3.5 0 1 0 -7 0M945.9 1123.9a3.5 3.5 0 1 0 7 0a3.5 3.5 0 1 0 -7 0M949.2 1123.5a3.5 3.5 0 1 0 7 0a3.5 3.5 0 1 0 -7 0M952.9 1122.2a3.5 3.5 0 1 0 7 0a3.5 3.5 0 1 0 -7 0M956.3 1122.9a3.5 3.5 0 1 0 7 0a3.5 3.5 0 1 0 -7 0M959.9 1122.7a3.5 3.5 0 1 0 7 0a3.5 3.5 0 1 0 -7 0M963.3 1123.2a3.5 3.5 0 1 0 7 0a3.5 3.5 0 1 0 -7 0M966.8 1122.3a3.5 3.5 0 1 0 7 0a3.5 3.5 0 1 0 -7 0M970.4 1122.6a3.5 3.5 0 1 0 7 0a3.5 3.5 0 1 0 -7 0M973.9 1122.5a3.5 3.5 0 1 0 7 0a3.5 3.5 0 1 0 -7 0M977.3 1121.5a3.5 3.5 0 1 0 7 0a3.5 3.5 0 1 0 -7 0M981.0 1122.4a3.5 3.5 0 1 0 7 0a3.5 3.5 0 1 0 -7 0M984.3 1122.3a3.5 3.5 0 1 0 7 0a3.5 3.5 0 1 0 -7 0M987.8 1122.5a3.5 3.5 0 1 0 7 0a3.5 3.5 0 1 0 -7 0M991.4 1122.0a3.5 3.5 0 1 0 7 0a3.5 3.5 0 1 0 -7 0M994.9 1121.0a3.5 3.5 0 1 0 7 0a3.5 3.5 0 1 0 -7 0M998.3 1121.6a3.5 3.5 0 1 0 7 0a3.5 3.5 0 1 0 -7 0M1002.0 1120.9a3.5 3.5 0 1 0 7 0a3.5 3.5 0 1 0 -7 0M1005.6 1120.9a3.5 3.5 0 1 0 7 0a3.5 3.5 0 1 0 -7 0M1009.0 1121.5a3.5 3.5 0 1 0 7 0a3.5 3.5 0 1 0 -7 0M1012.6 1122.0a3.5 3.5 0 1 0 7 0a3.5 3.5 0 1 0 -7 0M1015.8 1119.5a3.5 3.5 0 1 0 7 0a3.5 3.5 0 1 0 -7 0M1019.4 1121.0a3.5 3.5 0 1 0 7 0a3.5 3.5 0 1 0 -7 0M1022.9 1120.8a3.5 3.5 0 1 0 7 0a3.5 3.5 0 1 0 -7 0M1026.3 1121.3a3.5 3.5 0 1 0 7 0a3.5 3.5 0 1 0 -7 0M1030.0 1109.3a3.5 3.5 0 1 0 7 0a3.5 3.5 0 1 0 -7 0M1033.3 1108.5a3.5 3.5 0 1 0 7 0a3.5 3.5 0 1 0 -7 0M1037.0 1108.0a3.5 3.5 0 1 0 7 0a3.5 3.5 0 1 0 -7 0M1040.6 1107.9a3.5 3.5 0 1 0 7 0a3.5 3.5 0 1 0 -7 0M1044.0 1107.8a3.5 3.5 0 1 0 7 0a3.5 3.5 0 1 0 -7 0M1047.5 1107.0a3.5 3.5 0 1 0 7 0a3.5 3.5 0 1 0 -7 0M1050.9 1105.8a3.5 3.5 0 1 0 7 0a3.5 3.5 0 1 0 -7 0M1054.3 1105.0a3.5 3.5 0 1 0 7 0a3.5 3.5 0 1 0 -7 0M1058.0 1103.5a3.5 3.5 0 1 0 7 0a3.5 3.5 0 1 0 -7 0M1061.7 1102.5a3.5 3.5 0 1 0 7 0a3.5 3.5 0 1 0 -7 0M1065.1 1102.6a3.5 3.5 0 1 0 7 0a3.5 3.5 0 1 0 -7 0M1068.4 1101.2a3.5 3.5 0 1 0 7 0a3.5 3.5 0 1 0 -7 0M1072.1 1101.0a3.5 3.5 0 1 0 7 0a3.5 3.5 0 1 0 -7 0M1075.4 1100.0a3.5 3.5 0 1 0 7 0a3.5 3.5 0 1 0 -7 0M1079.0 1098.7a3.5 3.5 0 1 0 7 0a3.5 3.5 0 1 0 -7 0M1082.6 1098.6a3.5 3.5 0 1 0 7 0a3.5 3.5 0 1 0 -7 0M1086.3 1097.6a3.5 3.5 0 1 0 7 0a3.5 3.5 0 1 0 -7 0M1089.5 1096.6a3.5 3.5 0 1 0 7 0a3.5 3.5 0 1 0 -7 0M1093.1 1095.6a3.5 3.5 0 1 0 7 0a3.5 3.5 0 1 0 -7 0M1096.8 1095.7a3.5 3.5 0 1 0 7 0a3.5 3.5 0 1 0 -7 0M1100.2 1094.3a3.5 3.5 0 1 0 7 0a3.5 3.5 0 1 0 -7 0M1103.6 1095.5a3.5 3.5 0 1 0 7 0a3.5 3.5 0 1 0 -7 0M1107.1 1092.3a3.5 3.5 0 1 0 7 0a3.5 3.5 0 1 0 -7 0M1110.6 1092.7a3.5 3.5 0 1 0 7 0a3.5 3.5 0 1 0 -7 0M1114.1 1092.5a3.5 3.5 0 1 0 7 0a3.5 3.5 0 1 0 -7 0M1117.5 1090.4a3.5 3.5 0 1 0 7 0a3.5 3.5 0 1 0 -7 0M1121.2 1089.3a3.5 3.5 0 1 0 7 0a3.5 3.5 0 1 0 -7 0M1124.8 1088.2a3.5 3.5 0 1 0 7 0a3.5 3.5 0 1 0 -7 0M1128.1 1087.9a3.5 3.5 0 1 0 7 0a3.5 3.5 0 1 0 -7 0M1131.8 1087.9a3.5 3.5 0 1 0 7 0a3.5 3.5 0 1 0 -7 0M1134.9 1086.4a3.5 3.5 0 1 0 7 0a3.5 3.5 0 1 0 -7 0M1138.5 1085.6a3.5 3.5 0 1 0 7 0a3.5 3.5 0 1 0 -7 0M1142.1 1085.2a3.5 3.5 0 1 0 7 0a3.5 3.5 0 1 0 -7 0M1145.6 1082.1a3.5 3.5 0 1 0 7 0a3.5 3.5 0 1 0 -7 0M1149.1 1073.1a3.5 3.5 0 1 0 7 0a3.5 3.5 0 1 0 -7 0M1152.8 1061.3a3.5 3.5 0 1 0 7 0a3.5 3.5 0 1 0 -7 0M1156.0 1057.6a3.5 3.5 0 1 0 7 0a3.5 3.5 0 1 0 -7 0M1159.5 1041.6a3.5 3.5 0 1 0 7 0a3.5 3.5 0 1 0 -7 0M1163.0 1020.4a3.5 3.5 0 1 0 7 0a3.5 3.5 0 1 0 -7 0M1166.7 1000.7a3.5 3.5 0 1 0 7 0a3.5 3.5 0 1 0 -7 0M1170.1 979.5a3.5 3.5 0 1 0 7 0a3.5 3.5 0 1 0 -7 0M1173.5 980.4a3.5 3.5 0 1 0 7 0a3.5 3.5 0 1 0 -7 0M1177.2 947.1a3.5 3.5 0 1 0 7 0a3.5 3.5 0 1 0 -7 0M1180.6 937.1a3.5 3.5 0 1 0 7 0a3.5 3.5 0 1 0 -7 0M1184.1 925.9a3.5 3.5 0 1 0 7 0a3.5 3.5 0 1 0 -7 0M1187.7 891.3a3.5 3.5 0 1 0 7 0a3.5 3.5 0 1 0 -7 0M1191.3 874.8a3.5 3.5 0 1 0 7 0a3.5 3.5 0 1 0 -7 0M1194.7 856.6a3.5 3.5 0 1 0 7 0a3.5 3.5 0 1 0 -7 0M1198.2 835.1a3.5 3.5 0 1 0 7 0a3.5 3.5 0 1 0 -7 0M1201.7 815.2a3.5 3.5 0 1 0 7 0a3.5 3.5 0 1 0 -7 0M1205.3 800.3a3.5 3.5 0 1 0 7 0a3.5 3.5 0 1 0 -7 0M1208.9 781.1a3.5 3.5 0 1 0 7 0a3.5 3.5 0 1 0 -7 0M1212.1 767.1a3.5 3.5 0 1 0 7 0a3.5 3.5 0 1 0 -7 0M1215.7 748.3a3.5 3.5 0 1 0 7 0a3.5 3.5 0 1 0 -7 0M1219.4 735.2a3.5 3.5 0 1 0 7 0a3.5 3.5 0 1 0 -7 0M1222.6 722.8a3.5 3.5 0 1 0 7 0a3.5 3.5 0 1 0 -7 0M1226.3 711.6a3.5 3.5 0 1 0 7 0a3.5 3.5 0 1 0 -7 0M1229.8 702.0a3.5 3.5 0 1 0 7 0a3.5 3.5 0 1 0 -7 0M1233.3 694.5a3.5 3.5 0 1 0 7 0a3.5 3.5 0 1 0 -7 0M1236.9 689.0a3.5 3.5 0 1 0 7 0a3.5 3.5 0 1 0 -7 0M1240.4 685.7a3.5 3.5 0 1 0 7 0a3.5 3.5 0 1 0 -7 0M1243.6 684.5a3.5 3.5 0 1 0 7 0a3.5 3.5 0 1 0 -7 0M1247.3 683.5a3.5 3.5 0 1 0 7 0a3.5 3.5 0 1 0 -7 0M1250.8 682.6a3.5 3.5 0 1 0 7 0a3.5 3.5 0 1 0 -7 0M1254.3 681.8a3.5 3.5 0 1 0 7 0a3.5 3.5 0 1 0 -7 0M1257.7 681.7a3.5 3.5 0 1 0 7 0a3.5 3.5 0 1 0 -7 0M1261.2 680.2a3.5 3.5 0 1 0 7 0a3.5 3.5 0 1 0 -7 0M1264.9 680.4a3.5 3.5 0 1 0 7 0a3.5 3.5 0 1 0 -7 0M1268.3 679.8a3.5 3.5 0 1 0 7 0a3.5 3.5 0 1 0 -7 0M1271.7 678.8a3.5 3.5 0 1 0 7 0a3.5 3.5 0 1 0 -7 0M1275.2 677.8a3.5 3.5 0 1 0 7 0a3.5 3.5 0 1 0 -7 0M1278.7 677.6a3.5 3.5 0 1 0 7 0a3.5 3.5 0 1 0 -7 0M1282.2 677.3a3.5 3.5 0 1 0 7 0a3.5 3.5 0 1 0 -7 0M1285.8 676.8a3.5 3.5 0 1 0 7 0a3.5 3.5 0 1 0 -7 0M1289.1 674.8a3.5 3.5 0 1 0 7 0a3.5 3.5 0 1 0 -7 0M1292.6 674.8a3.5 3.5 0 1 0 7 0a3.5 3.5 0 1 0 -7 0M1296.1 674.0a3.5 3.5 0 1 0 7 0a3.5 3.5 0 1 0 -7 0M1299.6 674.1a3.5 3.5 0 1 0 7 0a3.5 3.5 0 1 0 -7 0M1303.4 673.1a3.5 3.5 0 1 0 7 0a3.5 3.5 0 1 0 -7 0M1306.7 672.8a3.5 3.5 0 1 0 7 0a3.5 3.5 0 1 0 -7 0M1310.3 672.4a3.5 3.5 0 1 0 7 0a3.5 3.5 0 1 0 -7 0M1313.9 672.3a3.5 3.5 0 1 0 7 0a3.5 3.5 0 1 0 -7 0M1317.3 671.9a3.5 3.5 0 1 0 7 0a3.5 3.5 0 1 0 -7 0M1320.7 670.5a3.5 3.5 0 1 0 7 0a3.5 3.5 0 1 0 -7 0M1324.5 671.6a3.5 3.5 0 1 0 7 0a3.5 3.5 0 1 0 -7 0M1328.0 670.2a3.5 3.5 0 1 0 7 0a3.5 3.5 0 1 0 -7 0M1331.2 668.8a3.5 3.5 0 1 0 7 0a3.5 3.5 0 1 0 -7 0M1334.7 668.7a3.5 3.5 0 1 0 7 0a3.5 3.5 0 1 0 -7 0M1338.4 668.6a3.5 3.5 0 1 0 7 0a3.5 3.5 0 1 0 -7 0M1342.0 668.2a3.5 3.5 0 1 0 7 0a3.5 3.5 0 1 0 -7 0M1345.3 668.1a3.5 3.5 0 1 0 7 0a3.5 3.5 0 1 0 -7 0M1349.0 666.1a3.5 3.5 0 1 0 7 0a3.5 3.5 0 1 0 -7 0M1352.3 666.7a3.5 3.5 0 1 0 7 0a3.5 3.5 0 1 0 -7 0M1356.0 665.9a3.5 3.5 0 1 0 7 0a3.5 3.5 0 1 0 -7 0M1359.3 664.8a3.5 3.5 0 1 0 7 0a3.5 3.5 0 1 0 -7 0" stroke="#2a9a9a" stroke-width="1.3" fill="none" clip-path="url(#clipfr)"/><path d="M938.9 1135.9a3.5 3.5 0 1 0 7 0a3.5 3.5 0 1 0 -7 0M942.3 1134.4a3.5 3.5 0 1 0 7 0a3.5 3.5 0 1 0 -7 0M945.9 1134.5a3.5 3.5 0 1 0 7 0a3.5 3.5 0 1 0 -7 0M949.4 1135.9a3.5 3.5 0 1 0 7 0a3.5 3.5 0 1 0 -7 0M953.0 1135.4a3.5 3.5 0 1 0 7 0a3.5 3.5 0 1 0 -7 0M956.6 1135.0a3.5 3.5 0 1 0 7 0a3.5 3.5 0 1 0 -7 0M959.9 1134.8a3.5 3.5 0 1 0 7 0a3.5 3.5 0 1 0 -7 0M963.5 1135.3a3.5 3.5 0 1 0 7 0a3.5 3.5 0 1 0 -7 0M966.9 1133.8a3.5 3.5 0 1 0 7 0a3.5 3.5 0 1 0 -7 0M970.3 1135.1a3.5 3.5 0 1 0 7 0a3.5 3.5 0 1 0 -7 0M974.1 1133.6a3.5 3.5 0 1 0 7 0a3.5 3.5 0 1 0 -7 0M977.4 1133.5a3.5 3.5 0 1 0 7 0a3.5 3.5 0 1 0 -7 0M980.8 1134.0a3.5 3.5 0 1 0 7 0a3.5 3.5 0 1 0 -7 0M984.4 1134.0a3.5 3.5 0 1 0 7 0a3.5 3.5 0 1 0 -7 0M988.1 1133.5a3.5 3.5 0 1 0 7 0a3.5 3.5 0 1 0 -7 0M991.3 1133.3a3.5 3.5 0 1 0 7 0a3.5 3.5 0 1 0 -7 0M995.1 1134.5a3.5 3.5 0 1 0 7 0a3.5 3.5 0 1 0 -7 0M998.5 1133.8a3.5 3.5 0 1 0 7 0a3.5 3.5 0 1 0 -7 0M1002.0 1132.6a3.5 3.5 0 1 0 7 0a3.5 3.5 0 1 0 -7 0M1005.3 1132.9a3.5 3.5 0 1 0 7 0a3.5 3.5 0 1 0 -7 0M1008.8 1132.9a3.5 3.5 0 1 0 7 0a3.5 3.5 0 1 0 -7 0M1012.3 1133.1a3.5 3.5 0 1 0 7 0a3.5 3.5 0 1 0 -7 0M1015.9 1132.8a3.5 3.5 0 1 0 7 0a3.5 3.5 0 1 0 -7 0M1019.5 1132.7a3.5 3.5 0 1 0 7 0a3.5 3.5 0 1 0 -7 0M1022.8 1130.5a3.5 3.5 0 1 0 7 0a3.5 3.5 0 1 0 -7 0M1026.5 1132.8a3.5 3.5 0 1 0 7 0a3.5 3.5 0 1 0 -7 0M1030.0 1108.8a3.5 3.5 0 1 0 7 0a3.5 3.5 0 1 0 -7 0M1033.4 1108.7a3.5 3.5 0 1 0 7 0a3.5 3.5 0 1 0 -7 0M1037.0 1108.1a3.5 3.5 0 1 0 7 0a3.5 3.5 0 1 0 -7 0M1040.7 1107.3a3.5 3.5 0 1 0 7 0a3.5 3.5 0 1 0 -7 0M1043.9 1106.9a3.5 3.5 0 1 0 7 0a3.5 3.5 0 1 0 -7 0M1047.7 1105.0a3.5 3.5 0 1 0 7 0a3.5 3.5 0 1 0 -7 0M1051.0 1104.9a3.5 3.5 0 1 0 7 0a3.5 3.5 0 1 0 -7 0M1054.6 1104.4a3.5 3.5 0 1 0 7 0a3.5 3.5 0 1 0 -7 0M1057.9 1103.7a3.5 3.5 0 1 0 7 0a3.5 3.5 0 1 0 -7 0M1061.7 1102.7a3.5 3.5 0 1 0 7 0a3.5 3.5 0 1 0 -7 0M1065.0 1102.8a3.5 3.5 0 1 0 7 0a3.5 3.5 0 1 0 -7 0M1068.7 1101.5a3.5 3.5 0 1 0 7 0a3.5 3.5 0 1 0 -7 0M1071.9 1100.9a3.5 3.5 0 1 0 7 0a3.5 3.5 0 1 0 -7 0M1075.5 1099.4a3.5 3.5 0 1 0 7 0a3.5 3.5 0 1 0 -7 0M1079.1 1098.7a3.5 3.5 0 1 0 7 0a3.5 3.5 0 1 0 -7 0M1082.4 1099.4a3.5 3.5 0 1 0 7 0a3.5 3.5 0 1 0 -7 0M1086.0 1097.6a3.5 3.5 0 1 0 7 0a3.5 3.5 0 1 0 -7 0M1089.6 1096.1a3.5 3.5 0 1 0 7 0a3.5 3.5 0 1 0 -7 0M1093.3 1096.7a3.5 3.5 0 1 0 7 0a3.5 3.5 0 1 0 -7 0M1096.5 1095.9a3.5 3.5 0 1 0 7 0a3.5 3.5 0 1 0 -7 0M1100.0 1093.8a3.5 3.5 0 1 0 7 0a3.5 3.5 0 1 0 -7 0M1103.5 1093.7a3.5 3.5 0 1 0 7 0a3.5 3.5 0 1 0 -7 0M1107.3 1093.2a3.5 3.5 0 1 0 7 0a3.5 3.5 0 1 0 -7 0M1110.4 1092.8a3.5 3.5 0 1 0 7 0a3.5 3.5 0 1 0 -7 0M1114.2 1091.3a3.5 3.5 0 1 0 7 0a3.5 3.5 0 1 0 -7 0M1117.6 1090.9a3.5 3.5 0 1 0 7 0a3.5 3.5 0 1 0 -7 0M1121.2 1089.7a3.5 3.5 0 1 0 7 0a3.5 3.5 0 1 0 -7 0M1124.5 1088.8a3.5 3.5 0 1 0 7 0a3.5 3.5 0 1 0 -7 0M1128.2 1087.9a3.5 3.5 0 1 0 7 0a3.5 3.5 0 1 0 -7 0M1131.8 1087.7a3.5 3.5 0 1 0 7 0a3.5 3.5 0 1 0 -7 0M1135.3 1087.1a3.5 3.5 0 1 0 7 0a3.5 3.5 0 1 0 -7 0M1138.7 1086.0a3.5 3.5 0 1 0 7 0a3.5 3.5 0 1 0 -7 0M1142.1 1085.3a3.5 3.5 0 1 0 7 0a3.5 3.5 0 1 0 -7 0M1145.7 1084.4a3.5 3.5 0 1 0 7 0a3.5 3.5 0 1 0 -7 0M1149.0 1084.0a3.5 3.5 0 1 0 7 0a3.5 3.5 0 1 0 -7 0M1152.8 1083.1a3.5 3.5 0 1 0 7 0a3.5 3.5 0 1 0 -7 0M1156.2 1082.5a3.5 3.5 0 1 0 7 0a3.5 3.5 0 1 0 -7 0M1159.6 1081.8a3.5 3.5 0 1 0 7 0a3.5 3.5 0 1 0 -7 0M1163.2 1080.5a3.5 3.5 0 1 0 7 0a3.5 3.5 0 1 0 -7 0M1166.6 1079.2a3.5 3.5 0 1 0 7 0a3.5 3.5 0 1 0 -7 0M1170.1 1079.4a3.5 3.5 0 1 0 7 0a3.5 3.5 0 1 0 -7 0M1173.6 1078.0a3.5 3.5 0 1 0 7 0a3.5 3.5 0 1 0 -7 0M1177.2 1077.6a3.5 3.5 0 1 0 7 0a3.5 3.5 0 1 0 -7 0M1180.7 1074.7a3.5 3.5 0 1 0 7 0a3.5 3.5 0 1 0 -7 0M1184.2 1068.0a3.5 3.5 0 1 0 7 0a3.5 3.5 0 1 0 -7 0M1187.5 1063.4a3.5 3.5 0 1 0 7 0a3.5 3.5 0 1 0 -7 0M1191.2 1050.1a3.5 3.5 0 1 0 7 0a3.5 3.5 0 1 0 -7 0M1194.7 1039.8a3.5 3.5 0 1 0 7 0a3.5 3.5 0 1 0 -7 0M1198.2 1047.9a3.5 3.5 0 1 0 7 0a3.5 3.5 0 1 0 -7 0M1201.7 1013.2a3.5 3.5 0 1 0 7 0a3.5 3.5 0 1 0 -7 0M1205.4 996.9a3.5 3.5 0 1 0 7 0a3.5 3.5 0 1 0 -7 0M1208.6 973.3a3.5 3.5 0 1 0 7 0a3.5 3.5 0 1 0 -7 0M1212.2 976.1a3.5 3.5 0 1 0 7 0a3.5 3.5 0 1 0 -7 0M1215.9 952.8a3.5 3.5 0 1 0 7 0a3.5 3.5 0 1 0 -7 0M1219.3 934.6a3.5 3.5 0 1 0 7 0a3.5 3.5 0 1 0 -7 0M1222.6 924.2a3.5 3.5 0 1 0 7 0a3.5 3.5 0 1 0 -7 0M1226.3 896.7a3.5 3.5 0 1 0 7 0a3.5 3.5 0 1 0 -7 0M1229.9 883.1a3.5 3.5 0 1 0 7 0a3.5 3.5 0 1 0 -7 0M1233.2 870.9a3.5 3.5 0 1 0 7 0a3.5 3.5 0 1 0 -7 0M1236.9 855.1a3.5 3.5 0 1 0 7 0a3.5 3.5 0 1 0 -7 0M1240.1 835.7a3.5 3.5 0 1 0 7 0a3.5 3.5 0 1 0 -7 0M1244.0 811.9a3.5 3.5 0 1 0 7 0a3.5 3.5 0 1 0 -7 0M1247.2 797.7a3.5 3.5 0 1 0 7 0a3.5 3.5 0 1 0 -7 0M1250.6 793.0a3.5 3.5 0 1 0 7 0a3.5 3.5 0 1 0 -7 0M1254.4 777.0a3.5 3.5 0 1 0 7 0a3.5 3.5 0 1 0 -7 0M1257.8 759.6a3.5 3.5 0 1 0 7 0a3.5 3.5 0 1 0 -7 0M1261.5 748.4a3.5 3.5 0 1 0 7 0a3.5 3.5 0 1 0 -7 0M1264.9 737.6a3.5 3.5 0 1 0 7 0a3.5 3.5 0 1 0 -7 0M1268.4 726.6a3.5 3.5 0 1 0 7 0a3.5 3.5 0 1 0 -7 0M1271.8 718.2a3.5 3.5 0 1 0 7 0a3.5 3.5 0 1 0 -7 0M1275.5 710.7a3.5 3.5 0 1 0 7 0a3.5 3.5 0 1 0 -7 0M1278.6 704.8a3.5 3.5 0 1 0 7 0a3.5 3.5 0 1 0 -7 0M1282.4 700.6a3.5 3.5 0 1 0 7 0a3.5 3.5 0 1 0 -7 0M1285.9 697.8a3.5 3.5 0 1 0 7 0a3.5 3.5 0 1 0 -7 0M1289.2 696.9a3.5 3.5 0 1 0 7 0a3.5 3.5 0 1 0 -7 0M1292.9 695.8a3.5 3.5 0 1 0 7 0a3.5 3.5 0 1 0 -7 0M1296.3 695.5a3.5 3.5 0 1 0 7 0a3.5 3.5 0 1 0 -7 0M1299.8 695.2a3.5 3.5 0 1 0 7 0a3.5 3.5 0 1 0 -7 0M1303.5 694.7a3.5 3.5 0 1 0 7 0a3.5 3.5 0 1 0 -7 0M1306.7 694.2a3.5 3.5 0 1 0 7 0a3.5 3.5 0 1 0 -7 0M1310.2 694.5a3.5 3.5 0 1 0 7 0a3.5 3.5 0 1 0 -7 0M1313.9 693.2a3.5 3.5 0 1 0 7 0a3.5 3.5 0 1 0 -7 0M1317.2 692.3a3.5 3.5 0 1 0 7 0a3.5 3.5 0 1 0 -7 0M1320.9 692.7a3.5 3.5 0 1 0 7 0a3.5 3.5 0 1 0 -7 0M1324.5 692.1a3.5 3.5 0 1 0 7 0a3.5 3.5 0 1 0 -7 0M1327.8 690.4a3.5 3.5 0 1 0 7 0a3.5 3.5 0 1 0 -7 0M1331.2 690.0a3.5 3.5 0 1 0 7 0a3.5 3.5 0 1 0 -7 0M1335.0 690.5a3.5 3.5 0 1 0 7 0a3.5 3.5 0 1 0 -7 0M1338.5 689.0a3.5 3.5 0 1 0 7 0a3.5 3.5 0 1 0 -7 0M1342.0 688.7a3.5 3.5 0 1 0 7 0a3.5 3.5 0 1 0 -7 0M1345.4 687.7a3.5 3.5 0 1 0 7 0a3.5 3.5 0 1 0 -7 0M1349.0 687.8a3.5 3.5 0 1 0 7 0a3.5 3.5 0 1 0 -7 0M1352.5 687.2a3.5 3.5 0 1 0 7 0a3.5 3.5 0 1 0 -7 0M1355.7 686.9a3.5 3.5 0 1 0 7 0a3.5 3.5 0 1 0 -7 0M1359.3 685.9a3.5 3.5 0 1 0 7 0a3.5 3.5 0 1 0 -7 0" stroke="#84d4ea" stroke-width="1.3" fill="none" clip-path="url(#clipfr)"/><path d="M938.9 1124.7a3.5 3.5 0 1 0 7 0a3.5 3.5 0 1 0 -7 0M942.5 1124.4a3.5 3.5 0 1 0 7 0a3.5 3.5 0 1 0 -7 0M945.7 1124.3a3.5 3.5 0 1 0 7 0a3.5 3.5 0 1 0 -7 0M949.3 1124.9a3.5 3.5 0 1 0 7 0a3.5 3.5 0 1 0 -7 0M953.0 1123.1a3.5 3.5 0 1 0 7 0a3.5 3.5 0 1 0 -7 0M956.5 1123.8a3.5 3.5 0 1 0 7 0a3.5 3.5 0 1 0 -7 0M960.0 1124.1a3.5 3.5 0 1 0 7 0a3.5 3.5 0 1 0 -7 0M963.3 1123.4a3.5 3.5 0 1 0 7 0a3.5 3.5 0 1 0 -7 0M967.1 1123.0a3.5 3.5 0 1 0 7 0a3.5 3.5 0 1 0 -7 0M970.5 1122.9a3.5 3.5 0 1 0 7 0a3.5 3.5 0 1 0 -7 0M974.1 1124.0a3.5 3.5 0 1 0 7 0a3.5 3.5 0 1 0 -7 0M977.3 1123.0a3.5 3.5 0 1 0 7 0a3.5 3.5 0 1 0 -7 0M980.9 1123.2a3.5 3.5 0 1 0 7 0a3.5 3.5 0 1 0 -7 0M984.2 1122.5a3.5 3.5 0 1 0 7 0a3.5 3.5 0 1 0 -7 0M988.1 1122.8a3.5 3.5 0 1 0 7 0a3.5 3.5 0 1 0 -7 0M991.6 1123.5a3.5 3.5 0 1 0 7 0a3.5 3.5 0 1 0 -7 0M995.1 1123.4a3.5 3.5 0 1 0 7 0a3.5 3.5 0 1 0 -7 0M998.3 1122.4a3.5 3.5 0 1 0 7 0a3.5 3.5 0 1 0 -7 0M1001.9 1122.6a3.5 3.5 0 1 0 7 0a3.5 3.5 0 1 0 -7 0M1005.5 1122.4a3.5 3.5 0 1 0 7 0a3.5 3.5 0 1 0 -7 0M1009.0 1122.5a3.5 3.5 0 1 0 7 0a3.5 3.5 0 1 0 -7 0M1012.3 1121.3a3.5 3.5 0 1 0 7 0a3.5 3.5 0 1 0 -7 0M1016.1 1121.6a3.5 3.5 0 1 0 7 0a3.5 3.5 0 1 0 -7 0M1019.4 1121.9a3.5 3.5 0 1 0 7 0a3.5 3.5 0 1 0 -7 0M1023.0 1120.6a3.5 3.5 0 1 0 7 0a3.5 3.5 0 1 0 -7 0M1026.3 1121.4a3.5 3.5 0 1 0 7 0a3.5 3.5 0 1 0 -7 0M1030.0 1108.9a3.5 3.5 0 1 0 7 0a3.5 3.5 0 1 0 -7 0M1033.4 1109.1a3.5 3.5 0 1 0 7 0a3.5 3.5 0 1 0 -7 0M1036.8 1108.6a3.5 3.5 0 1 0 7 0a3.5 3.5 0 1 0 -7 0M1040.5 1106.8a3.5 3.5 0 1 0 7 0a3.5 3.5 0 1 0 -7 0M1043.9 1106.0a3.5 3.5 0 1 0 7 0a3.5 3.5 0 1 0 -7 0M1047.6 1106.2a3.5 3.5 0 1 0 7 0a3.5 3.5 0 1 0 -7 0M1050.9 1105.1a3.5 3.5 0 1 0 7 0a3.5 3.5 0 1 0 -7 0M1054.5 1103.3a3.5 3.5 0 1 0 7 0a3.5 3.5 0 1 0 -7 0M1057.8 1102.7a3.5 3.5 0 1 0 7 0a3.5 3.5 0 1 0 -7 0M1061.4 1103.3a3.5 3.5 0 1 0 7 0a3.5 3.5 0 1 0 -7 0M1065.0 1102.5a3.5 3.5 0 1 0 7 0a3.5 3.5 0 1 0 -7 0M1068.6 1100.7a3.5 3.5 0 1 0 7 0a3.5 3.5 0 1 0 -7 0M1072.0 1098.7a3.5 3.5 0 1 0 7 0a3.5 3.5 0 1 0 -7 0M1075.7 1100.1a3.5 3.5 0 1 0 7 0a3.5 3.5 0 1 0 -7 0M1078.9 1100.0a3.5 3.5 0 1 0 7 0a3.5 3.5 0 1 0 -7 0M1082.7 1098.6a3.5 3.5 0 1 0 7 0a3.5 3.5 0 1 0 -7 0M1085.9 1097.1a3.5 3.5 0 1 0 7 0a3.5 3.5 0 1 0 -7 0M1089.8 1097.0a3.5 3.5 0 1 0 7 0a3.5 3.5 0 1 0 -7 0M1093.1 1095.8a3.5 3.5 0 1 0 7 0a3.5 3.5 0 1 0 -7 0M1096.5 1095.6a3.5 3.5 0 1 0 7 0a3.5 3.5 0 1 0 -7 0M1100.1 1094.9a3.5 3.5 0 1 0 7 0a3.5 3.5 0 1 0 -7 0M1103.7 1093.4a3.5 3.5 0 1 0 7 0a3.5 3.5 0 1 0 -7 0M1107.3 1093.5a3.5 3.5 0 1 0 7 0a3.5 3.5 0 1 0 -7 0M1110.6 1092.8a3.5 3.5 0 1 0 7 0a3.5 3.5 0 1 0 -7 0M1113.9 1091.2a3.5 3.5 0 1 0 7 0a3.5 3.5 0 1 0 -7 0M1117.5 1090.1a3.5 3.5 0 1 0 7 0a3.5 3.5 0 1 0 -7 0M1121.2 1090.0a3.5 3.5 0 1 0 7 0a3.5 3.5 0 1 0 -7 0M1124.7 1089.2a3.5 3.5 0 1 0 7 0a3.5 3.5 0 1 0 -7 0M1128.2 1088.7a3.5 3.5 0 1 0 7 0a3.5 3.5 0 1 0 -7 0M1131.5 1088.0a3.5 3.5 0 1 0 7 0a3.5 3.5 0 1 0 -7 0M1135.1 1087.0a3.5 3.5 0 1 0 7 0a3.5 3.5 0 1 0 -7 0M1138.4 1085.7a3.5 3.5 0 1 0 7 0a3.5 3.5 0 1 0 -7 0M1142.0 1085.6a3.5 3.5 0 1 0 7 0a3.5 3.5 0 1 0 -7 0M1145.6 1083.9a3.5 3.5 0 1 0 7 0a3.5 3.5 0 1 0 -7 0M1149.3 1084.4a3.5 3.5 0 1 0 7 0a3.5 3.5 0 1 0 -7 0M1152.7 1084.3a3.5 3.5 0 1 0 7 0a3.5 3.5 0 1 0 -7 0M1156.3 1081.8a3.5 3.5 0 1 0 7 0a3.5 3.5 0 1 0 -7 0M1159.5 1082.2a3.5 3.5 0 1 0 7 0a3.5 3.5 0 1 0 -7 0M1163.1 1080.0a3.5 3.5 0 1 0 7 0a3.5 3.5 0 1 0 -7 0M1166.5 1080.4a3.5 3.5 0 1 0 7 0a3.5 3.5 0 1 0 -7 0M1170.1 1079.5a3.5 3.5 0 1 0 7 0a3.5 3.5 0 1 0 -7 0M1173.5 1077.8a3.5 3.5 0 1 0 7 0a3.5 3.5 0 1 0 -7 0M1177.3 1077.3a3.5 3.5 0 1 0 7 0a3.5 3.5 0 1 0 -7 0M1180.6 1076.9a3.5 3.5 0 1 0 7 0a3.5 3.5 0 1 0 -7 0M1184.2 1075.4a3.5 3.5 0 1 0 7 0a3.5 3.5 0 1 0 -7 0M1187.7 1074.8a3.5 3.5 0 1 0 7 0a3.5 3.5 0 1 0 -7 0M1191.4 1074.7a3.5 3.5 0 1 0 7 0a3.5 3.5 0 1 0 -7 0M1194.9 1074.1a3.5 3.5 0 1 0 7 0a3.5 3.5 0 1 0 -7 0M1198.2 1073.8a3.5 3.5 0 1 0 7 0a3.5 3.5 0 1 0 -7 0M1201.7 1072.2a3.5 3.5 0 1 0 7 0a3.5 3.5 0 1 0 -7 0M1205.4 1070.8a3.5 3.5 0 1 0 7 0a3.5 3.5 0 1 0 -7 0M1208.7 1069.8a3.5 3.5 0 1 0 7 0a3.5 3.5 0 1 0 -7 0M1212.1 1069.0a3.5 3.5 0 1 0 7 0a3.5 3.5 0 1 0 -7 0M1215.8 1069.2a3.5 3.5 0 1 0 7 0a3.5 3.5 0 1 0 -7 0M1219.1 1068.4a3.5 3.5 0 1 0 7 0a3.5 3.5 0 1 0 -7 0M1222.7 1067.0a3.5 3.5 0 1 0 7 0a3.5 3.5 0 1 0 -7 0M1226.2 1059.1a3.5 3.5 0 1 0 7 0a3.5 3.5 0 1 0 -7 0M1229.7 1053.8a3.5 3.5 0 1 0 7 0a3.5 3.5 0 1 0 -7 0M1233.2 1052.1a3.5 3.5 0 1 0 7 0a3.5 3.5 0 1 0 -7 0M1236.7 1041.7a3.5 3.5 0 1 0 7 0a3.5 3.5 0 1 0 -7 0M1240.2 1030.8a3.5 3.5 0 1 0 7 0a3.5 3.5 0 1 0 -7 0M1243.6 1017.6a3.5 3.5 0 1 0 7 0a3.5 3.5 0 1 0 -7 0M1247.4 1009.6a3.5 3.5 0 1 0 7 0a3.5 3.5 0 1 0 -7 0M1250.6 1000.0a3.5 3.5 0 1 0 7 0a3.5 3.5 0 1 0 -7 0M1254.3 978.0a3.5 3.5 0 1 0 7 0a3.5 3.5 0 1 0 -7 0M1257.8 971.2a3.5 3.5 0 1 0 7 0a3.5 3.5 0 1 0 -7 0M1261.2 964.7a3.5 3.5 0 1 0 7 0a3.5 3.5 0 1 0 -7 0M1264.7 948.5a3.5 3.5 0 1 0 7 0a3.5 3.5 0 1 0 -7 0M1268.1 917.4a3.5 3.5 0 1 0 7 0a3.5 3.5 0 1 0 -7 0M1271.7 911.4a3.5 3.5 0 1 0 7 0a3.5 3.5 0 1 0 -7 0M1275.2 898.1a3.5 3.5 0 1 0 7 0a3.5 3.5 0 1 0 -7 0M1278.8 886.4a3.5 3.5 0 1 0 7 0a3.5 3.5 0 1 0 -7 0M1282.2 871.7a3.5 3.5 0 1 0 7 0a3.5 3.5 0 1 0 -7 0M1285.9 856.4a3.5 3.5 0 1 0 7 0a3.5 3.5 0 1 0 -7 0M1289.3 836.0a3.5 3.5 0 1 0 7 0a3.5 3.5 0 1 0 -7 0M1292.6 826.8a3.5 3.5 0 1 0 7 0a3.5 3.5 0 1 0 -7 0M1296.3 806.8a3.5 3.5 0 1 0 7 0a3.5 3.5 0 1 0 -7 0M1300.0 802.8a3.5 3.5 0 1 0 7 0a3.5 3.5 0 1 0 -7 0M1303.1 788.0a3.5 3.5 0 1 0 7 0a3.5 3.5 0 1 0 -7 0M1306.9 765.1a3.5 3.5 0 1 0 7 0a3.5 3.5 0 1 0 -7 0M1310.5 760.3a3.5 3.5 0 1 0 7 0a3.5 3.5 0 1 0 -7 0M1313.8 750.3a3.5 3.5 0 1 0 7 0a3.5 3.5 0 1 0 -7 0M1317.4 735.7a3.5 3.5 0 1 0 7 0a3.5 3.5 0 1 0 -7 0M1320.8 728.1a3.5 3.5 0 1 0 7 0a3.5 3.5 0 1 0 -7 0M1324.3 719.0a3.5 3.5 0 1 0 7 0a3.5 3.5 0 1 0 -7 0M1327.9 709.3a3.5 3.5 0 1 0 7 0a3.5 3.5 0 1 0 -7 0M1331.4 702.1a3.5 3.5 0 1 0 7 0a3.5 3.5 0 1 0 -7 0M1334.8 696.0a3.5 3.5 0 1 0 7 0a3.5 3.5 0 1 0 -7 0M1338.4 690.1a3.5 3.5 0 1 0 7 0a3.5 3.5 0 1 0 -7 0M1341.9 685.9a3.5 3.5 0 1 0 7 0a3.5 3.5 0 1 0 -7 0M1345.5 682.7a3.5 3.5 0 1 0 7 0a3.5 3.5 0 1 0 -7 0M1348.7 680.8a3.5 3.5 0 1 0 7 0a3.5 3.5 0 1 0 -7 0M1352.2 680.1a3.5 3.5 0 1 0 7 0a3.5 3.5 0 1 0 -7 0M1355.8 678.8a3.5 3.5 0 1 0 7 0a3.5 3.5 0 1 0 -7 0M1359.3 676.9a3.5 3.5 0 1 0 7 0a3.5 3.5 0 1 0 -7 0" stroke="#44aee0" stroke-width="1.3" fill="none" clip-path="url(#clipfr)"/><path d="M938.9 1125.5a3.5 3.5 0 1 0 7 0a3.5 3.5 0 1 0 -7 0M942.2 1126.1a3.5 3.5 0 1 0 7 0a3.5 3.5 0 1 0 -7 0M946.0 1125.0a3.5 3.5 0 1 0 7 0a3.5 3.5 0 1 0 -7 0M949.4 1125.7a3.5 3.5 0 1 0 7 0a3.5 3.5 0 1 0 -7 0M953.1 1125.3a3.5 3.5 0 1 0 7 0a3.5 3.5 0 1 0 -7 0M956.6 1124.1a3.5 3.5 0 1 0 7 0a3.5 3.5 0 1 0 -7 0M960.0 1123.3a3.5 3.5 0 1 0 7 0a3.5 3.5 0 1 0 -7 0M963.4 1123.8a3.5 3.5 0 1 0 7 0a3.5 3.5 0 1 0 -7 0M967.1 1124.3a3.5 3.5 0 1 0 7 0a3.5 3.5 0 1 0 -7 0M970.5 1124.9a3.5 3.5 0 1 0 7 0a3.5 3.5 0 1 0 -7 0M973.9 1124.8a3.5 3.5 0 1 0 7 0a3.5 3.5 0 1 0 -7 0M977.6 1123.1a3.5 3.5 0 1 0 7 0a3.5 3.5 0 1 0 -7 0M981.0 1123.8a3.5 3.5 0 1 0 7 0a3.5 3.5 0 1 0 -7 0M984.4 1124.7a3.5 3.5 0 1 0 7 0a3.5 3.5 0 1 0 -7 0M987.9 1122.8a3.5 3.5 0 1 0 7 0a3.5 3.5 0 1 0 -7 0M991.3 1123.3a3.5 3.5 0 1 0 7 0a3.5 3.5 0 1 0 -7 0M995.0 1122.7a3.5 3.5 0 1 0 7 0a3.5 3.5 0 1 0 -7 0M998.4 1123.1a3.5 3.5 0 1 0 7 0a3.5 3.5 0 1 0 -7 0M1001.9 1124.5a3.5 3.5 0 1 0 7 0a3.5 3.5 0 1 0 -7 0M1005.4 1123.5a3.5 3.5 0 1 0 7 0a3.5 3.5 0 1 0 -7 0M1008.8 1123.0a3.5 3.5 0 1 0 7 0a3.5 3.5 0 1 0 -7 0M1012.5 1122.9a3.5 3.5 0 1 0 7 0a3.5 3.5 0 1 0 -7 0M1015.9 1121.8a3.5 3.5 0 1 0 7 0a3.5 3.5 0 1 0 -7 0M1019.4 1123.0a3.5 3.5 0 1 0 7 0a3.5 3.5 0 1 0 -7 0M1022.9 1122.5a3.5 3.5 0 1 0 7 0a3.5 3.5 0 1 0 -7 0M1026.5 1122.3a3.5 3.5 0 1 0 7 0a3.5 3.5 0 1 0 -7 0M1030.2 1120.0a3.5 3.5 0 1 0 7 0a3.5 3.5 0 1 0 -7 0M1033.4 1119.9a3.5 3.5 0 1 0 7 0a3.5 3.5 0 1 0 -7 0M1037.2 1119.3a3.5 3.5 0 1 0 7 0a3.5 3.5 0 1 0 -7 0M1040.7 1119.4a3.5 3.5 0 1 0 7 0a3.5 3.5 0 1 0 -7 0M1044.1 1117.0a3.5 3.5 0 1 0 7 0a3.5 3.5 0 1 0 -7 0M1047.5 1116.6a3.5 3.5 0 1 0 7 0a3.5 3.5 0 1 0 -7 0M1051.1 1115.6a3.5 3.5 0 1 0 7 0a3.5 3.5 0 1 0 -7 0M1054.5 1115.7a3.5 3.5 0 1 0 7 0a3.5 3.5 0 1 0 -7 0M1058.1 1114.4a3.5 3.5 0 1 0 7 0a3.5 3.5 0 1 0 -7 0M1061.7 1114.3a3.5 3.5 0 1 0 7 0a3.5 3.5 0 1 0 -7 0M1065.2 1113.6a3.5 3.5 0 1 0 7 0a3.5 3.5 0 1 0 -7 0M1068.4 1112.1a3.5 3.5 0 1 0 7 0a3.5 3.5 0 1 0 -7 0M1071.9 1111.2a3.5 3.5 0 1 0 7 0a3.5 3.5 0 1 0 -7 0M1075.7 1110.6a3.5 3.5 0 1 0 7 0a3.5 3.5 0 1 0 -7 0M1079.0 1110.3a3.5 3.5 0 1 0 7 0a3.5 3.5 0 1 0 -7 0M1082.7 1109.8a3.5 3.5 0 1 0 7 0a3.5 3.5 0 1 0 -7 0M1086.0 1108.0a3.5 3.5 0 1 0 7 0a3.5 3.5 0 1 0 -7 0M1089.6 1107.4a3.5 3.5 0 1 0 7 0a3.5 3.5 0 1 0 -7 0M1093.0 1107.9a3.5 3.5 0 1 0 7 0a3.5 3.5 0 1 0 -7 0M1096.7 1107.4a3.5 3.5 0 1 0 7 0a3.5 3.5 0 1 0 -7 0M1100.3 1105.9a3.5 3.5 0 1 0 7 0a3.5 3.5 0 1 0 -7 0M1103.6 1105.2a3.5 3.5 0 1 0 7 0a3.5 3.5 0 1 0 -7 0M1107.1 1105.3a3.5 3.5 0 1 0 7 0a3.5 3.5 0 1 0 -7 0M1110.5 1102.6a3.5 3.5 0 1 0 7 0a3.5 3.5 0 1 0 -7 0M1114.0 1104.6a3.5 3.5 0 1 0 7 0a3.5 3.5 0 1 0 -7 0M1117.8 1103.1a3.5 3.5 0 1 0 7 0a3.5 3.5 0 1 0 -7 0M1120.9 1101.8a3.5 3.5 0 1 0 7 0a3.5 3.5 0 1 0 -7 0M1124.8 1100.6a3.5 3.5 0 1 0 7 0a3.5 3.5 0 1 0 -7 0M1128.2 1101.7a3.5 3.5 0 1 0 7 0a3.5 3.5 0 1 0 -7 0M1131.4 1100.1a3.5 3.5 0 1 0 7 0a3.5 3.5 0 1 0 -7 0M1135.3 1098.3a3.5 3.5 0 1 0 7 0a3.5 3.5 0 1 0 -7 0M1138.5 1097.6a3.5 3.5 0 1 0 7 0a3.5 3.5 0 1 0 -7 0M1142.2 1097.9a3.5 3.5 0 1 0 7 0a3.5 3.5 0 1 0 -7 0M1145.5 1097.1a3.5 3.5 0 1 0 7 0a3.5 3.5 0 1 0 -7 0M1149.3 1096.9a3.5 3.5 0 1 0 7 0a3.5 3.5 0 1 0 -7 0M1152.6 1095.5a3.5 3.5 0 1 0 7 0a3.5 3.5 0 1 0 -7 0M1156.3 1095.6a3.5 3.5 0 1 0 7 0a3.5 3.5 0 1 0 -7 0M1159.5 1095.6a3.5 3.5 0 1 0 7 0a3.5 3.5 0 1 0 -7 0M1163.2 1094.6a3.5 3.5 0 1 0 7 0a3.5 3.5 0 1 0 -7 0M1166.5 1092.9a3.5 3.5 0 1 0 7 0a3.5 3.5 0 1 0 -7 0M1170.0 1093.0a3.5 3.5 0 1 0 7 0a3.5 3.5 0 1 0 -7 0M1173.7 1090.9a3.5 3.5 0 1 0 7 0a3.5 3.5 0 1 0 -7 0M1177.4 1090.1a3.5 3.5 0 1 0 7 0a3.5 3.5 0 1 0 -7 0M1180.8 1089.6a3.5 3.5 0 1 0 7 0a3.5 3.5 0 1 0 -7 0M1184.3 1089.1a3.5 3.5 0 1 0 7 0a3.5 3.5 0 1 0 -7 0M1187.8 1088.1a3.5 3.5 0 1 0 7 0a3.5 3.5 0 1 0 -7 0M1191.2 1087.9a3.5 3.5 0 1 0 7 0a3.5 3.5 0 1 0 -7 0M1194.5 1086.9a3.5 3.5 0 1 0 7 0a3.5 3.5 0 1 0 -7 0M1198.2 1086.4a3.5 3.5 0 1 0 7 0a3.5 3.5 0 1 0 -7 0M1201.6 1085.5a3.5 3.5 0 1 0 7 0a3.5 3.5 0 1 0 -7 0M1205.2 1085.9a3.5 3.5 0 1 0 7 0a3.5 3.5 0 1 0 -7 0M1208.6 1085.0a3.5 3.5 0 1 0 7 0a3.5 3.5 0 1 0 -7 0M1212.2 1084.5a3.5 3.5 0 1 0 7 0a3.5 3.5 0 1 0 -7 0M1215.6 1082.7a3.5 3.5 0 1 0 7 0a3.5 3.5 0 1 0 -7 0M1219.3 1082.2a3.5 3.5 0 1 0 7 0a3.5 3.5 0 1 0 -7 0M1222.7 1082.3a3.5 3.5 0 1 0 7 0a3.5 3.5 0 1 0 -7 0M1226.2 1081.8a3.5 3.5 0 1 0 7 0a3.5 3.5 0 1 0 -7 0M1229.6 1080.8a3.5 3.5 0 1 0 7 0a3.5 3.5 0 1 0 -7 0M1233.2 1079.2a3.5 3.5 0 1 0 7 0a3.5 3.5 0 1 0 -7 0M1236.8 1079.2a3.5 3.5 0 1 0 7 0a3.5 3.5 0 1 0 -7 0M1240.4 1078.5a3.5 3.5 0 1 0 7 0a3.5 3.5 0 1 0 -7 0M1243.8 1078.1a3.5 3.5 0 1 0 7 0a3.5 3.5 0 1 0 -7 0M1247.1 1077.1a3.5 3.5 0 1 0 7 0a3.5 3.5 0 1 0 -7 0M1250.7 1075.3a3.5 3.5 0 1 0 7 0a3.5 3.5 0 1 0 -7 0M1254.2 1076.0a3.5 3.5 0 1 0 7 0a3.5 3.5 0 1 0 -7 0M1257.8 1075.1a3.5 3.5 0 1 0 7 0a3.5 3.5 0 1 0 -7 0M1261.5 1073.2a3.5 3.5 0 1 0 7 0a3.5 3.5 0 1 0 -7 0M1265.0 1073.1a3.5 3.5 0 1 0 7 0a3.5 3.5 0 1 0 -7 0M1268.5 1073.6a3.5 3.5 0 1 0 7 0a3.5 3.5 0 1 0 -7 0M1272.0 1071.5a3.5 3.5 0 1 0 7 0a3.5 3.5 0 1 0 -7 0M1275.4 1072.2a3.5 3.5 0 1 0 7 0a3.5 3.5 0 1 0 -7 0M1279.0 1070.4a3.5 3.5 0 1 0 7 0a3.5 3.5 0 1 0 -7 0M1282.1 1071.6a3.5 3.5 0 1 0 7 0a3.5 3.5 0 1 0 -7 0M1285.8 1070.0a3.5 3.5 0 1 0 7 0a3.5 3.5 0 1 0 -7 0M1289.3 1068.7a3.5 3.5 0 1 0 7 0a3.5 3.5 0 1 0 -7 0M1292.9 1068.0a3.5 3.5 0 1 0 7 0a3.5 3.5 0 1 0 -7 0M1296.4 1065.6a3.5 3.5 0 1 0 7 0a3.5 3.5 0 1 0 -7 0M1299.9 1057.4a3.5 3.5 0 1 0 7 0a3.5 3.5 0 1 0 -7 0M1303.5 1050.1a3.5 3.5 0 1 0 7 0a3.5 3.5 0 1 0 -7 0M1306.6 1044.1a3.5 3.5 0 1 0 7 0a3.5 3.5 0 1 0 -7 0M1310.3 1034.3a3.5 3.5 0 1 0 7 0a3.5 3.5 0 1 0 -7 0M1314.0 1002.1a3.5 3.5 0 1 0 7 0a3.5 3.5 0 1 0 -7 0M1317.1 989.5a3.5 3.5 0 1 0 7 0a3.5 3.5 0 1 0 -7 0M1320.7 980.7a3.5 3.5 0 1 0 7 0a3.5 3.5 0 1 0 -7 0M1324.5 971.4a3.5 3.5 0 1 0 7 0a3.5 3.5 0 1 0 -7 0M1328.0 946.0a3.5 3.5 0 1 0 7 0a3.5 3.5 0 1 0 -7 0M1331.1 921.5a3.5 3.5 0 1 0 7 0a3.5 3.5 0 1 0 -7 0M1334.7 892.5a3.5 3.5 0 1 0 7 0a3.5 3.5 0 1 0 -7 0M1338.5 860.8a3.5 3.5 0 1 0 7 0a3.5 3.5 0 1 0 -7 0M1341.9 841.9a3.5 3.5 0 1 0 7 0a3.5 3.5 0 1 0 -7 0M1345.4 808.9a3.5 3.5 0 1 0 7 0a3.5 3.5 0 1 0 -7 0M1348.9 778.4a3.5 3.5 0 1 0 7 0a3.5 3.5 0 1 0 -7 0M1352.5 742.8a3.5 3.5 0 1 0 7 0a3.5 3.5 0 1 0 -7 0M1356.0 708.3a3.5 3.5 0 1 0 7 0a3.5 3.5 0 1 0 -7 0M1359.2 669.2a3.5 3.5 0 1 0 7 0a3.5 3.5 0 1 0 -7 0" stroke="#3192c0" stroke-width="1.3" fill="none" clip-path="url(#clipfr)"/><rect x="938" y="645.3" width="425" height="504.5" fill="none" stroke="#c4c4c4" stroke-width="2.2"/><rect x="937" y="644.3" width="8" height="506.5" fill="#c6c6c6"/><path d="M939.6 646.3 V1147.8" stroke="#10f0f0" stroke-width="1.2"/><path d="M1360 1137.4 H1363 M1360 1120.6 H1363 M1360 1103.8 H1363 M1360 1070.2 H1363 M1360 1053.4 H1363 M1360 1036.6 H1363 M1360 1019.8 H1363 M1360 986.2 H1363 M1360 969.4 H1363 M1360 952.6 H1363 M1360 935.8 H1363 M1360 902.2 H1363 M1360 885.4 H1363 M1360 868.6 H1363 M1360 851.8 H1363 M1360 818.2 H1363 M1360 801.4 H1363 M1360 784.6 H1363 M1360 767.8 H1363 M1360 734.2 H1363 M1360 717.4 H1363 M1360 700.6 H1363 M1360 683.8 H1363 M1360 650.2 H1363" stroke="#999" stroke-width="1"/></svg>
<div class="t" style="left:447.50px;top:600.17px;width:400px;text-align:center;font-size:19.05px;color:#404040;font-weight:normal;">Liquid Level sensor data</div>
<div class="t" style="left:985.00px;top:600.17px;width:400px;text-align:center;font-size:19.05px;color:#404040;font-weight:normal;">Foam Rejection sensor data</div>
<div class="t" style="left:398.00px;top:684.50px;width:60px;text-align:right;font-size:13px;color:#404040;font-weight:normal">37500</div>
<div class="t" style="left:398.00px;top:762.20px;width:60px;text-align:right;font-size:13px;color:#404040;font-weight:normal">35000</div>
<div class="t" style="left:398.00px;top:839.90px;width:60px;text-align:right;font-size:13px;color:#404040;font-weight:normal">32500</div>
<div class="t" style="left:398.00px;top:917.70px;width:60px;text-align:right;font-size:13px;color:#404040;font-weight:normal">30000</div>
<div class="t" style="left:398.00px;top:995.40px;width:60px;text-align:right;font-size:13px;color:#404040;font-weight:normal">27500</div>
<div class="t" style="left:398.00px;top:1073.10px;width:60px;text-align:right;font-size:13px;color:#404040;font-weight:normal">25000</div>
<div class="t" style="left:1370.50px;top:660.60px;font-size:13px;color:#404040;font-weight:normal;">37500</div>
<div class="t" style="left:1370.50px;top:744.60px;font-size:13px;color:#404040;font-weight:normal;">35000</div>
<div class="t" style="left:1370.50px;top:828.60px;font-size:13px;color:#404040;font-weight:normal;">32500</div>
<div class="t" style="left:1370.50px;top:912.60px;font-size:13px;color:#404040;font-weight:normal;">30000</div>
<div class="t" style="left:1370.50px;top:996.60px;font-size:13px;color:#404040;font-weight:normal;">27500</div>
<div class="t" style="left:1370.50px;top:1080.60px;font-size:13px;color:#404040;font-weight:normal;">25000</div>
<div class="t" style="left:437.30px;top:1159.00px;width:60px;text-align:center;font-size:13px;color:#404040;font-weight:normal;">0</div>
<div class="t" style="left:526.30px;top:1159.00px;width:60px;text-align:center;font-size:13px;color:#404040;font-weight:normal;">25</div>
<div class="t" style="left:615.30px;top:1159.00px;width:60px;text-align:center;font-size:13px;color:#404040;font-weight:normal;">50</div>
<div class="t" style="left:704.30px;top:1159.00px;width:60px;text-align:center;font-size:13px;color:#404040;font-weight:normal;">75</div>
<div class="t" style="left:793.30px;top:1159.00px;width:60px;text-align:center;font-size:13px;color:#404040;font-weight:normal;">100</div>
<div class="t" style="left:435.00px;top:1158.74px;width:60px;text-align:center;font-size:13.3px;color:#404040;font-weight:normal;">Empty</div>
<div class="t" style="left:912.40px;top:1159.00px;width:60px;text-align:center;font-size:13px;color:#404040;font-weight:normal;">0</div>
<div class="t" style="left:1000.00px;top:1159.00px;width:60px;text-align:center;font-size:13px;color:#404040;font-weight:normal;">25</div>
<div class="t" style="left:1087.60px;top:1159.00px;width:60px;text-align:center;font-size:13px;color:#404040;font-weight:normal;">50</div>
<div class="t" style="left:1175.20px;top:1159.00px;width:60px;text-align:center;font-size:13px;color:#404040;font-weight:normal;">75</div>
<div class="t" style="left:1262.80px;top:1159.00px;width:60px;text-align:center;font-size:13px;color:#404040;font-weight:normal;">100</div>
<div class="t" style="left:579.00px;top:1185.00px;width:200px;text-align:center;font-size:13px;color:#404040;font-weight:normal;">Liquid Level</div>
<div class="t" style="left:1050.00px;top:1185.00px;width:200px;text-align:center;font-size:13px;color:#404040;font-weight:normal;">Liquid Level</div>
<div class="t" style="left:349px;top:891.8px;width:100px;text-align:center;font-size:13.4px;color:#404040;transform:rotate(-90deg)">RawCount</div>
<div class="t" style="left:1381.5px;top:892px;width:100px;text-align:center;font-size:13.4px;color:#404040;transform:rotate(90deg)">RawCount</div>
<div class="b" style="left:705px;top:906px;width:177px;height:233px;border:1px solid #111;background:rgba(255,255,255,0.45);"></div>
<div class="t" style="left:760.00px;top:915.60px;font-size:13px;color:#404040;font-weight:normal;">LiquidLevel0_Sns0</div>
<div class="t" style="left:760.00px;top:940.70px;font-size:13px;color:#404040;font-weight:normal;">LiquidLevel0_Sns1</div>
<div class="t" style="left:760.00px;top:965.80px;font-size:13px;color:#404040;font-weight:normal;">LiquidLevel0_Sns2</div>
<div class="t" style="left:760.00px;top:990.90px;font-size:13px;color:#404040;font-weight:normal;">LiquidLevel0_Sns3</div>
<div class="t" style="left:760.00px;top:1016.00px;font-size:13px;color:#404040;font-weight:normal;">LiquidLevel0_Sns4</div>
<div class="t" style="left:760.00px;top:1041.10px;font-size:13px;color:#404040;font-weight:normal;">LiquidLevel0_Sns5</div>
<div class="t" style="left:760.00px;top:1066.20px;font-size:13px;color:#404040;font-weight:normal;">LiquidLevel0_Sns6</div>
<div class="t" style="left:760.00px;top:1091.30px;font-size:13px;color:#404040;font-weight:normal;">LiquidLevel0_Sns7</div>
<div class="t" style="left:760.00px;top:1116.40px;font-size:13px;color:#404040;font-weight:normal;">LiquidLevel0_Sns8</div>
<svg class="b" style="left:0px;top:0px" width="1820" height="1237"><circle cx="734" cy="922.0" r="3.6" fill="none" stroke="#3aaedc" stroke-width="1.3"/><circle cx="734" cy="947.1" r="3.6" fill="none" stroke="#8a94f2" stroke-width="1.3"/><circle cx="734" cy="972.2" r="3.6" fill="none" stroke="#2c80c0" stroke-width="1.3"/><circle cx="734" cy="997.3" r="3.6" fill="none" stroke="#1f2f78" stroke-width="1.3"/><circle cx="734" cy="1022.4" r="3.6" fill="none" stroke="#5a3fc8" stroke-width="1.3"/><circle cx="734" cy="1047.5" r="3.6" fill="none" stroke="#2a9a9a" stroke-width="1.3"/><circle cx="734" cy="1072.6" r="3.6" fill="none" stroke="#84d4ea" stroke-width="1.3"/><circle cx="734" cy="1097.7" r="3.6" fill="none" stroke="#44aee0" stroke-width="1.3"/><circle cx="734" cy="1122.8" r="3.6" fill="none" stroke="#3192c0" stroke-width="1.3"/></svg>
<div class="b" style="left:1151px;top:906px;width:200px;height:233px;border:1px solid #111;background:rgba(255,255,255,0.45);"></div>
<div class="t" style="left:1206.00px;top:915.60px;font-size:13px;color:#404040;font-weight:normal;">LiquidLevel0_FR_Sns0</div>
<div class="t" style="left:1206.00px;top:940.70px;font-size:13px;color:#404040;font-weight:normal;">LiquidLevel0_FR_Sns1</div>
<div class="t" style="left:1206.00px;top:965.80px;font-size:13px;color:#404040;font-weight:normal;">LiquidLevel0_FR_Sns2</div>
<div class="t" style="left:1206.00px;top:990.90px;font-size:13px;color:#404040;font-weight:normal;">LiquidLevel0_FR_Sns3</div>
<div class="t" style="left:1206.00px;top:1016.00px;font-size:13px;color:#404040;font-weight:normal;">LiquidLevel0_FR_Sns4</div>
<div class="t" style="left:1206.00px;top:1041.10px;font-size:13px;color:#404040;font-weight:normal;">LiquidLevel0_FR_Sns5</div>
<div class="t" style="left:1206.00px;top:1066.20px;font-size:13px;color:#404040;font-weight:normal;">LiquidLevel0_FR_Sns6</div>
<div class="t" style="left:1206.00px;top:1091.30px;font-size:13px;color:#404040;font-weight:normal;">LiquidLevel0_FR_Sns7</div>
<div class="t" style="left:1206.00px;top:1116.40px;font-size:13px;color:#404040;font-weight:normal;">LiquidLevel0_FR_Sns8</div>
<svg class="b" style="left:0px;top:0px" width="1820" height="1237"><circle cx="1179" cy="922.0" r="3.6" fill="none" stroke="#3aaedc" stroke-width="1.3"/><circle cx="1179" cy="947.1" r="3.6" fill="none" stroke="#8a94f2" stroke-width="1.3"/><circle cx="1179" cy="972.2" r="3.6" fill="none" stroke="#2c80c0" stroke-width="1.3"/><circle cx="1179" cy="997.3" r="3.6" fill="none" stroke="#1f2f78" stroke-width="1.3"/><circle cx="1179" cy="1022.4" r="3.6" fill="none" stroke="#5a3fc8" stroke-width="1.3"/><circle cx="1179" cy="1047.5" r="3.6" fill="none" stroke="#2a9a9a" stroke-width="1.3"/><circle cx="1179" cy="1072.6" r="3.6" fill="none" stroke="#84d4ea" stroke-width="1.3"/><circle cx="1179" cy="1097.7" r="3.6" fill="none" stroke="#44aee0" stroke-width="1.3"/><circle cx="1179" cy="1122.8" r="3.6" fill="none" stroke="#3192c0" stroke-width="1.3"/></svg>
<svg class="b" style="left:0px;top:0px" width="1820" height="1237"><clipPath id="tclip"><rect x="1470" y="208" width="319" height="1012"/></clipPath><g clip-path="url(#tclip)"><path d="M1572.6 190 H1681.3 V1117.77 A54.35 18 0 0 1 1572.6 1117.77 Z" fill="#3a9b91" stroke="#111" stroke-width="1.4"/><path d="M1572.6 201.30 A54.35 18 0 0 0 1681.3 201.30M1572.6 219.27 A54.35 18 0 0 0 1681.3 219.27M1572.6 237.24 A54.35 18 0 0 0 1681.3 237.24M1572.6 255.21 A54.35 18 0 0 0 1681.3 255.21M1572.6 273.18 A54.35 18 0 0 0 1681.3 273.18M1572.6 291.15 A54.35 18 0 0 0 1681.3 291.15M1572.6 309.12 A54.35 18 0 0 0 1681.3 309.12M1572.6 327.09 A54.35 18 0 0 0 1681.3 327.09M1572.6 345.06 A54.35 18 0 0 0 1681.3 345.06M1572.6 363.03 A54.35 18 0 0 0 1681.3 363.03M1572.6 381.00 A54.35 18 0 0 0 1681.3 381.00M1572.6 398.97 A54.35 18 0 0 0 1681.3 398.97M1572.6 416.94 A54.35 18 0 0 0 1681.3 416.94M1572.6 434.91 A54.35 18 0 0 0 1681.3 434.91M1572.6 452.88 A54.35 18 0 0 0 1681.3 452.88M1572.6 470.85 A54.35 18 0 0 0 1681.3 470.85M1572.6 488.82 A54.35 18 0 0 0 1681.3 488.82M1572.6 506.79 A54.35 18 0 0 0 1681.3 506.79M1572.6 524.76 A54.35 18 0 0 0 1681.3 524.76M1572.6 542.73 A54.35 18 0 0 0 1681.3 542.73M1572.6 560.70 A54.35 18 0 0 0 1681.3 560.70M1572.6 578.67 A54.35 18 0 0 0 1681.3 578.67M1572.6 596.64 A54.35 18 0 0 0 1681.3 596.64M1572.6 614.61 A54.35 18 0 0 0 1681.3 614.61M1572.6 632.58 A54.35 18 0 0 0 1681.3 632.58M1572.6 650.55 A54.35 18 0 0 0 1681.3 650.55M1572.6 668.52 A54.35 18 0 0 0 1681.3 668.52M1572.6 686.49 A54.35 18 0 0 0 1681.3 686.49M1572.6 704.46 A54.35 18 0 0 0 1681.3 704.46M1572.6 722.43 A54.35 18 0 0 0 1681.3 722.43M1572.6 740.40 A54.35 18 0 0 0 1681.3 740.40M1572.6 758.37 A54.35 18 0 0 0 1681.3 758.37M1572.6 776.34 A54.35 18 0 0 0 1681.3 776.34M1572.6 794.31 A54.35 18 0 0 0 1681.3 794.31M1572.6 812.28 A54.35 18 0 0 0 1681.3 812.28M1572.6 830.25 A54.35 18 0 0 0 1681.3 830.25M1572.6 848.22 A54.35 18 0 0 0 1681.3 848.22M1572.6 866.19 A54.35 18 0 0 0 1681.3 866.19M1572.6 884.16 A54.35 18 0 0 0 1681.3 884.16M1572.6 902.13 A54.35 18 0 0 0 1681.3 902.13M1572.6 920.10 A54.35 18 0 0 0 1681.3 920.10M1572.6 938.07 A54.35 18 0 0 0 1681.3 938.07M1572.6 956.04 A54.35 18 0 0 0 1681.3 956.04M1572.6 974.01 A54.35 18 0 0 0 1681.3 974.01M1572.6 991.98 A54.35 18 0 0 0 1681.3 991.98M1572.6 1009.95 A54.35 18 0 0 0 1681.3 1009.95M1572.6 1027.92 A54.35 18 0 0 0 1681.3 1027.92M1572.6 1045.89 A54.35 18 0 0 0 1681.3 1045.89M1572.6 1063.86 A54.35 18 0 0 0 1681.3 1063.86M1572.6 1081.83 A54.35 18 0 0 0 1681.3 1081.83M1572.6 1099.80 A54.35 18 0 0 0 1681.3 1099.80" fill="none" stroke="#111" stroke-width="1.4"/><path d="M1572.6 1177.6 V1195 A54.35 18.5 0 0 0 1681.3 1195 V1177.6" fill="#5ee9dd" stroke="#111" stroke-width="1.2"/><ellipse cx="1626.95" cy="1177.6" rx="54.35" ry="18.2" fill="#5ee9dd" stroke="#111" stroke-width="1.2"/><path d="M1682 1186.6 L1698.5 1177.6 V1195.8 Z" fill="#00f0ff" stroke="#222" stroke-width="1"/></g></svg>
<div class="t" style="left:1586.95px;top:1170.80px;width:80px;text-align:center;font-size:13px;color:#111;font-weight:normal;">Empty</div>
<div class="b" style="left:0px;top:0px;width:1820px;height:1px;background:#111;"></div>
<div class="b" style="left:0px;top:1235px;width:1820px;height:2px;background:#111;"></div>
<div class="b" style="left:0px;top:0px;width:1px;height:1237px;background:#111;"></div>
<div class="b" style="left:1819px;top:0px;width:1px;height:1237px;background:#111;"></div>
</body></html>
